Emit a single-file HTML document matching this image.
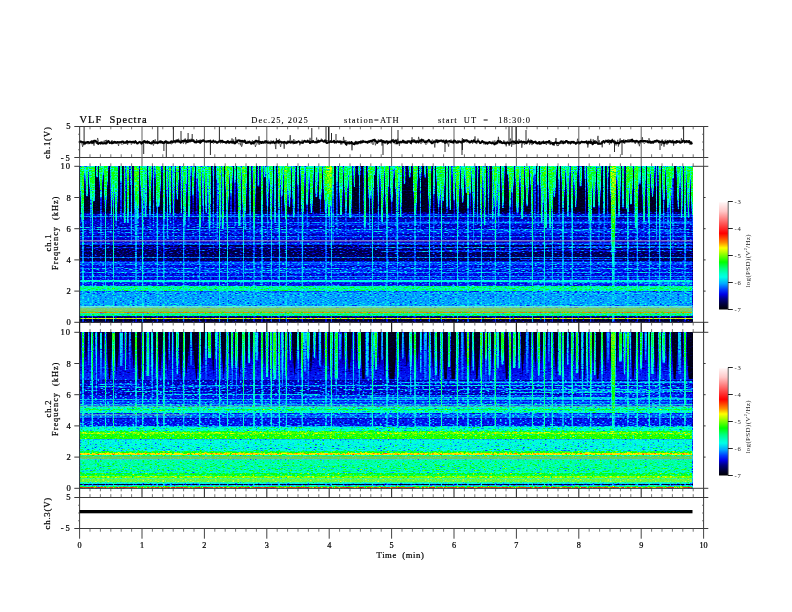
<!DOCTYPE html><html><head><meta charset="utf-8"><style>html,body{margin:0;padding:0;background:#fff;width:792px;height:612px;overflow:hidden}svg{display:block;will-change:transform}text{stroke:#000;stroke-width:0.22px;fill:#000}text.thin{stroke:none;fill:#222}text.mid{stroke-width:0.06px}</style></head><body><svg width="792" height="612" viewBox="0 0 792 612" font-family="Liberation Serif, serif" fill="#111"><defs><filter id="fp2t" x="79.6" y="166.30" width="612.9" height="46.00" filterUnits="userSpaceOnUse" color-interpolation-filters="sRGB"><feTurbulence type="fractalNoise" baseFrequency="0.4 0.95" numOctaves="1" seed="2" result="n"/><feComponentTransfer in="n" result="nt"><feFuncR type="table" tableValues="0 0.1 0.2 0.3 0.4 0.47 0.5 0.5 0.5 0.5 0.5"/><feFuncG type="table" tableValues="0 0 0 0 0 0.02 0.2 0.5 0.9 1 1"/><feFuncA type="linear" slope="0" intercept="1"/></feComponentTransfer><feColorMatrix in="nt" type="matrix" values="1 0 0 0 0  1 0 0 0 0  1 0 0 0 0  0 0 0 0 1" result="nd"/><feColorMatrix in="nt" type="matrix" values="0 1 0 0 0  0 1 0 0 0  0 1 0 0 0  0 0 0 0 1" result="nr"/><feGaussianBlur in="SourceGraphic" stdDeviation="0.5 0" result="sb"/><feComposite in="sb" in2="nd" operator="arithmetic" k1="1.8" k2="0.100" k3="0" k4="0" result="v1"/><feComposite in="v1" in2="nr" operator="arithmetic" k1="-0.1" k2="1" k3="0.1" k4="0" result="v"/><feComponentTransfer in="v" result="c"><feFuncR type="table" tableValues="0.000 0.000 0.000 0.000 0.000 0.000 0.000 0.000 0.000 0.000 0.000 0.000 0.000 0.000 0.000 0.000 0.000 0.000 0.000 0.000 0.000 0.000 0.000 0.000 0.000 0.000 0.000 0.000 0.000 0.000 0.000 0.000 0.000 0.000 0.000 0.000 0.000 0.000 0.000 0.000 0.000 0.000 0.000 0.000 0.008 0.085 0.162 0.239 0.316 0.393 0.471 0.552 0.633 0.713 0.785 0.857 0.928 1.000 1.000 1.000 1.000 1.000 1.000 1.000 1.000 1.000 1.000 1.000 1.000 1.000 1.000 1.000 1.000 1.000 1.000 1.000 1.000 1.000 1.000 1.000 1.000 1.000 1.000 1.000 1.000 1.000 1.000 1.000 1.000 1.000 1.000 1.000 1.000 1.000 1.000 1.000 1.000 1.000 1.000 1.000 1.000"/><feFuncG type="table" tableValues="0.000 0.000 0.000 0.000 0.000 0.000 0.000 0.000 0.000 0.000 0.000 0.000 0.000 0.000 0.000 0.052 0.105 0.157 0.209 0.275 0.353 0.431 0.510 0.588 0.667 0.722 0.778 0.833 0.889 0.944 1.000 1.000 1.000 1.000 1.000 1.000 1.000 1.000 1.000 1.000 1.000 1.000 1.000 1.000 1.000 1.000 1.000 1.000 1.000 1.000 1.000 1.000 1.000 1.000 1.000 1.000 1.000 1.000 0.910 0.820 0.729 0.639 0.549 0.482 0.416 0.349 0.282 0.217 0.155 0.093 0.031 0.017 0.051 0.086 0.124 0.162 0.200 0.238 0.276 0.314 0.353 0.392 0.431 0.471 0.510 0.549 0.588 0.627 0.667 0.706 0.745 0.784 0.806 0.827 0.849 0.870 0.892 0.913 0.935 0.965 1.000"/><feFuncB type="table" tableValues="0.000 0.047 0.094 0.141 0.188 0.235 0.293 0.351 0.409 0.466 0.533 0.625 0.717 0.810 0.902 0.924 0.946 0.967 0.989 1.000 1.000 1.000 1.000 1.000 1.000 0.984 0.967 0.951 0.935 0.918 0.902 0.863 0.824 0.784 0.724 0.664 0.604 0.544 0.478 0.397 0.316 0.235 0.154 0.073 0.000 0.000 0.000 0.000 0.000 0.000 0.000 0.000 0.000 0.000 0.000 0.000 0.000 0.000 0.000 0.000 0.000 0.000 0.000 0.000 0.000 0.000 0.000 0.000 0.000 0.000 0.000 0.017 0.051 0.086 0.124 0.162 0.200 0.238 0.276 0.314 0.353 0.392 0.431 0.471 0.510 0.549 0.588 0.627 0.667 0.706 0.745 0.784 0.806 0.827 0.849 0.870 0.892 0.913 0.935 0.965 1.000"/><feFuncA type="linear" slope="0" intercept="1"/></feComponentTransfer><feGaussianBlur in="c" stdDeviation="0.6"/></filter><filter id="fp3t" x="79.6" y="332.30" width="612.9" height="47.00" filterUnits="userSpaceOnUse" color-interpolation-filters="sRGB"><feTurbulence type="fractalNoise" baseFrequency="0.4 0.95" numOctaves="1" seed="5" result="n"/><feComponentTransfer in="n" result="nt"><feFuncR type="table" tableValues="0 0.1 0.2 0.3 0.45 0.5 0.5 0.5 0.5 0.5 0.5"/><feFuncG type="table" tableValues="0 0 0 0 0 0.02 0.2 0.5 0.9 1 1"/><feFuncA type="linear" slope="0" intercept="1"/></feComponentTransfer><feColorMatrix in="nt" type="matrix" values="1 0 0 0 0  1 0 0 0 0  1 0 0 0 0  0 0 0 0 1" result="nd"/><feColorMatrix in="nt" type="matrix" values="0 1 0 0 0  0 1 0 0 0  0 1 0 0 0  0 0 0 0 1" result="nr"/><feGaussianBlur in="SourceGraphic" stdDeviation="0.5 0" result="sb"/><feComposite in="sb" in2="nd" operator="arithmetic" k1="1.4" k2="0.300" k3="0" k4="0" result="v1"/><feComposite in="v1" in2="nr" operator="arithmetic" k1="-0.08" k2="1" k3="0.08" k4="0" result="v"/><feComponentTransfer in="v" result="c"><feFuncR type="table" tableValues="0.000 0.000 0.000 0.000 0.000 0.000 0.000 0.000 0.000 0.000 0.000 0.000 0.000 0.000 0.000 0.000 0.000 0.000 0.000 0.000 0.000 0.000 0.000 0.000 0.000 0.000 0.000 0.000 0.000 0.000 0.000 0.000 0.000 0.000 0.000 0.000 0.000 0.000 0.000 0.000 0.000 0.000 0.000 0.000 0.008 0.085 0.162 0.239 0.316 0.393 0.471 0.552 0.633 0.713 0.785 0.857 0.928 1.000 1.000 1.000 1.000 1.000 1.000 1.000 1.000 1.000 1.000 1.000 1.000 1.000 1.000 1.000 1.000 1.000 1.000 1.000 1.000 1.000 1.000 1.000 1.000 1.000 1.000 1.000 1.000 1.000 1.000 1.000 1.000 1.000 1.000 1.000 1.000 1.000 1.000 1.000 1.000 1.000 1.000 1.000 1.000"/><feFuncG type="table" tableValues="0.000 0.000 0.000 0.000 0.000 0.000 0.000 0.000 0.000 0.000 0.000 0.000 0.000 0.000 0.000 0.052 0.105 0.157 0.209 0.275 0.353 0.431 0.510 0.588 0.667 0.722 0.778 0.833 0.889 0.944 1.000 1.000 1.000 1.000 1.000 1.000 1.000 1.000 1.000 1.000 1.000 1.000 1.000 1.000 1.000 1.000 1.000 1.000 1.000 1.000 1.000 1.000 1.000 1.000 1.000 1.000 1.000 1.000 0.910 0.820 0.729 0.639 0.549 0.482 0.416 0.349 0.282 0.217 0.155 0.093 0.031 0.017 0.051 0.086 0.124 0.162 0.200 0.238 0.276 0.314 0.353 0.392 0.431 0.471 0.510 0.549 0.588 0.627 0.667 0.706 0.745 0.784 0.806 0.827 0.849 0.870 0.892 0.913 0.935 0.965 1.000"/><feFuncB type="table" tableValues="0.000 0.047 0.094 0.141 0.188 0.235 0.293 0.351 0.409 0.466 0.533 0.625 0.717 0.810 0.902 0.924 0.946 0.967 0.989 1.000 1.000 1.000 1.000 1.000 1.000 0.984 0.967 0.951 0.935 0.918 0.902 0.863 0.824 0.784 0.724 0.664 0.604 0.544 0.478 0.397 0.316 0.235 0.154 0.073 0.000 0.000 0.000 0.000 0.000 0.000 0.000 0.000 0.000 0.000 0.000 0.000 0.000 0.000 0.000 0.000 0.000 0.000 0.000 0.000 0.000 0.000 0.000 0.000 0.000 0.000 0.000 0.017 0.051 0.086 0.124 0.162 0.200 0.238 0.276 0.314 0.353 0.392 0.431 0.471 0.510 0.549 0.588 0.627 0.667 0.706 0.745 0.784 0.806 0.827 0.849 0.870 0.892 0.913 0.935 0.965 1.000"/><feFuncA type="linear" slope="0" intercept="1"/></feComponentTransfer><feGaussianBlur in="c" stdDeviation="0.6"/></filter><filter id="fp2" x="79.6" y="212.30" width="612.9" height="110.00" filterUnits="userSpaceOnUse" color-interpolation-filters="sRGB"><feTurbulence type="fractalNoise" baseFrequency="0.4 0.95" numOctaves="1" seed="2" result="n"/><feComponentTransfer in="n" result="nt"><feFuncR type="table" tableValues="0 0.1 0.2 0.3 0.45 0.5 0.5 0.5 0.5 0.5 0.5"/><feFuncG type="table" tableValues="0 0 0 0 0 0.02 0.2 0.5 0.9 1 1"/><feFuncA type="linear" slope="0" intercept="1"/></feComponentTransfer><feColorMatrix in="nt" type="matrix" values="1 0 0 0 0  1 0 0 0 0  1 0 0 0 0  0 0 0 0 1" result="nd"/><feColorMatrix in="nt" type="matrix" values="0 1 0 0 0  0 1 0 0 0  0 1 0 0 0  0 0 0 0 1" result="nr"/><feGaussianBlur in="SourceGraphic" stdDeviation="0.5 0" result="sb"/><feComposite in="sb" in2="nd" operator="arithmetic" k1="1.4" k2="0.300" k3="0" k4="0" result="v1"/><feComposite in="v1" in2="nr" operator="arithmetic" k1="-0.22" k2="1" k3="0.22" k4="0" result="v"/><feComponentTransfer in="v" result="c"><feFuncR type="table" tableValues="0.000 0.000 0.000 0.000 0.000 0.000 0.000 0.000 0.000 0.000 0.000 0.000 0.000 0.000 0.000 0.000 0.000 0.000 0.000 0.000 0.000 0.000 0.000 0.000 0.000 0.000 0.000 0.000 0.000 0.000 0.000 0.000 0.000 0.000 0.000 0.000 0.000 0.000 0.000 0.000 0.000 0.000 0.000 0.000 0.008 0.085 0.162 0.239 0.316 0.393 0.471 0.552 0.633 0.713 0.785 0.857 0.928 1.000 1.000 1.000 1.000 1.000 1.000 1.000 1.000 1.000 1.000 1.000 1.000 1.000 1.000 1.000 1.000 1.000 1.000 1.000 1.000 1.000 1.000 1.000 1.000 1.000 1.000 1.000 1.000 1.000 1.000 1.000 1.000 1.000 1.000 1.000 1.000 1.000 1.000 1.000 1.000 1.000 1.000 1.000 1.000"/><feFuncG type="table" tableValues="0.000 0.000 0.000 0.000 0.000 0.000 0.000 0.000 0.000 0.000 0.000 0.000 0.000 0.000 0.000 0.052 0.105 0.157 0.209 0.275 0.353 0.431 0.510 0.588 0.667 0.722 0.778 0.833 0.889 0.944 1.000 1.000 1.000 1.000 1.000 1.000 1.000 1.000 1.000 1.000 1.000 1.000 1.000 1.000 1.000 1.000 1.000 1.000 1.000 1.000 1.000 1.000 1.000 1.000 1.000 1.000 1.000 1.000 0.910 0.820 0.729 0.639 0.549 0.482 0.416 0.349 0.282 0.217 0.155 0.093 0.031 0.017 0.051 0.086 0.124 0.162 0.200 0.238 0.276 0.314 0.353 0.392 0.431 0.471 0.510 0.549 0.588 0.627 0.667 0.706 0.745 0.784 0.806 0.827 0.849 0.870 0.892 0.913 0.935 0.965 1.000"/><feFuncB type="table" tableValues="0.000 0.047 0.094 0.141 0.188 0.235 0.293 0.351 0.409 0.466 0.533 0.625 0.717 0.810 0.902 0.924 0.946 0.967 0.989 1.000 1.000 1.000 1.000 1.000 1.000 0.984 0.967 0.951 0.935 0.918 0.902 0.863 0.824 0.784 0.724 0.664 0.604 0.544 0.478 0.397 0.316 0.235 0.154 0.073 0.000 0.000 0.000 0.000 0.000 0.000 0.000 0.000 0.000 0.000 0.000 0.000 0.000 0.000 0.000 0.000 0.000 0.000 0.000 0.000 0.000 0.000 0.000 0.000 0.000 0.000 0.000 0.017 0.051 0.086 0.124 0.162 0.200 0.238 0.276 0.314 0.353 0.392 0.431 0.471 0.510 0.549 0.588 0.627 0.667 0.706 0.745 0.784 0.806 0.827 0.849 0.870 0.892 0.913 0.935 0.965 1.000"/><feFuncA type="linear" slope="0" intercept="1"/></feComponentTransfer><feGaussianBlur in="c" stdDeviation="0.6"/></filter><linearGradient id="gr0" x1="0" y1="0" x2="0" y2="1"><stop offset="0" stop-color="#080808"/><stop offset="0.5" stop-color="#141414"/><stop offset="1" stop-color="#1f1f1f"/></linearGradient><linearGradient id="gr1" x1="0" y1="0" x2="0" y2="1"><stop offset="0" stop-color="#6b6b6b"/><stop offset="0.7" stop-color="#666666"/><stop offset="1" stop-color="#4a4a4a"/></linearGradient><linearGradient id="gr2" x1="0" y1="0" x2="0" y2="1"><stop offset="0" stop-color="#525252"/><stop offset="0.3" stop-color="#525252"/><stop offset="1" stop-color="#303030"/></linearGradient><linearGradient id="gr3" x1="0" y1="0" x2="0" y2="1"><stop offset="0" stop-color="#6b6b6b"/><stop offset="0.7" stop-color="#666666"/><stop offset="1" stop-color="#4f4f4f"/></linearGradient><linearGradient id="gr4" x1="0" y1="0" x2="0" y2="1"><stop offset="0" stop-color="#737373"/><stop offset="0.7" stop-color="#6e6e6e"/><stop offset="1" stop-color="#525252"/></linearGradient><linearGradient id="gr5" x1="0" y1="0" x2="0" y2="1"><stop offset="0" stop-color="#4c4c4c"/><stop offset="0.3" stop-color="#4c4c4c"/><stop offset="1" stop-color="#2b2b2b"/></linearGradient><linearGradient id="gr6" x1="0" y1="0" x2="0" y2="1"><stop offset="0" stop-color="#757575"/><stop offset="0.7" stop-color="#707070"/><stop offset="1" stop-color="#545454"/></linearGradient><linearGradient id="gr7" x1="0" y1="0" x2="0" y2="1"><stop offset="0" stop-color="#757575"/><stop offset="0.7" stop-color="#707070"/><stop offset="1" stop-color="#4a4a4a"/></linearGradient><linearGradient id="gr8" x1="0" y1="0" x2="0" y2="1"><stop offset="0" stop-color="#737373"/><stop offset="0.7" stop-color="#6e6e6e"/><stop offset="1" stop-color="#474747"/></linearGradient><linearGradient id="gr9" x1="0" y1="0" x2="0" y2="1"><stop offset="0" stop-color="#575757"/><stop offset="0.3" stop-color="#575757"/><stop offset="1" stop-color="#363636"/></linearGradient><linearGradient id="gr10" x1="0" y1="0" x2="0" y2="1"><stop offset="0" stop-color="#757575"/><stop offset="0.7" stop-color="#707070"/><stop offset="1" stop-color="#4f4f4f"/></linearGradient><linearGradient id="gr11" x1="0" y1="0" x2="0" y2="1"><stop offset="0" stop-color="#454545"/><stop offset="0.3" stop-color="#454545"/><stop offset="1" stop-color="#242424"/></linearGradient><linearGradient id="gr12" x1="0" y1="0" x2="0" y2="1"><stop offset="0" stop-color="#707070"/><stop offset="0.7" stop-color="#6b6b6b"/><stop offset="1" stop-color="#4f4f4f"/></linearGradient><linearGradient id="gr13" x1="0" y1="0" x2="0" y2="1"><stop offset="0" stop-color="#6e6e6e"/><stop offset="0.7" stop-color="#696969"/><stop offset="1" stop-color="#4a4a4a"/></linearGradient><linearGradient id="gr14" x1="0" y1="0" x2="0" y2="1"><stop offset="0" stop-color="#545454"/><stop offset="0.3" stop-color="#545454"/><stop offset="1" stop-color="#333333"/></linearGradient><linearGradient id="gr15" x1="0" y1="0" x2="0" y2="1"><stop offset="0" stop-color="#757575"/><stop offset="0.7" stop-color="#707070"/><stop offset="1" stop-color="#525252"/></linearGradient><linearGradient id="gr16" x1="0" y1="0" x2="0" y2="1"><stop offset="0" stop-color="#6e6e6e"/><stop offset="0.7" stop-color="#696969"/><stop offset="1" stop-color="#525252"/></linearGradient><linearGradient id="gr17" x1="0" y1="0" x2="0" y2="1"><stop offset="0" stop-color="#787878"/><stop offset="0.7" stop-color="#737373"/><stop offset="1" stop-color="#525252"/></linearGradient><linearGradient id="gr18" x1="0" y1="0" x2="0" y2="1"><stop offset="0" stop-color="#787878"/><stop offset="0.7" stop-color="#737373"/><stop offset="1" stop-color="#474747"/></linearGradient><linearGradient id="gr19" x1="0" y1="0" x2="0" y2="1"><stop offset="0" stop-color="#696969"/><stop offset="0.7" stop-color="#636363"/><stop offset="1" stop-color="#525252"/></linearGradient><linearGradient id="gr20" x1="0" y1="0" x2="0" y2="1"><stop offset="0" stop-color="#787878"/><stop offset="0.7" stop-color="#737373"/><stop offset="1" stop-color="#4f4f4f"/></linearGradient><linearGradient id="gr21" x1="0" y1="0" x2="0" y2="1"><stop offset="0" stop-color="#4f4f4f"/><stop offset="0.3" stop-color="#4f4f4f"/><stop offset="1" stop-color="#2e2e2e"/></linearGradient><linearGradient id="gr22" x1="0" y1="0" x2="0" y2="1"><stop offset="0" stop-color="#6e6e6e"/><stop offset="0.7" stop-color="#696969"/><stop offset="1" stop-color="#474747"/></linearGradient><linearGradient id="gr23" x1="0" y1="0" x2="0" y2="1"><stop offset="0" stop-color="#4a4a4a"/><stop offset="0.3" stop-color="#4a4a4a"/><stop offset="1" stop-color="#292929"/></linearGradient><linearGradient id="gr24" x1="0" y1="0" x2="0" y2="1"><stop offset="0" stop-color="#787878"/><stop offset="0.7" stop-color="#737373"/><stop offset="1" stop-color="#4a4a4a"/></linearGradient><linearGradient id="gr25" x1="0" y1="0" x2="0" y2="1"><stop offset="0" stop-color="#707070"/><stop offset="0.7" stop-color="#6b6b6b"/><stop offset="1" stop-color="#4a4a4a"/></linearGradient><linearGradient id="gr26" x1="0" y1="0" x2="0" y2="1"><stop offset="0" stop-color="#595959"/><stop offset="0.3" stop-color="#595959"/><stop offset="1" stop-color="#383838"/></linearGradient><linearGradient id="gr27" x1="0" y1="0" x2="0" y2="1"><stop offset="0" stop-color="#474747"/><stop offset="0.3" stop-color="#474747"/><stop offset="1" stop-color="#262626"/></linearGradient><linearGradient id="gr28" x1="0" y1="0" x2="0" y2="1"><stop offset="0" stop-color="#787878"/><stop offset="0.7" stop-color="#737373"/><stop offset="1" stop-color="#545454"/></linearGradient><linearGradient id="gr29" x1="0" y1="0" x2="0" y2="1"><stop offset="0" stop-color="#6b6b6b"/><stop offset="0.7" stop-color="#666666"/><stop offset="1" stop-color="#525252"/></linearGradient><linearGradient id="gr30" x1="0" y1="0" x2="0" y2="1"><stop offset="0" stop-color="#6b6b6b"/><stop offset="0.7" stop-color="#666666"/><stop offset="1" stop-color="#545454"/></linearGradient><linearGradient id="gr31" x1="0" y1="0" x2="0" y2="1"><stop offset="0" stop-color="#6e6e6e"/><stop offset="0.7" stop-color="#696969"/><stop offset="1" stop-color="#4f4f4f"/></linearGradient><linearGradient id="gr32" x1="0" y1="0" x2="0" y2="1"><stop offset="0" stop-color="#707070"/><stop offset="0.7" stop-color="#6b6b6b"/><stop offset="1" stop-color="#525252"/></linearGradient><linearGradient id="gr33" x1="0" y1="0" x2="0" y2="1"><stop offset="0" stop-color="#737373"/><stop offset="0.7" stop-color="#6e6e6e"/><stop offset="1" stop-color="#4c4c4c"/></linearGradient><linearGradient id="gr34" x1="0" y1="0" x2="0" y2="1"><stop offset="0" stop-color="#6e6e6e"/><stop offset="0.7" stop-color="#696969"/><stop offset="1" stop-color="#4c4c4c"/></linearGradient><linearGradient id="gr35" x1="0" y1="0" x2="0" y2="1"><stop offset="0" stop-color="#757575"/><stop offset="0.7" stop-color="#707070"/><stop offset="1" stop-color="#474747"/></linearGradient><linearGradient id="gr36" x1="0" y1="0" x2="0" y2="1"><stop offset="0" stop-color="#707070"/><stop offset="0.7" stop-color="#6b6b6b"/><stop offset="1" stop-color="#4c4c4c"/></linearGradient><linearGradient id="gr37" x1="0" y1="0" x2="0" y2="1"><stop offset="0" stop-color="#737373"/><stop offset="0.7" stop-color="#6e6e6e"/><stop offset="1" stop-color="#545454"/></linearGradient><linearGradient id="gr38" x1="0" y1="0" x2="0" y2="1"><stop offset="0" stop-color="#6b6b6b"/><stop offset="0.7" stop-color="#666666"/><stop offset="1" stop-color="#4c4c4c"/></linearGradient><linearGradient id="gr39" x1="0" y1="0" x2="0" y2="1"><stop offset="0" stop-color="#6e6e6e"/><stop offset="0.7" stop-color="#696969"/><stop offset="1" stop-color="#575757"/></linearGradient><linearGradient id="gr40" x1="0" y1="0" x2="0" y2="1"><stop offset="0" stop-color="#696969"/><stop offset="0.7" stop-color="#636363"/><stop offset="1" stop-color="#4c4c4c"/></linearGradient><linearGradient id="gr41" x1="0" y1="0" x2="0" y2="1"><stop offset="0" stop-color="#737373"/><stop offset="0.7" stop-color="#6e6e6e"/><stop offset="1" stop-color="#4a4a4a"/></linearGradient><linearGradient id="gr42" x1="0" y1="0" x2="0" y2="1"><stop offset="0" stop-color="#6e6e6e"/><stop offset="0.7" stop-color="#696969"/><stop offset="1" stop-color="#545454"/></linearGradient><linearGradient id="gr43" x1="0" y1="0" x2="0" y2="1"><stop offset="0" stop-color="#6b6b6b"/><stop offset="0.7" stop-color="#666666"/><stop offset="1" stop-color="#575757"/></linearGradient><linearGradient id="gr44" x1="0" y1="0" x2="0" y2="1"><stop offset="0" stop-color="#757575"/><stop offset="0.7" stop-color="#707070"/><stop offset="1" stop-color="#4c4c4c"/></linearGradient><linearGradient id="gr45" x1="0" y1="0" x2="0" y2="1"><stop offset="0" stop-color="#707070"/><stop offset="0.7" stop-color="#6b6b6b"/><stop offset="1" stop-color="#545454"/></linearGradient><linearGradient id="gr46" x1="0" y1="0" x2="0" y2="1"><stop offset="0" stop-color="#696969"/><stop offset="0.7" stop-color="#636363"/><stop offset="1" stop-color="#545454"/></linearGradient><linearGradient id="gr47" x1="0" y1="0" x2="0" y2="1"><stop offset="0" stop-color="#757575"/><stop offset="0.7" stop-color="#707070"/><stop offset="1" stop-color="#575757"/></linearGradient><linearGradient id="gr48" x1="0" y1="0" x2="0" y2="1"><stop offset="0" stop-color="#707070"/><stop offset="0.7" stop-color="#6b6b6b"/><stop offset="1" stop-color="#474747"/></linearGradient><linearGradient id="gr49" x1="0" y1="0" x2="0" y2="1"><stop offset="0" stop-color="#696969"/><stop offset="0.7" stop-color="#636363"/><stop offset="1" stop-color="#4a4a4a"/></linearGradient><linearGradient id="gr50" x1="0" y1="0" x2="0" y2="1"><stop offset="0" stop-color="#696969"/><stop offset="0.7" stop-color="#636363"/><stop offset="1" stop-color="#474747"/></linearGradient><linearGradient id="gr51" x1="0" y1="0" x2="0" y2="1"><stop offset="0" stop-color="#737373"/><stop offset="0.7" stop-color="#6e6e6e"/><stop offset="1" stop-color="#575757"/></linearGradient><linearGradient id="gr52" x1="0" y1="0" x2="0" y2="1"><stop offset="0" stop-color="#787878"/><stop offset="0.7" stop-color="#737373"/><stop offset="1" stop-color="#4c4c4c"/></linearGradient><linearGradient id="gr53" x1="0" y1="0" x2="0" y2="1"><stop offset="0" stop-color="#737373"/><stop offset="0.7" stop-color="#6e6e6e"/><stop offset="1" stop-color="#4f4f4f"/></linearGradient><linearGradient id="gr54" x1="0" y1="0" x2="0" y2="1"><stop offset="0" stop-color="#696969"/><stop offset="0.7" stop-color="#636363"/><stop offset="1" stop-color="#4f4f4f"/></linearGradient><linearGradient id="gr55" x1="0" y1="0" x2="0" y2="1"><stop offset="0" stop-color="#707070"/><stop offset="0.7" stop-color="#6b6b6b"/><stop offset="1" stop-color="#575757"/></linearGradient><linearGradient id="gr56" x1="0" y1="0" x2="0" y2="1"><stop offset="0" stop-color="#787878"/><stop offset="0.7" stop-color="#737373"/><stop offset="1" stop-color="#575757"/></linearGradient><linearGradient id="gr57" x1="0" y1="0" x2="0" y2="1"><stop offset="0" stop-color="#7a7a7a"/><stop offset="0.7" stop-color="#757575"/><stop offset="1" stop-color="#5c5c5c"/></linearGradient><linearGradient id="gr58" x1="0" y1="0" x2="0" y2="1"><stop offset="0" stop-color="#616161"/><stop offset="0.3" stop-color="#616161"/><stop offset="1" stop-color="#404040"/></linearGradient><linearGradient id="gr59" x1="0" y1="0" x2="0" y2="1"><stop offset="0" stop-color="#757575"/><stop offset="0.7" stop-color="#707070"/><stop offset="1" stop-color="#5c5c5c"/></linearGradient><linearGradient id="gr60" x1="0" y1="0" x2="0" y2="1"><stop offset="0" stop-color="#737373"/><stop offset="0.7" stop-color="#6e6e6e"/><stop offset="1" stop-color="#5c5c5c"/></linearGradient><linearGradient id="gr61" x1="0" y1="0" x2="0" y2="1"><stop offset="0" stop-color="#7d7d7d"/><stop offset="0.7" stop-color="#787878"/><stop offset="1" stop-color="#5c5c5c"/></linearGradient><linearGradient id="gr62" x1="0" y1="0" x2="0" y2="1"><stop offset="0" stop-color="#707070"/><stop offset="0.7" stop-color="#6b6b6b"/><stop offset="1" stop-color="#5c5c5c"/></linearGradient><linearGradient id="gr63" x1="0" y1="0" x2="0" y2="1"><stop offset="0" stop-color="#636363"/><stop offset="0.3" stop-color="#636363"/><stop offset="1" stop-color="#424242"/></linearGradient><linearGradient id="gr64" x1="0" y1="0" x2="0" y2="1"><stop offset="0" stop-color="#5e5e5e"/><stop offset="0.3" stop-color="#5e5e5e"/><stop offset="1" stop-color="#3d3d3d"/></linearGradient><linearGradient id="gr65" x1="0" y1="0" x2="0" y2="1"><stop offset="0" stop-color="#787878"/><stop offset="0.7" stop-color="#737373"/><stop offset="1" stop-color="#5c5c5c"/></linearGradient><linearGradient id="gr66" x1="0" y1="0" x2="0" y2="1"><stop offset="0" stop-color="#808080"/><stop offset="0.7" stop-color="#7a7a7a"/><stop offset="1" stop-color="#5c5c5c"/></linearGradient><linearGradient id="gr67" x1="0" y1="0" x2="0" y2="1"><stop offset="0" stop-color="#5c5c5c"/><stop offset="0.3" stop-color="#5c5c5c"/><stop offset="1" stop-color="#3b3b3b"/></linearGradient><linearGradient id="gr68" x1="0" y1="0" x2="0" y2="1"><stop offset="0" stop-color="#8c8c8c"/><stop offset="0.5" stop-color="#808080"/><stop offset="1" stop-color="#616161"/></linearGradient><linearGradient id="gr69" x1="0" y1="0" x2="0" y2="1"><stop offset="0" stop-color="#8c8c8c"/><stop offset="0.5" stop-color="#808080"/><stop offset="1" stop-color="#5c5c5c"/></linearGradient><filter id="fp3" x="79.6" y="379.30" width="612.9" height="109.00" filterUnits="userSpaceOnUse" color-interpolation-filters="sRGB"><feTurbulence type="fractalNoise" baseFrequency="0.4 0.95" numOctaves="1" seed="5" result="n"/><feComponentTransfer in="n" result="nt"><feFuncR type="table" tableValues="0 0.1 0.2 0.3 0.45 0.5 0.5 0.5 0.5 0.5 0.5"/><feFuncG type="table" tableValues="0 0 0 0 0 0.02 0.2 0.5 0.9 1 1"/><feFuncA type="linear" slope="0" intercept="1"/></feComponentTransfer><feColorMatrix in="nt" type="matrix" values="1 0 0 0 0  1 0 0 0 0  1 0 0 0 0  0 0 0 0 1" result="nd"/><feColorMatrix in="nt" type="matrix" values="0 1 0 0 0  0 1 0 0 0  0 1 0 0 0  0 0 0 0 1" result="nr"/><feGaussianBlur in="SourceGraphic" stdDeviation="0.5 0" result="sb"/><feComposite in="sb" in2="nd" operator="arithmetic" k1="1.4" k2="0.300" k3="0" k4="0" result="v1"/><feComposite in="v1" in2="nr" operator="arithmetic" k1="-0.3" k2="1" k3="0.3" k4="0" result="v"/><feComponentTransfer in="v" result="c"><feFuncR type="table" tableValues="0.000 0.000 0.000 0.000 0.000 0.000 0.000 0.000 0.000 0.000 0.000 0.000 0.000 0.000 0.000 0.000 0.000 0.000 0.000 0.000 0.000 0.000 0.000 0.000 0.000 0.000 0.000 0.000 0.000 0.000 0.000 0.000 0.000 0.000 0.000 0.000 0.000 0.000 0.000 0.000 0.000 0.000 0.000 0.000 0.008 0.085 0.162 0.239 0.316 0.393 0.471 0.552 0.633 0.713 0.785 0.857 0.928 1.000 1.000 1.000 1.000 1.000 1.000 1.000 1.000 1.000 1.000 1.000 1.000 1.000 1.000 1.000 1.000 1.000 1.000 1.000 1.000 1.000 1.000 1.000 1.000 1.000 1.000 1.000 1.000 1.000 1.000 1.000 1.000 1.000 1.000 1.000 1.000 1.000 1.000 1.000 1.000 1.000 1.000 1.000 1.000"/><feFuncG type="table" tableValues="0.000 0.000 0.000 0.000 0.000 0.000 0.000 0.000 0.000 0.000 0.000 0.000 0.000 0.000 0.000 0.052 0.105 0.157 0.209 0.275 0.353 0.431 0.510 0.588 0.667 0.722 0.778 0.833 0.889 0.944 1.000 1.000 1.000 1.000 1.000 1.000 1.000 1.000 1.000 1.000 1.000 1.000 1.000 1.000 1.000 1.000 1.000 1.000 1.000 1.000 1.000 1.000 1.000 1.000 1.000 1.000 1.000 1.000 0.910 0.820 0.729 0.639 0.549 0.482 0.416 0.349 0.282 0.217 0.155 0.093 0.031 0.017 0.051 0.086 0.124 0.162 0.200 0.238 0.276 0.314 0.353 0.392 0.431 0.471 0.510 0.549 0.588 0.627 0.667 0.706 0.745 0.784 0.806 0.827 0.849 0.870 0.892 0.913 0.935 0.965 1.000"/><feFuncB type="table" tableValues="0.000 0.047 0.094 0.141 0.188 0.235 0.293 0.351 0.409 0.466 0.533 0.625 0.717 0.810 0.902 0.924 0.946 0.967 0.989 1.000 1.000 1.000 1.000 1.000 1.000 0.984 0.967 0.951 0.935 0.918 0.902 0.863 0.824 0.784 0.724 0.664 0.604 0.544 0.478 0.397 0.316 0.235 0.154 0.073 0.000 0.000 0.000 0.000 0.000 0.000 0.000 0.000 0.000 0.000 0.000 0.000 0.000 0.000 0.000 0.000 0.000 0.000 0.000 0.000 0.000 0.000 0.000 0.000 0.000 0.000 0.000 0.017 0.051 0.086 0.124 0.162 0.200 0.238 0.276 0.314 0.353 0.392 0.431 0.471 0.510 0.549 0.588 0.627 0.667 0.706 0.745 0.784 0.806 0.827 0.849 0.870 0.892 0.913 0.935 0.965 1.000"/><feFuncA type="linear" slope="0" intercept="1"/></feComponentTransfer><feGaussianBlur in="c" stdDeviation="0.6"/></filter><linearGradient id="gr70" x1="0" y1="0" x2="0" y2="1"><stop offset="0" stop-color="#141414"/><stop offset="0.5" stop-color="#1f1f1f"/><stop offset="1" stop-color="#292929"/></linearGradient><linearGradient id="gr71" x1="0" y1="0" x2="0" y2="1"><stop offset="0" stop-color="#424242"/><stop offset="0.6" stop-color="#3b3b3b"/><stop offset="1" stop-color="#363636"/></linearGradient><linearGradient id="gr72" x1="0" y1="0" x2="0" y2="1"><stop offset="0" stop-color="#3b3b3b"/><stop offset="0.6" stop-color="#333333"/><stop offset="1" stop-color="#2e2e2e"/></linearGradient><linearGradient id="gr73" x1="0" y1="0" x2="0" y2="1"><stop offset="0" stop-color="#4a4a4a"/><stop offset="0.6" stop-color="#424242"/><stop offset="1" stop-color="#3d3d3d"/></linearGradient><linearGradient id="gr74" x1="0" y1="0" x2="0" y2="1"><stop offset="0" stop-color="#6b6b6b"/><stop offset="0.6" stop-color="#636363"/><stop offset="1" stop-color="#4c4c4c"/></linearGradient><linearGradient id="gr75" x1="0" y1="0" x2="0" y2="1"><stop offset="0" stop-color="#3d3d3d"/><stop offset="0.6" stop-color="#363636"/><stop offset="1" stop-color="#303030"/></linearGradient><linearGradient id="gr76" x1="0" y1="0" x2="0" y2="1"><stop offset="0" stop-color="#666666"/><stop offset="0.6" stop-color="#5e5e5e"/><stop offset="1" stop-color="#595959"/></linearGradient><linearGradient id="gr77" x1="0" y1="0" x2="0" y2="1"><stop offset="0" stop-color="#454545"/><stop offset="0.6" stop-color="#3d3d3d"/><stop offset="1" stop-color="#383838"/></linearGradient><linearGradient id="gr78" x1="0" y1="0" x2="0" y2="1"><stop offset="0" stop-color="#404040"/><stop offset="0.6" stop-color="#383838"/><stop offset="1" stop-color="#333333"/></linearGradient><linearGradient id="gr79" x1="0" y1="0" x2="0" y2="1"><stop offset="0" stop-color="#4f4f4f"/><stop offset="0.6" stop-color="#474747"/><stop offset="1" stop-color="#424242"/></linearGradient><linearGradient id="gr80" x1="0" y1="0" x2="0" y2="1"><stop offset="0" stop-color="#6e6e6e"/><stop offset="0.6" stop-color="#666666"/><stop offset="1" stop-color="#4a4a4a"/></linearGradient><linearGradient id="gr81" x1="0" y1="0" x2="0" y2="1"><stop offset="0" stop-color="#474747"/><stop offset="0.6" stop-color="#404040"/><stop offset="1" stop-color="#3b3b3b"/></linearGradient><linearGradient id="gr82" x1="0" y1="0" x2="0" y2="1"><stop offset="0" stop-color="#757575"/><stop offset="0.6" stop-color="#6e6e6e"/><stop offset="1" stop-color="#575757"/></linearGradient><linearGradient id="gr83" x1="0" y1="0" x2="0" y2="1"><stop offset="0" stop-color="#525252"/><stop offset="0.6" stop-color="#4a4a4a"/><stop offset="1" stop-color="#454545"/></linearGradient><linearGradient id="gr84" x1="0" y1="0" x2="0" y2="1"><stop offset="0" stop-color="#757575"/><stop offset="0.6" stop-color="#6e6e6e"/><stop offset="1" stop-color="#4a4a4a"/></linearGradient><linearGradient id="gr85" x1="0" y1="0" x2="0" y2="1"><stop offset="0" stop-color="#6e6e6e"/><stop offset="0.6" stop-color="#666666"/><stop offset="1" stop-color="#5c5c5c"/></linearGradient><linearGradient id="gr86" x1="0" y1="0" x2="0" y2="1"><stop offset="0" stop-color="#4c4c4c"/><stop offset="0.6" stop-color="#454545"/><stop offset="1" stop-color="#404040"/></linearGradient><linearGradient id="gr87" x1="0" y1="0" x2="0" y2="1"><stop offset="0" stop-color="#6e6e6e"/><stop offset="0.6" stop-color="#666666"/><stop offset="1" stop-color="#4f4f4f"/></linearGradient><linearGradient id="gr88" x1="0" y1="0" x2="0" y2="1"><stop offset="0" stop-color="#787878"/><stop offset="0.6" stop-color="#707070"/><stop offset="1" stop-color="#4a4a4a"/></linearGradient><linearGradient id="gr89" x1="0" y1="0" x2="0" y2="1"><stop offset="0" stop-color="#707070"/><stop offset="0.6" stop-color="#696969"/><stop offset="1" stop-color="#545454"/></linearGradient><linearGradient id="gr90" x1="0" y1="0" x2="0" y2="1"><stop offset="0" stop-color="#737373"/><stop offset="0.6" stop-color="#6b6b6b"/><stop offset="1" stop-color="#595959"/></linearGradient><linearGradient id="gr91" x1="0" y1="0" x2="0" y2="1"><stop offset="0" stop-color="#696969"/><stop offset="0.6" stop-color="#616161"/><stop offset="1" stop-color="#575757"/></linearGradient><linearGradient id="gr92" x1="0" y1="0" x2="0" y2="1"><stop offset="0" stop-color="#666666"/><stop offset="0.6" stop-color="#5e5e5e"/><stop offset="1" stop-color="#4c4c4c"/></linearGradient><linearGradient id="gr93" x1="0" y1="0" x2="0" y2="1"><stop offset="0" stop-color="#707070"/><stop offset="0.6" stop-color="#696969"/><stop offset="1" stop-color="#5c5c5c"/></linearGradient><linearGradient id="gr94" x1="0" y1="0" x2="0" y2="1"><stop offset="0" stop-color="#757575"/><stop offset="0.6" stop-color="#6e6e6e"/><stop offset="1" stop-color="#525252"/></linearGradient><linearGradient id="gr95" x1="0" y1="0" x2="0" y2="1"><stop offset="0" stop-color="#757575"/><stop offset="0.6" stop-color="#6e6e6e"/><stop offset="1" stop-color="#545454"/></linearGradient><linearGradient id="gr96" x1="0" y1="0" x2="0" y2="1"><stop offset="0" stop-color="#666666"/><stop offset="0.6" stop-color="#5e5e5e"/><stop offset="1" stop-color="#4a4a4a"/></linearGradient><linearGradient id="gr97" x1="0" y1="0" x2="0" y2="1"><stop offset="0" stop-color="#696969"/><stop offset="0.6" stop-color="#616161"/><stop offset="1" stop-color="#545454"/></linearGradient><linearGradient id="gr98" x1="0" y1="0" x2="0" y2="1"><stop offset="0" stop-color="#737373"/><stop offset="0.6" stop-color="#6b6b6b"/><stop offset="1" stop-color="#575757"/></linearGradient><linearGradient id="gr99" x1="0" y1="0" x2="0" y2="1"><stop offset="0" stop-color="#787878"/><stop offset="0.6" stop-color="#707070"/><stop offset="1" stop-color="#595959"/></linearGradient><linearGradient id="gr100" x1="0" y1="0" x2="0" y2="1"><stop offset="0" stop-color="#737373"/><stop offset="0.6" stop-color="#6b6b6b"/><stop offset="1" stop-color="#545454"/></linearGradient><linearGradient id="gr101" x1="0" y1="0" x2="0" y2="1"><stop offset="0" stop-color="#6e6e6e"/><stop offset="0.6" stop-color="#666666"/><stop offset="1" stop-color="#525252"/></linearGradient><linearGradient id="gr102" x1="0" y1="0" x2="0" y2="1"><stop offset="0" stop-color="#787878"/><stop offset="0.6" stop-color="#707070"/><stop offset="1" stop-color="#4f4f4f"/></linearGradient><linearGradient id="gr103" x1="0" y1="0" x2="0" y2="1"><stop offset="0" stop-color="#6b6b6b"/><stop offset="0.6" stop-color="#636363"/><stop offset="1" stop-color="#575757"/></linearGradient><linearGradient id="gr104" x1="0" y1="0" x2="0" y2="1"><stop offset="0" stop-color="#757575"/><stop offset="0.6" stop-color="#6e6e6e"/><stop offset="1" stop-color="#4f4f4f"/></linearGradient><linearGradient id="gr105" x1="0" y1="0" x2="0" y2="1"><stop offset="0" stop-color="#6e6e6e"/><stop offset="0.6" stop-color="#666666"/><stop offset="1" stop-color="#545454"/></linearGradient><linearGradient id="gr106" x1="0" y1="0" x2="0" y2="1"><stop offset="0" stop-color="#6e6e6e"/><stop offset="0.6" stop-color="#666666"/><stop offset="1" stop-color="#575757"/></linearGradient><linearGradient id="gr107" x1="0" y1="0" x2="0" y2="1"><stop offset="0" stop-color="#757575"/><stop offset="0.6" stop-color="#6e6e6e"/><stop offset="1" stop-color="#4c4c4c"/></linearGradient><linearGradient id="gr108" x1="0" y1="0" x2="0" y2="1"><stop offset="0" stop-color="#737373"/><stop offset="0.6" stop-color="#6b6b6b"/><stop offset="1" stop-color="#4c4c4c"/></linearGradient><linearGradient id="gr109" x1="0" y1="0" x2="0" y2="1"><stop offset="0" stop-color="#737373"/><stop offset="0.6" stop-color="#6b6b6b"/><stop offset="1" stop-color="#4a4a4a"/></linearGradient><linearGradient id="gr110" x1="0" y1="0" x2="0" y2="1"><stop offset="0" stop-color="#707070"/><stop offset="0.6" stop-color="#696969"/><stop offset="1" stop-color="#4f4f4f"/></linearGradient><linearGradient id="gr111" x1="0" y1="0" x2="0" y2="1"><stop offset="0" stop-color="#6b6b6b"/><stop offset="0.6" stop-color="#636363"/><stop offset="1" stop-color="#474747"/></linearGradient><linearGradient id="gr112" x1="0" y1="0" x2="0" y2="1"><stop offset="0" stop-color="#171717"/><stop offset="0.5" stop-color="#222222"/><stop offset="1" stop-color="#2e2e2e"/></linearGradient><linearGradient id="gr113" x1="0" y1="0" x2="0" y2="1"><stop offset="0" stop-color="#6e6e6e"/><stop offset="0.7" stop-color="#696969"/><stop offset="1" stop-color="#5c5c5c"/></linearGradient><linearGradient id="gr114" x1="0" y1="0" x2="0" y2="1"><stop offset="0" stop-color="#666666"/><stop offset="0.3" stop-color="#666666"/><stop offset="1" stop-color="#454545"/></linearGradient><linearGradient id="gr115" x1="0" y1="0" x2="0" y2="1"><stop offset="0" stop-color="#6b6b6b"/><stop offset="0.7" stop-color="#666666"/><stop offset="1" stop-color="#5c5c5c"/></linearGradient><linearGradient id="gr116" x1="0" y1="0" x2="0" y2="1"><stop offset="0" stop-color="#808080"/><stop offset="0.5" stop-color="#787878"/><stop offset="1" stop-color="#616161"/></linearGradient><linearGradient id="cb201" x1="0" y1="1" x2="0" y2="0"><stop offset="0.0000" stop-color="#000000"/><stop offset="0.0500" stop-color="#00003c"/><stop offset="0.0975" stop-color="#000082"/><stop offset="0.1400" stop-color="#0000e6"/><stop offset="0.1850" stop-color="#003cff"/><stop offset="0.2400" stop-color="#00aaff"/><stop offset="0.3000" stop-color="#00ffe6"/><stop offset="0.3300" stop-color="#00ffc8"/><stop offset="0.3770" stop-color="#00ff80"/><stop offset="0.4390" stop-color="#00ff00"/><stop offset="0.5000" stop-color="#78ff00"/><stop offset="0.5290" stop-color="#b4ff00"/><stop offset="0.5700" stop-color="#ffff00"/><stop offset="0.6200" stop-color="#ff8c00"/><stop offset="0.6670" stop-color="#ff3c00"/><stop offset="0.7050" stop-color="#ff0000"/><stop offset="0.7280" stop-color="#ff1414"/><stop offset="0.7900" stop-color="#ff5050"/><stop offset="0.8500" stop-color="#ff8c8c"/><stop offset="0.9100" stop-color="#ffc8c8"/><stop offset="0.9830" stop-color="#fff0f0"/><stop offset="1.0000" stop-color="#ffffff"/></linearGradient><linearGradient id="cb367" x1="0" y1="1" x2="0" y2="0"><stop offset="0.0000" stop-color="#000000"/><stop offset="0.0500" stop-color="#00003c"/><stop offset="0.0975" stop-color="#000082"/><stop offset="0.1400" stop-color="#0000e6"/><stop offset="0.1850" stop-color="#003cff"/><stop offset="0.2400" stop-color="#00aaff"/><stop offset="0.3000" stop-color="#00ffe6"/><stop offset="0.3300" stop-color="#00ffc8"/><stop offset="0.3770" stop-color="#00ff80"/><stop offset="0.4390" stop-color="#00ff00"/><stop offset="0.5000" stop-color="#78ff00"/><stop offset="0.5290" stop-color="#b4ff00"/><stop offset="0.5700" stop-color="#ffff00"/><stop offset="0.6200" stop-color="#ff8c00"/><stop offset="0.6670" stop-color="#ff3c00"/><stop offset="0.7050" stop-color="#ff0000"/><stop offset="0.7280" stop-color="#ff1414"/><stop offset="0.7900" stop-color="#ff5050"/><stop offset="0.8500" stop-color="#ff8c8c"/><stop offset="0.9100" stop-color="#ffc8c8"/><stop offset="0.9830" stop-color="#fff0f0"/><stop offset="1.0000" stop-color="#ffffff"/></linearGradient></defs><rect width="792" height="612" fill="#fff"/><g filter="url(#fp2t)"><rect x="79.6" y="166.30" width="612.90" height="44.00" fill="#060606"/><rect x="79.6" y="210.30" width="612.90" height="8.00" fill="url(#gr0)"/><rect x="79.6" y="214.30" width="612.90" height="1.00" fill="#333333"/><rect x="79.6" y="218.30" width="612.90" height="22.00" fill="#1f1f1f"/><rect x="79.6" y="240.30" width="612.90" height="1.00" fill="#4c4c4c"/><rect x="79.6" y="241.30" width="612.90" height="4.00" fill="#212121"/><rect x="79.6" y="245.30" width="612.90" height="16.00" fill="#0f0f0f"/><rect x="79.6" y="261.30" width="612.90" height="18.70" fill="#242424"/><rect x="79.6" y="280.00" width="612.90" height="2.60" fill="#4c4c4c"/><rect x="79.6" y="282.60" width="612.90" height="3.20" fill="#262626"/><rect x="79.6" y="285.80" width="612.90" height="5.50" fill="#5c5c5c"/><rect x="79.6" y="291.30" width="612.90" height="14.70" fill="#3b3b3b"/><rect x="79.6" y="306.00" width="612.90" height="1.60" fill="#4c4c4c"/><rect x="79.6" y="307.60" width="612.90" height="4.30" fill="#6b6b6b"/><rect x="79.6" y="311.90" width="612.90" height="1.30" fill="#999999"/><rect x="79.6" y="313.20" width="612.90" height="3.30" fill="#616161"/><rect x="79.6" y="316.50" width="612.90" height="1.40" fill="#050505"/><rect x="79.6" y="317.90" width="612.90" height="1.10" fill="#8c8c8c"/><rect x="79.6" y="319.00" width="612.90" height="3.30" fill="#080808"/><polygon points="79.48,166.3 84.63,166.3 82.57,221.91 81.54,221.91" fill="url(#gr1)" style="mix-blend-mode:lighten"/><rect x="81.37" y="166.3" width="1.36" height="50.83" fill="url(#gr2)" style="mix-blend-mode:lighten"/><polygon points="85.08,166.3 88.71,166.3 87.76,196.29 86.03,196.29" fill="url(#gr3)" style="mix-blend-mode:lighten"/><polygon points="88.63,166.3 92.64,166.3 91.24,198.37 90.03,198.37" fill="url(#gr4)" style="mix-blend-mode:lighten"/><rect x="90.08" y="166.3" width="1.11" height="68.82" fill="url(#gr5)" style="mix-blend-mode:lighten"/><polygon points="92.70,166.3 95.07,166.3 94.75,201.14 93.01,201.14" fill="url(#gr6)" style="mix-blend-mode:lighten"/><polygon points="96.45,166.3 97.96,166.3 98.21,177.35 96.21,177.35" fill="url(#gr7)" style="mix-blend-mode:lighten"/><polygon points="98.79,166.3 103.12,166.3 101.66,197.09 100.25,197.09" fill="url(#gr8)" style="mix-blend-mode:lighten"/><rect x="100.40" y="166.3" width="1.11" height="80.55" fill="url(#gr9)" style="mix-blend-mode:lighten"/><polygon points="103.36,166.3 108.40,166.3 106.63,196.69 105.12,196.69" fill="url(#gr10)" style="mix-blend-mode:lighten"/><polygon points="110.35,166.3 112.52,166.3 112.01,213.91 110.86,213.91" fill="url(#gr1)" style="mix-blend-mode:lighten"/><rect x="110.85" y="166.3" width="1.18" height="68.17" fill="url(#gr11)" style="mix-blend-mode:lighten"/><polygon points="114.17,166.3 118.32,166.3 116.91,221.36 115.58,221.36" fill="url(#gr12)" style="mix-blend-mode:lighten"/><rect x="115.56" y="166.3" width="1.38" height="65.79" fill="url(#gr11)" style="mix-blend-mode:lighten"/><polygon points="120.12,166.3 121.95,166.3 121.91,180.66 120.17,180.66" fill="url(#gr13)" style="mix-blend-mode:lighten"/><rect x="120.37" y="166.3" width="1.32" height="53.16" fill="url(#gr14)" style="mix-blend-mode:lighten"/><polygon points="123.91,166.3 125.41,166.3 125.51,222.76 123.81,222.76" fill="url(#gr15)" style="mix-blend-mode:lighten"/><polygon points="126.38,166.3 129.40,166.3 128.52,222.88 127.26,222.88" fill="url(#gr15)" style="mix-blend-mode:lighten"/><polygon points="130.62,166.3 132.12,166.3 132.25,185.04 130.49,185.04" fill="url(#gr16)" style="mix-blend-mode:lighten"/><rect x="130.70" y="166.3" width="1.34" height="76.27" fill="url(#gr9)" style="mix-blend-mode:lighten"/><polygon points="133.81,166.3 135.31,166.3 135.18,183.04 133.94,183.04" fill="url(#gr17)" style="mix-blend-mode:lighten"/><rect x="134.02" y="166.3" width="1.08" height="73.74" fill="url(#gr11)" style="mix-blend-mode:lighten"/><polygon points="136.23,166.3 139.26,166.3 138.62,218.95 136.86,218.95" fill="url(#gr18)" style="mix-blend-mode:lighten"/><rect x="137.04" y="166.3" width="1.40" height="73.90" fill="url(#gr5)" style="mix-blend-mode:lighten"/><polygon points="139.81,166.3 143.26,166.3 142.16,196.04 140.91,196.04" fill="url(#gr10)" style="mix-blend-mode:lighten"/><rect x="141.03" y="166.3" width="1.00" height="61.91" fill="url(#gr11)" style="mix-blend-mode:lighten"/><polygon points="143.78,166.3 147.27,166.3 146.43,216.54 144.62,216.54" fill="url(#gr19)" style="mix-blend-mode:lighten"/><polygon points="148.22,166.3 151.76,166.3 150.52,215.52 149.46,215.52" fill="url(#gr20)" style="mix-blend-mode:lighten"/><rect x="149.50" y="166.3" width="0.98" height="67.30" fill="url(#gr21)" style="mix-blend-mode:lighten"/><polygon points="152.73,166.3 154.47,166.3 154.46,178.27 152.74,178.27" fill="url(#gr22)" style="mix-blend-mode:lighten"/><rect x="152.99" y="166.3" width="1.23" height="70.23" fill="url(#gr23)" style="mix-blend-mode:lighten"/><polygon points="155.69,166.3 161.51,166.3 159.55,207.12 157.66,207.12" fill="url(#gr8)" style="mix-blend-mode:lighten"/><polygon points="162.84,166.3 164.48,166.3 164.40,208.62 162.92,208.62" fill="url(#gr24)" style="mix-blend-mode:lighten"/><polygon points="166.21,166.3 168.64,166.3 168.23,196.67 166.61,196.67" fill="url(#gr25)" style="mix-blend-mode:lighten"/><rect x="166.77" y="166.3" width="1.31" height="72.16" fill="url(#gr26)" style="mix-blend-mode:lighten"/><polygon points="168.93,166.3 171.40,166.3 170.87,214.42 169.45,214.42" fill="url(#gr10)" style="mix-blend-mode:lighten"/><rect x="169.60" y="166.3" width="1.13" height="56.80" fill="url(#gr2)" style="mix-blend-mode:lighten"/><polygon points="172.17,166.3 174.84,166.3 174.19,216.05 172.83,216.05" fill="url(#gr16)" style="mix-blend-mode:lighten"/><rect x="172.84" y="166.3" width="1.35" height="80.29" fill="url(#gr27)" style="mix-blend-mode:lighten"/><polygon points="175.61,166.3 179.02,166.3 177.94,199.51 176.69,199.51" fill="url(#gr28)" style="mix-blend-mode:lighten"/><polygon points="180.65,166.3 182.15,166.3 181.94,212.88 180.86,212.88" fill="url(#gr29)" style="mix-blend-mode:lighten"/><rect x="180.79" y="166.3" width="1.21" height="49.61" fill="url(#gr5)" style="mix-blend-mode:lighten"/><polygon points="182.99,166.3 187.03,166.3 185.55,224.17 184.48,224.17" fill="url(#gr30)" style="mix-blend-mode:lighten"/><rect x="184.48" y="166.3" width="1.07" height="78.52" fill="url(#gr23)" style="mix-blend-mode:lighten"/><polygon points="187.56,166.3 190.69,166.3 190.12,217.14 188.13,217.14" fill="url(#gr31)" style="mix-blend-mode:lighten"/><rect x="188.47" y="166.3" width="1.30" height="61.60" fill="url(#gr23)" style="mix-blend-mode:lighten"/><polygon points="191.46,166.3 194.74,166.3 193.88,195.45 192.31,195.45" fill="url(#gr32)" style="mix-blend-mode:lighten"/><rect x="192.43" y="166.3" width="1.34" height="48.53" fill="url(#gr27)" style="mix-blend-mode:lighten"/><polygon points="196.13,166.3 197.63,166.3 197.74,178.55 196.02,178.55" fill="url(#gr33)" style="mix-blend-mode:lighten"/><rect x="196.26" y="166.3" width="1.23" height="48.68" fill="url(#gr23)" style="mix-blend-mode:lighten"/><polygon points="198.75,166.3 201.38,166.3 201.04,227.21 199.10,227.21" fill="url(#gr10)" style="mix-blend-mode:lighten"/><rect x="199.44" y="166.3" width="1.25" height="70.62" fill="url(#gr27)" style="mix-blend-mode:lighten"/><polygon points="201.83,166.3 204.69,166.3 203.94,206.04 202.58,206.04" fill="url(#gr34)" style="mix-blend-mode:lighten"/><rect x="202.58" y="166.3" width="1.35" height="56.17" fill="url(#gr9)" style="mix-blend-mode:lighten"/><polygon points="204.71,166.3 207.85,166.3 207.20,212.84 205.37,212.84" fill="url(#gr25)" style="mix-blend-mode:lighten"/><polygon points="208.11,166.3 210.97,166.3 210.37,229.02 208.72,229.02" fill="url(#gr35)" style="mix-blend-mode:lighten"/><rect x="208.96" y="166.3" width="1.17" height="70.54" fill="url(#gr21)" style="mix-blend-mode:lighten"/><polygon points="212.63,166.3 214.21,166.3 214.24,175.49 212.60,175.49" fill="url(#gr29)" style="mix-blend-mode:lighten"/><rect x="212.78" y="166.3" width="1.27" height="85.46" fill="url(#gr27)" style="mix-blend-mode:lighten"/><polygon points="216.46,166.3 217.96,166.3 217.88,179.82 216.54,179.82" fill="url(#gr17)" style="mix-blend-mode:lighten"/><rect x="216.63" y="166.3" width="1.16" height="79.41" fill="url(#gr14)" style="mix-blend-mode:lighten"/><polygon points="218.61,166.3 220.82,166.3 220.42,227.07 219.01,227.07" fill="url(#gr15)" style="mix-blend-mode:lighten"/><polygon points="221.48,166.3 224.00,166.3 223.56,228.70 221.92,228.70" fill="url(#gr32)" style="mix-blend-mode:lighten"/><polygon points="224.85,166.3 228.48,166.3 227.27,198.67 226.06,198.67" fill="url(#gr36)" style="mix-blend-mode:lighten"/><rect x="225.97" y="166.3" width="1.40" height="61.90" fill="url(#gr14)" style="mix-blend-mode:lighten"/><polygon points="229.13,166.3 232.94,166.3 231.77,194.67 230.31,194.67" fill="url(#gr37)" style="mix-blend-mode:lighten"/><rect x="230.39" y="166.3" width="1.29" height="53.07" fill="url(#gr2)" style="mix-blend-mode:lighten"/><polygon points="233.80,166.3 236.04,166.3 235.53,182.63 234.31,182.63" fill="url(#gr38)" style="mix-blend-mode:lighten"/><rect x="234.41" y="166.3" width="1.02" height="77.28" fill="url(#gr23)" style="mix-blend-mode:lighten"/><polygon points="237.07,166.3 241.66,166.3 240.32,226.02 238.41,226.02" fill="url(#gr31)" style="mix-blend-mode:lighten"/><rect x="238.79" y="166.3" width="1.14" height="56.72" fill="url(#gr9)" style="mix-blend-mode:lighten"/><polygon points="242.60,166.3 247.29,166.3 245.70,212.35 244.19,212.35" fill="url(#gr39)" style="mix-blend-mode:lighten"/><rect x="244.30" y="166.3" width="1.30" height="62.32" fill="url(#gr26)" style="mix-blend-mode:lighten"/><polygon points="249.08,166.3 251.30,166.3 250.77,215.33 249.61,215.33" fill="url(#gr38)" style="mix-blend-mode:lighten"/><rect x="249.54" y="166.3" width="1.30" height="77.10" fill="url(#gr5)" style="mix-blend-mode:lighten"/><polygon points="252.51,166.3 255.89,166.3 254.83,230.04 253.57,230.04" fill="url(#gr25)" style="mix-blend-mode:lighten"/><polygon points="257.67,166.3 259.17,166.3 259.33,186.15 257.51,186.15" fill="url(#gr40)" style="mix-blend-mode:lighten"/><polygon points="261.00,166.3 262.50,166.3 262.40,186.30 261.10,186.30" fill="url(#gr10)" style="mix-blend-mode:lighten"/><rect x="261.06" y="166.3" width="1.38" height="71.40" fill="url(#gr21)" style="mix-blend-mode:lighten"/><polygon points="264.05,166.3 265.55,166.3 265.57,177.22 264.03,177.22" fill="url(#gr25)" style="mix-blend-mode:lighten"/><polygon points="266.15,166.3 268.79,166.3 268.31,205.97 266.63,205.97" fill="url(#gr38)" style="mix-blend-mode:lighten"/><rect x="266.90" y="166.3" width="1.13" height="77.18" fill="url(#gr23)" style="mix-blend-mode:lighten"/><polygon points="268.89,166.3 272.54,166.3 271.40,192.77 270.02,192.77" fill="url(#gr41)" style="mix-blend-mode:lighten"/><polygon points="274.27,166.3 275.84,166.3 275.66,222.68 274.45,222.68" fill="url(#gr33)" style="mix-blend-mode:lighten"/><polygon points="277.60,166.3 279.10,166.3 278.95,177.89 277.75,177.89" fill="url(#gr33)" style="mix-blend-mode:lighten"/><rect x="277.80" y="166.3" width="1.10" height="75.00" fill="url(#gr5)" style="mix-blend-mode:lighten"/><polygon points="280.48,166.3 283.03,166.3 282.59,195.89 280.92,195.89" fill="url(#gr41)" style="mix-blend-mode:lighten"/><rect x="281.28" y="166.3" width="0.95" height="51.34" fill="url(#gr9)" style="mix-blend-mode:lighten"/><polygon points="283.30,166.3 286.86,166.3 285.62,207.76 284.55,207.76" fill="url(#gr20)" style="mix-blend-mode:lighten"/><rect x="284.59" y="166.3" width="0.98" height="50.58" fill="url(#gr23)" style="mix-blend-mode:lighten"/><polygon points="287.48,166.3 291.43,166.3 290.12,206.97 288.79,206.97" fill="url(#gr22)" style="mix-blend-mode:lighten"/><polygon points="291.77,166.3 295.62,166.3 294.50,217.39 292.89,217.39" fill="url(#gr40)" style="mix-blend-mode:lighten"/><polygon points="297.16,166.3 299.13,166.3 298.95,185.85 297.34,185.85" fill="url(#gr30)" style="mix-blend-mode:lighten"/><rect x="297.57" y="166.3" width="1.15" height="80.48" fill="url(#gr5)" style="mix-blend-mode:lighten"/><polygon points="301.13,166.3 304.70,166.3 303.77,211.91 302.06,211.91" fill="url(#gr7)" style="mix-blend-mode:lighten"/><rect x="302.29" y="166.3" width="1.26" height="89.41" fill="url(#gr27)" style="mix-blend-mode:lighten"/><polygon points="305.44,166.3 308.96,166.3 308.16,204.81 306.23,204.81" fill="url(#gr31)" style="mix-blend-mode:lighten"/><rect x="306.60" y="166.3" width="1.19" height="76.37" fill="url(#gr23)" style="mix-blend-mode:lighten"/><polygon points="309.03,166.3 313.90,166.3 312.25,212.95 310.69,212.95" fill="url(#gr36)" style="mix-blend-mode:lighten"/><polygon points="315.00,166.3 317.87,166.3 317.35,196.96 315.52,196.96" fill="url(#gr42)" style="mix-blend-mode:lighten"/><polygon points="318.38,166.3 322.29,166.3 321.33,199.14 319.34,199.14" fill="url(#gr17)" style="mix-blend-mode:lighten"/><rect x="319.87" y="166.3" width="0.94" height="46.44" fill="url(#gr21)" style="mix-blend-mode:lighten"/><polygon points="322.48,166.3 327.38,166.3 325.66,199.88 324.19,199.88" fill="url(#gr38)" style="mix-blend-mode:lighten"/><rect x="324.28" y="166.3" width="1.30" height="45.74" fill="url(#gr2)" style="mix-blend-mode:lighten"/><polygon points="327.89,166.3 331.56,166.3 330.56,193.74 328.89,193.74" fill="url(#gr43)" style="mix-blend-mode:lighten"/><rect x="329.19" y="166.3" width="1.07" height="73.88" fill="url(#gr2)" style="mix-blend-mode:lighten"/><polygon points="332.35,166.3 333.85,166.3 333.84,184.82 332.36,184.82" fill="url(#gr28)" style="mix-blend-mode:lighten"/><rect x="332.48" y="166.3" width="1.24" height="79.11" fill="url(#gr2)" style="mix-blend-mode:lighten"/><polygon points="336.13,166.3 337.75,166.3 337.65,181.65 336.22,181.65" fill="url(#gr44)" style="mix-blend-mode:lighten"/><rect x="336.26" y="166.3" width="1.35" height="68.67" fill="url(#gr2)" style="mix-blend-mode:lighten"/><polygon points="338.56,166.3 343.42,166.3 341.86,215.01 340.11,215.01" fill="url(#gr16)" style="mix-blend-mode:lighten"/><polygon points="343.54,166.3 348.48,166.3 346.63,212.30 345.39,212.30" fill="url(#gr34)" style="mix-blend-mode:lighten"/><rect x="345.54" y="166.3" width="0.93" height="76.27" fill="url(#gr5)" style="mix-blend-mode:lighten"/><polygon points="348.20,166.3 352.43,166.3 351.25,217.60 349.38,217.60" fill="url(#gr45)" style="mix-blend-mode:lighten"/><polygon points="353.34,166.3 355.38,166.3 354.91,186.95 353.81,186.95" fill="url(#gr7)" style="mix-blend-mode:lighten"/><polygon points="358.41,166.3 360.43,166.3 360.37,175.18 358.47,175.18" fill="url(#gr44)" style="mix-blend-mode:lighten"/><rect x="358.90" y="166.3" width="1.05" height="59.61" fill="url(#gr23)" style="mix-blend-mode:lighten"/><polygon points="363.63,166.3 365.92,166.3 365.77,227.79 363.79,227.79" fill="url(#gr25)" style="mix-blend-mode:lighten"/><rect x="364.25" y="166.3" width="1.05" height="67.43" fill="url(#gr9)" style="mix-blend-mode:lighten"/><polygon points="367.51,166.3 371.75,166.3 370.57,198.83 368.69,198.83" fill="url(#gr24)" style="mix-blend-mode:lighten"/><rect x="369.09" y="166.3" width="1.08" height="66.26" fill="url(#gr9)" style="mix-blend-mode:lighten"/><polygon points="373.67,166.3 375.50,166.3 375.14,175.00 374.03,175.00" fill="url(#gr33)" style="mix-blend-mode:lighten"/><polygon points="377.00,166.3 379.75,166.3 378.99,195.30 377.76,195.30" fill="url(#gr16)" style="mix-blend-mode:lighten"/><rect x="377.69" y="166.3" width="1.37" height="65.03" fill="url(#gr14)" style="mix-blend-mode:lighten"/><polygon points="380.11,166.3 384.24,166.3 382.86,222.34 381.49,222.34" fill="url(#gr37)" style="mix-blend-mode:lighten"/><polygon points="384.33,166.3 389.17,166.3 387.39,217.65 386.11,217.65" fill="url(#gr41)" style="mix-blend-mode:lighten"/><polygon points="389.66,166.3 393.80,166.3 392.63,201.83 390.83,201.83" fill="url(#gr38)" style="mix-blend-mode:lighten"/><rect x="391.13" y="166.3" width="1.20" height="57.80" fill="url(#gr11)" style="mix-blend-mode:lighten"/><polygon points="394.28,166.3 398.62,166.3 397.18,193.58 395.72,193.58" fill="url(#gr44)" style="mix-blend-mode:lighten"/><rect x="395.78" y="166.3" width="1.35" height="89.45" fill="url(#gr27)" style="mix-blend-mode:lighten"/><polygon points="399.08,166.3 402.27,166.3 401.36,216.81 400.00,216.81" fill="url(#gr37)" style="mix-blend-mode:lighten"/><polygon points="403.66,166.3 405.40,166.3 405.29,183.88 403.77,183.88" fill="url(#gr24)" style="mix-blend-mode:lighten"/><polygon points="408.49,166.3 410.90,166.3 410.42,177.59 408.97,177.59" fill="url(#gr6)" style="mix-blend-mode:lighten"/><polygon points="412.62,166.3 418.02,166.3 416.18,214.98 414.47,214.98" fill="url(#gr45)" style="mix-blend-mode:lighten"/><rect x="414.75" y="166.3" width="1.15" height="46.59" fill="url(#gr2)" style="mix-blend-mode:lighten"/><polygon points="419.23,166.3 421.59,166.3 421.31,177.98 419.51,177.98" fill="url(#gr46)" style="mix-blend-mode:lighten"/><rect x="419.85" y="166.3" width="1.12" height="64.88" fill="url(#gr21)" style="mix-blend-mode:lighten"/><polygon points="424.22,166.3 426.11,166.3 425.74,177.63 424.59,177.63" fill="url(#gr22)" style="mix-blend-mode:lighten"/><polygon points="427.43,166.3 431.39,166.3 430.04,198.82 428.79,198.82" fill="url(#gr29)" style="mix-blend-mode:lighten"/><rect x="428.94" y="166.3" width="0.94" height="81.93" fill="url(#gr2)" style="mix-blend-mode:lighten"/><polygon points="433.08,166.3 434.68,166.3 434.62,193.90 433.13,193.90" fill="url(#gr47)" style="mix-blend-mode:lighten"/><rect x="433.37" y="166.3" width="1.01" height="88.67" fill="url(#gr5)" style="mix-blend-mode:lighten"/><polygon points="435.90,166.3 441.33,166.3 439.26,207.23 437.97,207.23" fill="url(#gr48)" style="mix-blend-mode:lighten"/><rect x="437.94" y="166.3" width="1.35" height="51.37" fill="url(#gr23)" style="mix-blend-mode:lighten"/><polygon points="441.17,166.3 445.22,166.3 443.82,201.04 442.57,201.04" fill="url(#gr25)" style="mix-blend-mode:lighten"/><polygon points="445.93,166.3 448.25,166.3 447.91,207.62 446.26,207.62" fill="url(#gr40)" style="mix-blend-mode:lighten"/><rect x="446.49" y="166.3" width="1.21" height="46.79" fill="url(#gr26)" style="mix-blend-mode:lighten"/><polygon points="449.11,166.3 451.45,166.3 450.98,209.88 449.59,209.88" fill="url(#gr44)" style="mix-blend-mode:lighten"/><polygon points="452.33,166.3 456.02,166.3 454.91,200.45 453.44,200.45" fill="url(#gr31)" style="mix-blend-mode:lighten"/><rect x="453.69" y="166.3" width="0.98" height="54.16" fill="url(#gr21)" style="mix-blend-mode:lighten"/><polygon points="456.51,166.3 460.18,166.3 458.98,206.09 457.71,206.09" fill="url(#gr49)" style="mix-blend-mode:lighten"/><rect x="457.87" y="166.3" width="0.94" height="76.11" fill="url(#gr5)" style="mix-blend-mode:lighten"/><polygon points="460.42,166.3 464.89,166.3 463.34,202.51 461.98,202.51" fill="url(#gr43)" style="mix-blend-mode:lighten"/><polygon points="464.97,166.3 467.69,166.3 466.99,193.08 465.67,193.08" fill="url(#gr22)" style="mix-blend-mode:lighten"/><polygon points="468.57,166.3 471.79,166.3 470.76,193.85 469.61,193.85" fill="url(#gr8)" style="mix-blend-mode:lighten"/><rect x="469.63" y="166.3" width="1.10" height="55.72" fill="url(#gr11)" style="mix-blend-mode:lighten"/><polygon points="471.77,166.3 475.47,166.3 474.19,217.61 473.05,217.61" fill="url(#gr38)" style="mix-blend-mode:lighten"/><rect x="473.10" y="166.3" width="1.03" height="77.65" fill="url(#gr14)" style="mix-blend-mode:lighten"/><polygon points="476.82,166.3 478.33,166.3 478.18,179.13 476.96,179.13" fill="url(#gr50)" style="mix-blend-mode:lighten"/><rect x="477.07" y="166.3" width="1.01" height="58.14" fill="url(#gr9)" style="mix-blend-mode:lighten"/><polygon points="480.53,166.3 482.10,166.3 481.96,187.96 480.67,187.96" fill="url(#gr51)" style="mix-blend-mode:lighten"/><polygon points="483.16,166.3 486.06,166.3 485.22,225.30 483.99,225.30" fill="url(#gr41)" style="mix-blend-mode:lighten"/><polygon points="487.58,166.3 489.42,166.3 489.20,198.33 487.80,198.33" fill="url(#gr25)" style="mix-blend-mode:lighten"/><rect x="487.93" y="166.3" width="1.15" height="57.59" fill="url(#gr5)" style="mix-blend-mode:lighten"/><polygon points="491.90,166.3 493.55,166.3 493.50,218.95 491.95,218.95" fill="url(#gr8)" style="mix-blend-mode:lighten"/><rect x="492.24" y="166.3" width="0.98" height="71.22" fill="url(#gr5)" style="mix-blend-mode:lighten"/><polygon points="495.09,166.3 496.59,166.3 496.50,210.12 495.18,210.12" fill="url(#gr22)" style="mix-blend-mode:lighten"/><rect x="495.27" y="166.3" width="1.15" height="71.36" fill="url(#gr11)" style="mix-blend-mode:lighten"/><polygon points="497.20,166.3 500.08,166.3 499.62,215.68 497.67,215.68" fill="url(#gr31)" style="mix-blend-mode:lighten"/><rect x="498.15" y="166.3" width="0.99" height="66.12" fill="url(#gr2)" style="mix-blend-mode:lighten"/><polygon points="501.13,166.3 504.62,166.3 503.59,207.92 502.17,207.92" fill="url(#gr42)" style="mix-blend-mode:lighten"/><polygon points="506.74,166.3 508.76,166.3 508.32,174.83 507.18,174.83" fill="url(#gr36)" style="mix-blend-mode:lighten"/><polygon points="510.06,166.3 514.41,166.3 513.00,192.34 511.46,192.34" fill="url(#gr13)" style="mix-blend-mode:lighten"/><rect x="511.61" y="166.3" width="1.24" height="55.55" fill="url(#gr23)" style="mix-blend-mode:lighten"/><polygon points="515.13,166.3 519.84,166.3 518.40,213.61 516.57,213.61" fill="url(#gr52)" style="mix-blend-mode:lighten"/><polygon points="520.14,166.3 524.42,166.3 523.12,218.72 521.44,218.72" fill="url(#gr28)" style="mix-blend-mode:lighten"/><polygon points="524.76,166.3 529.45,166.3 527.75,206.34 526.46,206.34" fill="url(#gr53)" style="mix-blend-mode:lighten"/><polygon points="529.63,166.3 533.85,166.3 532.29,194.91 531.19,194.91" fill="url(#gr41)" style="mix-blend-mode:lighten"/><rect x="531.26" y="166.3" width="0.96" height="47.85" fill="url(#gr21)" style="mix-blend-mode:lighten"/><polygon points="534.26,166.3 535.76,166.3 535.64,175.05 534.38,175.05" fill="url(#gr45)" style="mix-blend-mode:lighten"/><rect x="534.34" y="166.3" width="1.33" height="84.14" fill="url(#gr27)" style="mix-blend-mode:lighten"/><polygon points="537.41,166.3 538.91,166.3 539.08,184.93 537.24,184.93" fill="url(#gr10)" style="mix-blend-mode:lighten"/><rect x="537.63" y="166.3" width="1.06" height="60.02" fill="url(#gr14)" style="mix-blend-mode:lighten"/><polygon points="540.16,166.3 543.41,166.3 542.35,222.75 541.22,222.75" fill="url(#gr16)" style="mix-blend-mode:lighten"/><polygon points="544.83,166.3 546.74,166.3 546.77,228.06 544.80,228.06" fill="url(#gr29)" style="mix-blend-mode:lighten"/><polygon points="547.86,166.3 552.17,166.3 550.54,229.87 549.49,229.87" fill="url(#gr41)" style="mix-blend-mode:lighten"/><polygon points="552.18,166.3 556.78,166.3 555.14,196.87 553.81,196.87" fill="url(#gr54)" style="mix-blend-mode:lighten"/><polygon points="558.10,166.3 560.12,166.3 559.92,179.78 558.30,179.78" fill="url(#gr47)" style="mix-blend-mode:lighten"/><rect x="558.45" y="166.3" width="1.32" height="57.77" fill="url(#gr14)" style="mix-blend-mode:lighten"/><polygon points="561.44,166.3 565.80,166.3 564.21,197.88 563.03,197.88" fill="url(#gr43)" style="mix-blend-mode:lighten"/><polygon points="566.05,166.3 569.75,166.3 568.53,216.06 567.26,216.06" fill="url(#gr3)" style="mix-blend-mode:lighten"/><rect x="567.31" y="166.3" width="1.18" height="51.46" fill="url(#gr11)" style="mix-blend-mode:lighten"/><polygon points="570.88,166.3 572.44,166.3 572.40,199.23 570.92,199.23" fill="url(#gr24)" style="mix-blend-mode:lighten"/><rect x="571.13" y="166.3" width="1.05" height="48.53" fill="url(#gr9)" style="mix-blend-mode:lighten"/><polygon points="573.82,166.3 577.61,166.3 576.24,207.35 575.18,207.35" fill="url(#gr32)" style="mix-blend-mode:lighten"/><polygon points="579.42,166.3 581.73,166.3 581.57,186.40 579.57,186.40" fill="url(#gr45)" style="mix-blend-mode:lighten"/><polygon points="584.53,166.3 586.33,166.3 586.31,179.32 584.55,179.32" fill="url(#gr31)" style="mix-blend-mode:lighten"/><rect x="584.95" y="166.3" width="0.96" height="48.36" fill="url(#gr27)" style="mix-blend-mode:lighten"/><polygon points="586.99,166.3 591.50,166.3 589.94,220.25 588.55,220.25" fill="url(#gr6)" style="mix-blend-mode:lighten"/><rect x="588.59" y="166.3" width="1.31" height="80.65" fill="url(#gr21)" style="mix-blend-mode:lighten"/><polygon points="591.78,166.3 596.28,166.3 594.88,207.59 593.17,207.59" fill="url(#gr42)" style="mix-blend-mode:lighten"/><polygon points="596.58,166.3 601.53,166.3 599.88,206.16 598.24,206.16" fill="url(#gr34)" style="mix-blend-mode:lighten"/><rect x="598.44" y="166.3" width="1.23" height="81.48" fill="url(#gr5)" style="mix-blend-mode:lighten"/><polygon points="603.27,166.3 604.93,166.3 604.94,213.06 603.26,213.06" fill="url(#gr1)" style="mix-blend-mode:lighten"/><rect x="603.60" y="166.3" width="1.01" height="78.44" fill="url(#gr14)" style="mix-blend-mode:lighten"/><polygon points="606.78,166.3 608.47,166.3 608.40,178.80 606.86,178.80" fill="url(#gr24)" style="mix-blend-mode:lighten"/><rect x="607.05" y="166.3" width="1.15" height="63.15" fill="url(#gr11)" style="mix-blend-mode:lighten"/><polygon points="610.01,166.3 613.06,166.3 612.24,200.65 610.83,200.65" fill="url(#gr41)" style="mix-blend-mode:lighten"/><rect x="610.98" y="166.3" width="1.12" height="88.32" fill="url(#gr26)" style="mix-blend-mode:lighten"/><polygon points="612.99,166.3 616.80,166.3 615.71,197.93 614.08,197.93" fill="url(#gr16)" style="mix-blend-mode:lighten"/><rect x="614.36" y="166.3" width="1.08" height="89.53" fill="url(#gr27)" style="mix-blend-mode:lighten"/><polygon points="617.01,166.3 621.05,166.3 619.78,216.19 618.28,216.19" fill="url(#gr25)" style="mix-blend-mode:lighten"/><polygon points="621.76,166.3 624.33,166.3 623.74,208.24 622.35,208.24" fill="url(#gr29)" style="mix-blend-mode:lighten"/><polygon points="625.86,166.3 627.49,166.3 627.47,209.28 625.88,209.28" fill="url(#gr51)" style="mix-blend-mode:lighten"/><polygon points="628.48,166.3 633.40,166.3 631.81,204.19 630.07,204.19" fill="url(#gr52)" style="mix-blend-mode:lighten"/><polygon points="634.00,166.3 637.55,166.3 636.69,227.93 634.86,227.93" fill="url(#gr10)" style="mix-blend-mode:lighten"/><rect x="635.12" y="166.3" width="1.32" height="74.22" fill="url(#gr23)" style="mix-blend-mode:lighten"/><polygon points="639.06,166.3 640.87,166.3 640.59,184.26 639.34,184.26" fill="url(#gr10)" style="mix-blend-mode:lighten"/><polygon points="641.91,166.3 645.91,166.3 644.66,222.21 643.16,222.21" fill="url(#gr30)" style="mix-blend-mode:lighten"/><rect x="643.44" y="166.3" width="0.94" height="69.97" fill="url(#gr2)" style="mix-blend-mode:lighten"/><polygon points="646.86,166.3 650.09,166.3 649.05,222.58 647.90,222.58" fill="url(#gr13)" style="mix-blend-mode:lighten"/><polygon points="650.22,166.3 654.80,166.3 653.10,196.76 651.92,196.76" fill="url(#gr42)" style="mix-blend-mode:lighten"/><polygon points="655.71,166.3 657.21,166.3 657.33,186.57 655.60,186.57" fill="url(#gr29)" style="mix-blend-mode:lighten"/><rect x="655.96" y="166.3" width="1.00" height="73.31" fill="url(#gr26)" style="mix-blend-mode:lighten"/><polygon points="659.42,166.3 660.99,166.3 661.05,182.74 659.36,182.74" fill="url(#gr1)" style="mix-blend-mode:lighten"/><rect x="659.60" y="166.3" width="1.21" height="57.53" fill="url(#gr5)" style="mix-blend-mode:lighten"/><polygon points="661.99,166.3 665.46,166.3 664.72,199.75 662.72,199.75" fill="url(#gr4)" style="mix-blend-mode:lighten"/><rect x="663.12" y="166.3" width="1.21" height="61.09" fill="url(#gr26)" style="mix-blend-mode:lighten"/><polygon points="665.60,166.3 670.26,166.3 668.66,207.84 667.20,207.84" fill="url(#gr55)" style="mix-blend-mode:lighten"/><rect x="667.38" y="166.3" width="1.11" height="81.91" fill="url(#gr2)" style="mix-blend-mode:lighten"/><polygon points="671.70,166.3 674.05,166.3 673.80,178.31 671.95,178.31" fill="url(#gr53)" style="mix-blend-mode:lighten"/><rect x="672.35" y="166.3" width="1.04" height="84.27" fill="url(#gr2)" style="mix-blend-mode:lighten"/><polygon points="676.37,166.3 680.12,166.3 678.78,209.34 677.71,209.34" fill="url(#gr36)" style="mix-blend-mode:lighten"/><polygon points="680.27,166.3 683.15,166.3 682.33,217.84 681.09,217.84" fill="url(#gr13)" style="mix-blend-mode:lighten"/><polygon points="684.89,166.3 686.39,166.3 686.41,182.57 684.87,182.57" fill="url(#gr30)" style="mix-blend-mode:lighten"/><rect x="684.98" y="166.3" width="1.31" height="83.26" fill="url(#gr5)" style="mix-blend-mode:lighten"/><polygon points="686.77,166.3 690.17,166.3 689.14,217.73 687.80,217.73" fill="url(#gr47)" style="mix-blend-mode:lighten"/><polygon points="689.92,166.3 695.81,166.3 693.85,215.31 691.88,215.31" fill="url(#gr56)" style="mix-blend-mode:lighten"/><rect x="692.34" y="166.3" width="1.06" height="75.19" fill="url(#gr21)" style="mix-blend-mode:lighten"/><polygon points="81.60,166.3 84.40,166.3 83.65,219.56 82.35,219.56" fill="url(#gr57)" style="mix-blend-mode:lighten"/><rect x="82.45" y="166.3" width="1.10" height="156.00" fill="url(#gr58)" style="mix-blend-mode:lighten"/><polygon points="91.23,166.3 93.37,166.3 92.95,213.70 91.65,213.70" fill="url(#gr59)" style="mix-blend-mode:lighten"/><rect x="91.87" y="166.3" width="0.87" height="156.00" fill="url(#gr58)" style="mix-blend-mode:lighten"/><polygon points="103.51,166.3 107.49,166.3 106.15,209.65 104.85,209.65" fill="url(#gr59)" style="mix-blend-mode:lighten"/><rect x="105.04" y="166.3" width="0.92" height="156.00" fill="url(#gr9)" style="mix-blend-mode:lighten"/><polygon points="111.76,166.3 115.24,166.3 114.15,207.64 112.85,207.64" fill="url(#gr60)" style="mix-blend-mode:lighten"/><rect x="113.01" y="166.3" width="0.99" height="156.00" fill="url(#gr58)" style="mix-blend-mode:lighten"/><polygon points="134.26,166.3 137.74,166.3 136.65,210.35 135.35,210.35" fill="url(#gr61)" style="mix-blend-mode:lighten"/><rect x="135.48" y="166.3" width="1.03" height="156.00" fill="url(#gr58)" style="mix-blend-mode:lighten"/><polygon points="141.58,166.3 143.82,166.3 143.35,213.80 142.05,213.80" fill="url(#gr62)" style="mix-blend-mode:lighten"/><rect x="142.16" y="166.3" width="1.08" height="156.00" fill="url(#gr63)" style="mix-blend-mode:lighten"/><polygon points="155.30,166.3 159.10,166.3 157.85,206.69 156.55,206.69" fill="url(#gr59)" style="mix-blend-mode:lighten"/><rect x="156.72" y="166.3" width="0.96" height="156.00" fill="url(#gr64)" style="mix-blend-mode:lighten"/><polygon points="162.79,166.3 165.01,166.3 164.55,218.93 163.25,218.93" fill="url(#gr59)" style="mix-blend-mode:lighten"/><rect x="163.48" y="166.3" width="0.84" height="156.00" fill="url(#gr64)" style="mix-blend-mode:lighten"/><polygon points="182.23,166.3 185.37,166.3 184.45,208.38 183.15,208.38" fill="url(#gr60)" style="mix-blend-mode:lighten"/><rect x="183.36" y="166.3" width="0.89" height="156.00" fill="url(#gr64)" style="mix-blend-mode:lighten"/><polygon points="197.92,166.3 201.48,166.3 200.35,210.25 199.05,210.25" fill="url(#gr59)" style="mix-blend-mode:lighten"/><rect x="199.27" y="166.3" width="0.87" height="156.00" fill="url(#gr14)" style="mix-blend-mode:lighten"/><polygon points="218.15,166.3 221.05,166.3 220.25,215.23 218.95,215.23" fill="url(#gr65)" style="mix-blend-mode:lighten"/><rect x="219.18" y="166.3" width="0.83" height="156.00" fill="url(#gr63)" style="mix-blend-mode:lighten"/><polygon points="225.65,166.3 229.35,166.3 228.15,208.78 226.85,208.78" fill="url(#gr66)" style="mix-blend-mode:lighten"/><rect x="227.04" y="166.3" width="0.92" height="156.00" fill="url(#gr64)" style="mix-blend-mode:lighten"/><polygon points="241.89,166.3 245.11,166.3 244.15,220.12 242.85,220.12" fill="url(#gr66)" style="mix-blend-mode:lighten"/><rect x="243.10" y="166.3" width="0.80" height="156.00" fill="url(#gr67)" style="mix-blend-mode:lighten"/><polygon points="252.85,166.3 255.15,166.3 254.65,219.39 253.35,219.39" fill="url(#gr57)" style="mix-blend-mode:lighten"/><rect x="253.58" y="166.3" width="0.85" height="156.00" fill="url(#gr58)" style="mix-blend-mode:lighten"/><polygon points="260.47,166.3 263.53,166.3 262.65,206.76 261.35,206.76" fill="url(#gr60)" style="mix-blend-mode:lighten"/><rect x="261.46" y="166.3" width="1.09" height="156.00" fill="url(#gr26)" style="mix-blend-mode:lighten"/><polygon points="269.66,166.3 272.94,166.3 271.95,219.86 270.65,219.86" fill="url(#gr62)" style="mix-blend-mode:lighten"/><rect x="270.89" y="166.3" width="0.82" height="156.00" fill="url(#gr67)" style="mix-blend-mode:lighten"/><polygon points="278.04,166.3 280.56,166.3 279.95,208.09 278.65,208.09" fill="url(#gr66)" style="mix-blend-mode:lighten"/><rect x="278.83" y="166.3" width="0.95" height="156.00" fill="url(#gr26)" style="mix-blend-mode:lighten"/><polygon points="284.65,166.3 287.95,166.3 286.95,220.49 285.65,220.49" fill="url(#gr66)" style="mix-blend-mode:lighten"/><rect x="285.82" y="166.3" width="0.95" height="156.00" fill="url(#gr64)" style="mix-blend-mode:lighten"/><polygon points="300.30,166.3 304.10,166.3 302.85,212.61 301.55,212.61" fill="url(#gr59)" style="mix-blend-mode:lighten"/><rect x="301.76" y="166.3" width="0.88" height="156.00" fill="url(#gr58)" style="mix-blend-mode:lighten"/><polygon points="324.63,166.3 327.37,166.3 326.65,213.17 325.35,213.17" fill="url(#gr65)" style="mix-blend-mode:lighten"/><rect x="325.54" y="166.3" width="0.93" height="156.00" fill="url(#gr67)" style="mix-blend-mode:lighten"/><polygon points="329.95,166.3 332.85,166.3 332.05,207.09 330.75,207.09" fill="url(#gr61)" style="mix-blend-mode:lighten"/><rect x="330.92" y="166.3" width="0.96" height="156.00" fill="url(#gr14)" style="mix-blend-mode:lighten"/><polygon points="370.95,166.3 374.05,166.3 373.15,212.70 371.85,212.70" fill="url(#gr60)" style="mix-blend-mode:lighten"/><rect x="372.04" y="166.3" width="0.91" height="156.00" fill="url(#gr9)" style="mix-blend-mode:lighten"/><polygon points="385.69,166.3 388.31,166.3 387.65,214.04 386.35,214.04" fill="url(#gr60)" style="mix-blend-mode:lighten"/><rect x="386.53" y="166.3" width="0.95" height="156.00" fill="url(#gr58)" style="mix-blend-mode:lighten"/><polygon points="396.69,166.3 398.71,166.3 398.35,212.81 397.05,212.81" fill="url(#gr66)" style="mix-blend-mode:lighten"/><rect x="397.21" y="166.3" width="0.98" height="156.00" fill="url(#gr14)" style="mix-blend-mode:lighten"/><polygon points="413.04,166.3 416.96,166.3 415.65,212.15 414.35,212.15" fill="url(#gr57)" style="mix-blend-mode:lighten"/><rect x="414.55" y="166.3" width="0.89" height="156.00" fill="url(#gr67)" style="mix-blend-mode:lighten"/><polygon points="427.99,166.3 431.21,166.3 430.25,215.73 428.95,215.73" fill="url(#gr59)" style="mix-blend-mode:lighten"/><rect x="429.12" y="166.3" width="0.95" height="156.00" fill="url(#gr67)" style="mix-blend-mode:lighten"/><polygon points="439.75,166.3 443.25,166.3 442.15,207.15 440.85,207.15" fill="url(#gr60)" style="mix-blend-mode:lighten"/><rect x="441.06" y="166.3" width="0.88" height="156.00" fill="url(#gr26)" style="mix-blend-mode:lighten"/><polygon points="455.60,166.3 459.20,166.3 458.05,213.11 456.75,213.11" fill="url(#gr61)" style="mix-blend-mode:lighten"/><rect x="456.96" y="166.3" width="0.89" height="156.00" fill="url(#gr67)" style="mix-blend-mode:lighten"/><polygon points="466.32,166.3 469.68,166.3 468.65,207.67 467.35,207.67" fill="url(#gr66)" style="mix-blend-mode:lighten"/><rect x="467.55" y="166.3" width="0.90" height="156.00" fill="url(#gr63)" style="mix-blend-mode:lighten"/><polygon points="479.98,166.3 482.62,166.3 481.95,219.41 480.65,219.41" fill="url(#gr61)" style="mix-blend-mode:lighten"/><rect x="480.89" y="166.3" width="0.82" height="156.00" fill="url(#gr64)" style="mix-blend-mode:lighten"/><polygon points="493.54,166.3 497.06,166.3 495.95,207.07 494.65,207.07" fill="url(#gr57)" style="mix-blend-mode:lighten"/><rect x="494.76" y="166.3" width="1.08" height="156.00" fill="url(#gr64)" style="mix-blend-mode:lighten"/><polygon points="508.26,166.3 511.54,166.3 510.55,206.66 509.25,206.66" fill="url(#gr66)" style="mix-blend-mode:lighten"/><rect x="509.41" y="166.3" width="0.97" height="156.00" fill="url(#gr58)" style="mix-blend-mode:lighten"/><polygon points="531.39,166.3 533.41,166.3 533.05,218.09 531.75,218.09" fill="url(#gr65)" style="mix-blend-mode:lighten"/><rect x="531.85" y="166.3" width="1.10" height="156.00" fill="url(#gr58)" style="mix-blend-mode:lighten"/><polygon points="542.48,166.3 546.32,166.3 545.05,207.50 543.75,207.50" fill="url(#gr61)" style="mix-blend-mode:lighten"/><rect x="543.89" y="166.3" width="1.03" height="156.00" fill="url(#gr67)" style="mix-blend-mode:lighten"/><polygon points="550.92,166.3 553.68,166.3 552.95,213.46 551.65,213.46" fill="url(#gr65)" style="mix-blend-mode:lighten"/><rect x="551.85" y="166.3" width="0.90" height="156.00" fill="url(#gr9)" style="mix-blend-mode:lighten"/><polygon points="561.27,166.3 564.73,166.3 563.65,207.44 562.35,207.44" fill="url(#gr60)" style="mix-blend-mode:lighten"/><rect x="562.50" y="166.3" width="1.00" height="156.00" fill="url(#gr63)" style="mix-blend-mode:lighten"/><polygon points="570.65,166.3 573.75,166.3 572.85,208.11 571.55,208.11" fill="url(#gr60)" style="mix-blend-mode:lighten"/><rect x="571.66" y="166.3" width="1.09" height="156.00" fill="url(#gr26)" style="mix-blend-mode:lighten"/><polygon points="589.24,166.3 592.36,166.3 591.45,221.06 590.15,221.06" fill="url(#gr60)" style="mix-blend-mode:lighten"/><rect x="590.32" y="166.3" width="0.96" height="156.00" fill="url(#gr67)" style="mix-blend-mode:lighten"/><polygon points="611.46,166.3 615.14,166.3 613.95,208.27 612.65,208.27" fill="url(#gr61)" style="mix-blend-mode:lighten"/><rect x="612.90" y="166.3" width="0.81" height="156.00" fill="url(#gr67)" style="mix-blend-mode:lighten"/><polygon points="626.47,166.3 629.33,166.3 628.55,212.34 627.25,212.34" fill="url(#gr57)" style="mix-blend-mode:lighten"/><rect x="627.43" y="166.3" width="0.95" height="156.00" fill="url(#gr63)" style="mix-blend-mode:lighten"/><polygon points="635.51,166.3 638.89,166.3 637.85,212.51 636.55,212.51" fill="url(#gr61)" style="mix-blend-mode:lighten"/><rect x="636.69" y="166.3" width="1.02" height="156.00" fill="url(#gr9)" style="mix-blend-mode:lighten"/><polygon points="648.03,166.3 650.37,166.3 649.85,215.67 648.55,215.67" fill="url(#gr60)" style="mix-blend-mode:lighten"/><rect x="648.78" y="166.3" width="0.85" height="156.00" fill="url(#gr26)" style="mix-blend-mode:lighten"/><polygon points="658.45,166.3 661.15,166.3 660.45,215.76 659.15,215.76" fill="url(#gr65)" style="mix-blend-mode:lighten"/><rect x="659.31" y="166.3" width="0.97" height="156.00" fill="url(#gr67)" style="mix-blend-mode:lighten"/><polygon points="668.56,166.3 672.24,166.3 671.05,212.03 669.75,212.03" fill="url(#gr57)" style="mix-blend-mode:lighten"/><rect x="669.85" y="166.3" width="1.09" height="156.00" fill="url(#gr67)" style="mix-blend-mode:lighten"/><polygon points="683.67,166.3 686.33,166.3 685.65,217.46 684.35,217.46" fill="url(#gr60)" style="mix-blend-mode:lighten"/><rect x="684.49" y="166.3" width="1.02" height="156.00" fill="url(#gr26)" style="mix-blend-mode:lighten"/><polygon points="610.30,166.3 616.30,166.3 614.80,246.30 611.80,246.30" fill="url(#gr68)" style="mix-blend-mode:lighten"/><rect x="612.05" y="166.3" width="2.50" height="156.00" fill="url(#gr67)" style="mix-blend-mode:lighten"/><polygon points="326.00,166.3 332.00,166.3 330.00,216.30 328.00,216.30" fill="url(#gr69)" style="mix-blend-mode:lighten"/></g><g filter="url(#fp3t)"><rect x="79.6" y="332.30" width="612.90" height="47.00" fill="#050505"/><rect x="79.6" y="379.30" width="612.90" height="1.00" fill="#383838"/><rect x="79.6" y="380.30" width="612.90" height="14.00" fill="#1f1f1f"/><rect x="79.6" y="394.30" width="612.90" height="10.00" fill="#262626"/><rect x="79.6" y="404.30" width="612.90" height="1.50" fill="#383838"/><rect x="79.6" y="405.80" width="612.90" height="0.80" fill="#4c4c4c"/><rect x="79.6" y="406.60" width="612.90" height="6.70" fill="#525252"/><rect x="79.6" y="413.30" width="612.90" height="5.00" fill="#333333"/><rect x="79.6" y="418.30" width="612.90" height="8.00" fill="#262626"/><rect x="79.6" y="426.30" width="612.90" height="4.00" fill="#525252"/><rect x="79.6" y="430.30" width="612.90" height="2.00" fill="#6b6b6b"/><rect x="79.6" y="432.30" width="612.90" height="1.50" fill="#a1a1a1"/><rect x="79.6" y="433.80" width="612.90" height="5.50" fill="#737373"/><rect x="79.6" y="439.30" width="612.90" height="11.00" fill="#4c4c4c"/><rect x="79.6" y="450.30" width="612.90" height="2.00" fill="#666666"/><rect x="79.6" y="452.30" width="612.90" height="3.00" fill="#949494"/><rect x="79.6" y="455.30" width="612.90" height="4.00" fill="#6b6b6b"/><rect x="79.6" y="459.30" width="612.90" height="13.00" fill="#595959"/><rect x="79.6" y="472.30" width="612.90" height="3.00" fill="#6b6b6b"/><rect x="79.6" y="475.30" width="612.90" height="3.00" fill="#808080"/><rect x="79.6" y="478.30" width="612.90" height="4.00" fill="#757575"/><rect x="79.6" y="482.30" width="612.90" height="1.50" fill="#6b6b6b"/><rect x="79.6" y="483.80" width="612.90" height="1.50" fill="#050505"/><rect x="79.6" y="485.30" width="612.90" height="1.30" fill="#595959"/><rect x="79.6" y="486.60" width="612.90" height="1.70" fill="#a8a8a8"/><polygon points="88.12,332.3 89.40,332.3 92.72,379.30 84.80,379.30" fill="url(#gr70)" style="mix-blend-mode:lighten"/><polygon points="87.99,332.3 89.53,332.3 89.40,366.36 88.12,366.36" fill="url(#gr71)" style="mix-blend-mode:lighten"/><polygon points="95.47,332.3 97.14,332.3 101.27,379.30 91.34,379.30" fill="url(#gr70)" style="mix-blend-mode:lighten"/><polygon points="95.11,332.3 97.51,332.3 97.14,362.85 95.47,362.85" fill="url(#gr72)" style="mix-blend-mode:lighten"/><rect x="95.72" y="332.3" width="1.18" height="62.44" fill="url(#gr9)" style="mix-blend-mode:lighten"/><polygon points="100.21,332.3 101.74,332.3 103.74,379.30 98.21,379.30" fill="url(#gr70)" style="mix-blend-mode:lighten"/><polygon points="100.11,332.3 101.84,332.3 101.74,375.65 100.21,375.65" fill="url(#gr72)" style="mix-blend-mode:lighten"/><rect x="100.37" y="332.3" width="1.20" height="50.38" fill="url(#gr2)" style="mix-blend-mode:lighten"/><polygon points="119.88,332.3 122.54,332.3 126.21,379.30 116.21,379.30" fill="url(#gr70)" style="mix-blend-mode:lighten"/><polygon points="119.49,332.3 122.92,332.3 122.54,366.04 119.88,366.04" fill="url(#gr73)" style="mix-blend-mode:lighten"/><polygon points="125.04,332.3 126.03,332.3 127.99,379.30 123.07,379.30" fill="url(#gr70)" style="mix-blend-mode:lighten"/><polygon points="124.56,332.3 126.50,332.3 126.03,370.19 125.04,370.19" fill="url(#gr74)" style="mix-blend-mode:lighten"/><polygon points="129.27,332.3 130.51,332.3 134.89,379.30 124.90,379.30" fill="url(#gr70)" style="mix-blend-mode:lighten"/><polygon points="128.88,332.3 130.91,332.3 130.51,369.52 129.27,369.52" fill="url(#gr75)" style="mix-blend-mode:lighten"/><polygon points="146.72,332.3 149.19,332.3 151.22,379.30 144.69,379.30" fill="url(#gr70)" style="mix-blend-mode:lighten"/><polygon points="146.53,332.3 149.38,332.3 149.19,375.91 146.72,375.91" fill="url(#gr76)" style="mix-blend-mode:lighten"/><polygon points="151.35,332.3 152.90,332.3 155.34,379.30 148.90,379.30" fill="url(#gr70)" style="mix-blend-mode:lighten"/><polygon points="150.92,332.3 153.32,332.3 152.90,374.80 151.35,374.80" fill="url(#gr77)" style="mix-blend-mode:lighten"/><rect x="151.64" y="332.3" width="0.96" height="73.33" fill="url(#gr67)" style="mix-blend-mode:lighten"/><polygon points="168.69,332.3 169.87,332.3 171.49,379.30 167.06,379.30" fill="url(#gr70)" style="mix-blend-mode:lighten"/><polygon points="168.46,332.3 170.09,332.3 169.87,360.17 168.69,360.17" fill="url(#gr78)" style="mix-blend-mode:lighten"/><polygon points="172.08,332.3 173.15,332.3 176.44,379.30 168.79,379.30" fill="url(#gr70)" style="mix-blend-mode:lighten"/><polygon points="171.88,332.3 173.35,332.3 173.15,380.89 172.08,380.89" fill="url(#gr79)" style="mix-blend-mode:lighten"/><rect x="172.12" y="332.3" width="0.99" height="61.75" fill="url(#gr2)" style="mix-blend-mode:lighten"/><polygon points="176.66,332.3 178.11,332.3 181.09,379.30 173.68,379.30" fill="url(#gr70)" style="mix-blend-mode:lighten"/><polygon points="176.14,332.3 178.63,332.3 178.11,374.22 176.66,374.22" fill="url(#gr80)" style="mix-blend-mode:lighten"/><polygon points="190.53,332.3 191.58,332.3 196.38,379.30 185.73,379.30" fill="url(#gr70)" style="mix-blend-mode:lighten"/><polygon points="190.21,332.3 191.90,332.3 191.58,365.36 190.53,365.36" fill="url(#gr79)" style="mix-blend-mode:lighten"/><polygon points="205.52,332.3 206.53,332.3 211.29,379.30 200.76,379.30" fill="url(#gr70)" style="mix-blend-mode:lighten"/><polygon points="205.30,332.3 206.75,332.3 206.53,371.48 205.52,371.48" fill="url(#gr81)" style="mix-blend-mode:lighten"/><rect x="205.33" y="332.3" width="1.38" height="47.89" fill="url(#gr2)" style="mix-blend-mode:lighten"/><polygon points="208.12,332.3 211.04,332.3 213.40,379.30 205.76,379.30" fill="url(#gr70)" style="mix-blend-mode:lighten"/><polygon points="207.93,332.3 211.24,332.3 211.04,357.88 208.12,357.88" fill="url(#gr82)" style="mix-blend-mode:lighten"/><polygon points="215.57,332.3 217.16,332.3 219.80,379.30 212.94,379.30" fill="url(#gr70)" style="mix-blend-mode:lighten"/><polygon points="214.78,332.3 217.96,332.3 217.16,358.93 215.57,358.93" fill="url(#gr83)" style="mix-blend-mode:lighten"/><rect x="215.92" y="332.3" width="0.91" height="68.57" fill="url(#gr21)" style="mix-blend-mode:lighten"/><polygon points="231.42,332.3 233.06,332.3 234.76,379.30 229.71,379.30" fill="url(#gr70)" style="mix-blend-mode:lighten"/><polygon points="231.17,332.3 233.31,332.3 233.06,368.22 231.42,368.22" fill="url(#gr84)" style="mix-blend-mode:lighten"/><rect x="231.59" y="332.3" width="1.29" height="56.32" fill="url(#gr2)" style="mix-blend-mode:lighten"/><polygon points="235.57,332.3 237.29,332.3 239.24,379.30 233.62,379.30" fill="url(#gr70)" style="mix-blend-mode:lighten"/><polygon points="235.01,332.3 237.85,332.3 237.29,369.85 235.57,369.85" fill="url(#gr84)" style="mix-blend-mode:lighten"/><rect x="235.80" y="332.3" width="1.26" height="65.88" fill="url(#gr21)" style="mix-blend-mode:lighten"/><polygon points="248.45,332.3 249.72,332.3 252.38,379.30 245.79,379.30" fill="url(#gr70)" style="mix-blend-mode:lighten"/><polygon points="248.30,332.3 249.87,332.3 249.72,363.17 248.45,363.17" fill="url(#gr85)" style="mix-blend-mode:lighten"/><polygon points="255.47,332.3 257.81,332.3 261.40,379.30 251.87,379.30" fill="url(#gr70)" style="mix-blend-mode:lighten"/><polygon points="254.85,332.3 258.43,332.3 257.81,360.55 255.47,360.55" fill="url(#gr86)" style="mix-blend-mode:lighten"/><polygon points="265.99,332.3 268.09,332.3 269.27,379.30 264.81,379.30" fill="url(#gr70)" style="mix-blend-mode:lighten"/><polygon points="265.52,332.3 268.56,332.3 268.09,376.94 265.99,376.94" fill="url(#gr87)" style="mix-blend-mode:lighten"/><polygon points="273.31,332.3 276.26,332.3 279.29,379.30 270.28,379.30" fill="url(#gr70)" style="mix-blend-mode:lighten"/><polygon points="273.12,332.3 276.45,332.3 276.26,379.66 273.31,379.66" fill="url(#gr88)" style="mix-blend-mode:lighten"/><polygon points="281.19,332.3 283.66,332.3 284.85,379.30 280.01,379.30" fill="url(#gr70)" style="mix-blend-mode:lighten"/><polygon points="280.98,332.3 283.87,332.3 283.66,374.74 281.19,374.74" fill="url(#gr77)" style="mix-blend-mode:lighten"/><rect x="281.96" y="332.3" width="0.94" height="52.18" fill="url(#gr67)" style="mix-blend-mode:lighten"/><polygon points="289.82,332.3 291.01,332.3 295.08,379.30 285.74,379.30" fill="url(#gr70)" style="mix-blend-mode:lighten"/><polygon points="289.37,332.3 291.45,332.3 291.01,360.25 289.82,360.25" fill="url(#gr89)" style="mix-blend-mode:lighten"/><polygon points="297.68,332.3 298.61,332.3 301.91,379.30 294.38,379.30" fill="url(#gr70)" style="mix-blend-mode:lighten"/><polygon points="297.36,332.3 298.94,332.3 298.61,359.14 297.68,359.14" fill="url(#gr90)" style="mix-blend-mode:lighten"/><rect x="297.55" y="332.3" width="1.18" height="55.24" fill="url(#gr21)" style="mix-blend-mode:lighten"/><polygon points="303.90,332.3 306.32,332.3 310.41,379.30 299.81,379.30" fill="url(#gr70)" style="mix-blend-mode:lighten"/><polygon points="303.34,332.3 306.88,332.3 306.32,371.77 303.90,371.77" fill="url(#gr77)" style="mix-blend-mode:lighten"/><polygon points="307.22,332.3 309.25,332.3 310.97,379.30 305.49,379.30" fill="url(#gr70)" style="mix-blend-mode:lighten"/><polygon points="306.69,332.3 309.77,332.3 309.25,358.55 307.22,358.55" fill="url(#gr91)" style="mix-blend-mode:lighten"/><rect x="307.58" y="332.3" width="1.30" height="60.98" fill="url(#gr5)" style="mix-blend-mode:lighten"/><polygon points="313.80,332.3 315.19,332.3 318.66,379.30 310.33,379.30" fill="url(#gr70)" style="mix-blend-mode:lighten"/><polygon points="313.28,332.3 315.71,332.3 315.19,357.66 313.80,357.66" fill="url(#gr92)" style="mix-blend-mode:lighten"/><polygon points="318.99,332.3 320.73,332.3 323.75,379.30 315.97,379.30" fill="url(#gr70)" style="mix-blend-mode:lighten"/><polygon points="318.47,332.3 321.25,332.3 320.73,365.86 318.99,365.86" fill="url(#gr81)" style="mix-blend-mode:lighten"/><polygon points="334.80,332.3 337.71,332.3 339.27,379.30 333.25,379.30" fill="url(#gr70)" style="mix-blend-mode:lighten"/><polygon points="334.53,332.3 337.99,332.3 337.71,378.47 334.80,378.47" fill="url(#gr93)" style="mix-blend-mode:lighten"/><rect x="335.75" y="332.3" width="1.02" height="63.34" fill="url(#gr9)" style="mix-blend-mode:lighten"/><polygon points="338.98,332.3 341.12,332.3 343.79,379.30 336.31,379.30" fill="url(#gr70)" style="mix-blend-mode:lighten"/><polygon points="338.30,332.3 341.79,332.3 341.12,359.63 338.98,359.63" fill="url(#gr78)" style="mix-blend-mode:lighten"/><polygon points="345.06,332.3 346.18,332.3 349.24,379.30 342.00,379.30" fill="url(#gr70)" style="mix-blend-mode:lighten"/><polygon points="344.50,332.3 346.73,332.3 346.18,369.22 345.06,369.22" fill="url(#gr89)" style="mix-blend-mode:lighten"/><rect x="345.05" y="332.3" width="1.14" height="64.96" fill="url(#gr2)" style="mix-blend-mode:lighten"/><polygon points="352.79,332.3 354.15,332.3 358.26,379.30 348.68,379.30" fill="url(#gr70)" style="mix-blend-mode:lighten"/><polygon points="352.46,332.3 354.48,332.3 354.15,359.33 352.79,359.33" fill="url(#gr75)" style="mix-blend-mode:lighten"/><rect x="352.89" y="332.3" width="1.15" height="58.93" fill="url(#gr26)" style="mix-blend-mode:lighten"/><polygon points="358.03,332.3 360.46,332.3 362.44,379.30 356.05,379.30" fill="url(#gr70)" style="mix-blend-mode:lighten"/><polygon points="357.50,332.3 360.98,332.3 360.46,368.87 358.03,368.87" fill="url(#gr94)" style="mix-blend-mode:lighten"/><rect x="358.59" y="332.3" width="1.32" height="69.50" fill="url(#gr5)" style="mix-blend-mode:lighten"/><polygon points="365.81,332.3 368.46,332.3 369.75,379.30 364.52,379.30" fill="url(#gr70)" style="mix-blend-mode:lighten"/><polygon points="365.43,332.3 368.85,332.3 368.46,376.44 365.81,376.44" fill="url(#gr86)" style="mix-blend-mode:lighten"/><polygon points="375.00,332.3 376.75,332.3 381.06,379.30 370.69,379.30" fill="url(#gr70)" style="mix-blend-mode:lighten"/><polygon points="374.16,332.3 377.59,332.3 376.75,369.58 375.00,369.58" fill="url(#gr95)" style="mix-blend-mode:lighten"/><polygon points="381.50,332.3 382.69,332.3 384.75,379.30 379.45,379.30" fill="url(#gr70)" style="mix-blend-mode:lighten"/><polygon points="381.32,332.3 382.87,332.3 382.69,359.93 381.50,359.93" fill="url(#gr79)" style="mix-blend-mode:lighten"/><polygon points="402.26,332.3 403.59,332.3 407.98,379.30 397.87,379.30" fill="url(#gr70)" style="mix-blend-mode:lighten"/><polygon points="402.09,332.3 403.76,332.3 403.59,358.71 402.26,358.71" fill="url(#gr86)" style="mix-blend-mode:lighten"/><polygon points="409.67,332.3 411.62,332.3 415.43,379.30 405.86,379.30" fill="url(#gr70)" style="mix-blend-mode:lighten"/><polygon points="409.24,332.3 412.05,332.3 411.62,366.53 409.67,366.53" fill="url(#gr96)" style="mix-blend-mode:lighten"/><rect x="410.00" y="332.3" width="1.29" height="66.44" fill="url(#gr14)" style="mix-blend-mode:lighten"/><polygon points="420.23,332.3 421.38,332.3 426.05,379.30 415.56,379.30" fill="url(#gr70)" style="mix-blend-mode:lighten"/><polygon points="419.80,332.3 421.80,332.3 421.38,372.85 420.23,372.85" fill="url(#gr79)" style="mix-blend-mode:lighten"/><polygon points="423.95,332.3 426.56,332.3 429.08,379.30 421.43,379.30" fill="url(#gr70)" style="mix-blend-mode:lighten"/><polygon points="423.51,332.3 427.00,332.3 426.56,380.40 423.95,380.40" fill="url(#gr78)" style="mix-blend-mode:lighten"/><polygon points="434.86,332.3 436.63,332.3 438.59,379.30 432.90,379.30" fill="url(#gr70)" style="mix-blend-mode:lighten"/><polygon points="434.46,332.3 437.03,332.3 436.63,375.17 434.86,375.17" fill="url(#gr97)" style="mix-blend-mode:lighten"/><rect x="435.28" y="332.3" width="0.93" height="56.95" fill="url(#gr23)" style="mix-blend-mode:lighten"/><polygon points="448.19,332.3 450.06,332.3 451.55,379.30 446.70,379.30" fill="url(#gr70)" style="mix-blend-mode:lighten"/><polygon points="447.72,332.3 450.53,332.3 450.06,367.06 448.19,367.06" fill="url(#gr85)" style="mix-blend-mode:lighten"/><polygon points="461.37,332.3 463.36,332.3 467.85,379.30 456.87,379.30" fill="url(#gr70)" style="mix-blend-mode:lighten"/><polygon points="461.05,332.3 463.67,332.3 463.36,379.82 461.37,379.82" fill="url(#gr78)" style="mix-blend-mode:lighten"/><polygon points="472.71,332.3 473.57,332.3 476.26,379.30 470.02,379.30" fill="url(#gr70)" style="mix-blend-mode:lighten"/><polygon points="472.38,332.3 473.90,332.3 473.57,370.53 472.71,370.53" fill="url(#gr98)" style="mix-blend-mode:lighten"/><polygon points="485.10,332.3 486.72,332.3 488.11,379.30 483.71,379.30" fill="url(#gr70)" style="mix-blend-mode:lighten"/><polygon points="484.71,332.3 487.11,332.3 486.72,359.86 485.10,359.86" fill="url(#gr99)" style="mix-blend-mode:lighten"/><rect x="485.29" y="332.3" width="1.25" height="59.25" fill="url(#gr5)" style="mix-blend-mode:lighten"/><polygon points="488.70,332.3 490.40,332.3 493.70,379.30 485.39,379.30" fill="url(#gr70)" style="mix-blend-mode:lighten"/><polygon points="488.38,332.3 490.72,332.3 490.40,375.16 488.70,375.16" fill="url(#gr100)" style="mix-blend-mode:lighten"/><rect x="489.07" y="332.3" width="0.96" height="48.53" fill="url(#gr9)" style="mix-blend-mode:lighten"/><polygon points="497.49,332.3 498.51,332.3 501.70,379.30 494.30,379.30" fill="url(#gr70)" style="mix-blend-mode:lighten"/><polygon points="497.22,332.3 498.78,332.3 498.51,368.55 497.49,368.55" fill="url(#gr99)" style="mix-blend-mode:lighten"/><polygon points="501.60,332.3 503.56,332.3 506.02,379.30 499.14,379.30" fill="url(#gr70)" style="mix-blend-mode:lighten"/><polygon points="500.80,332.3 504.36,332.3 503.56,364.60 501.60,364.60" fill="url(#gr94)" style="mix-blend-mode:lighten"/><polygon points="513.07,332.3 515.53,332.3 517.41,379.30 511.20,379.30" fill="url(#gr70)" style="mix-blend-mode:lighten"/><polygon points="512.73,332.3 515.87,332.3 515.53,368.06 513.07,368.06" fill="url(#gr101)" style="mix-blend-mode:lighten"/><polygon points="518.52,332.3 520.19,332.3 522.67,379.30 516.04,379.30" fill="url(#gr70)" style="mix-blend-mode:lighten"/><polygon points="518.32,332.3 520.39,332.3 520.19,368.22 518.52,368.22" fill="url(#gr94)" style="mix-blend-mode:lighten"/><polygon points="526.21,332.3 528.27,332.3 532.56,379.30 521.91,379.30" fill="url(#gr70)" style="mix-blend-mode:lighten"/><polygon points="525.67,332.3 528.80,332.3 528.27,373.41 526.21,373.41" fill="url(#gr78)" style="mix-blend-mode:lighten"/><polygon points="537.92,332.3 539.60,332.3 543.25,379.30 534.27,379.30" fill="url(#gr70)" style="mix-blend-mode:lighten"/><polygon points="537.34,332.3 540.18,332.3 539.60,375.79 537.92,375.79" fill="url(#gr102)" style="mix-blend-mode:lighten"/><rect x="538.12" y="332.3" width="1.28" height="54.27" fill="url(#gr21)" style="mix-blend-mode:lighten"/><polygon points="547.91,332.3 549.95,332.3 553.81,379.30 544.06,379.30" fill="url(#gr70)" style="mix-blend-mode:lighten"/><polygon points="547.79,332.3 550.07,332.3 549.95,362.02 547.91,362.02" fill="url(#gr72)" style="mix-blend-mode:lighten"/><polygon points="558.65,332.3 561.03,332.3 563.80,379.30 555.87,379.30" fill="url(#gr70)" style="mix-blend-mode:lighten"/><polygon points="558.36,332.3 561.32,332.3 561.03,375.22 558.65,375.22" fill="url(#gr103)" style="mix-blend-mode:lighten"/><polygon points="567.08,332.3 568.46,332.3 571.76,379.30 563.79,379.30" fill="url(#gr70)" style="mix-blend-mode:lighten"/><polygon points="566.92,332.3 568.62,332.3 568.46,365.09 567.08,365.09" fill="url(#gr83)" style="mix-blend-mode:lighten"/><polygon points="575.90,332.3 578.28,332.3 579.59,379.30 574.58,379.30" fill="url(#gr70)" style="mix-blend-mode:lighten"/><polygon points="575.70,332.3 578.47,332.3 578.28,373.22 575.90,373.22" fill="url(#gr104)" style="mix-blend-mode:lighten"/><polygon points="581.24,332.3 583.54,332.3 584.65,379.30 580.12,379.30" fill="url(#gr70)" style="mix-blend-mode:lighten"/><polygon points="581.10,332.3 583.67,332.3 583.54,370.97 581.24,370.97" fill="url(#gr71)" style="mix-blend-mode:lighten"/><rect x="581.76" y="332.3" width="1.25" height="70.20" fill="url(#gr9)" style="mix-blend-mode:lighten"/><polygon points="586.64,332.3 587.93,332.3 589.81,379.30 584.77,379.30" fill="url(#gr70)" style="mix-blend-mode:lighten"/><polygon points="586.29,332.3 588.29,332.3 587.93,370.20 586.64,370.20" fill="url(#gr105)" style="mix-blend-mode:lighten"/><rect x="586.60" y="332.3" width="1.37" height="53.99" fill="url(#gr26)" style="mix-blend-mode:lighten"/><polygon points="594.12,332.3 595.42,332.3 596.86,379.30 592.67,379.30" fill="url(#gr70)" style="mix-blend-mode:lighten"/><polygon points="593.97,332.3 595.56,332.3 595.42,375.04 594.12,375.04" fill="url(#gr106)" style="mix-blend-mode:lighten"/><polygon points="601.34,332.3 602.79,332.3 605.72,379.30 598.41,379.30" fill="url(#gr70)" style="mix-blend-mode:lighten"/><polygon points="601.13,332.3 603.00,332.3 602.79,374.08 601.34,374.08" fill="url(#gr107)" style="mix-blend-mode:lighten"/><rect x="601.41" y="332.3" width="1.31" height="62.96" fill="url(#gr2)" style="mix-blend-mode:lighten"/><polygon points="607.06,332.3 609.16,332.3 611.30,379.30 604.92,379.30" fill="url(#gr70)" style="mix-blend-mode:lighten"/><polygon points="606.32,332.3 609.90,332.3 609.16,362.65 607.06,362.65" fill="url(#gr75)" style="mix-blend-mode:lighten"/><polygon points="619.09,332.3 621.72,332.3 625.49,379.30 615.32,379.30" fill="url(#gr70)" style="mix-blend-mode:lighten"/><polygon points="618.70,332.3 622.11,332.3 621.72,361.41 619.09,361.41" fill="url(#gr108)" style="mix-blend-mode:lighten"/><polygon points="623.89,332.3 625.19,332.3 629.48,379.30 619.59,379.30" fill="url(#gr70)" style="mix-blend-mode:lighten"/><polygon points="623.44,332.3 625.64,332.3 625.19,374.55 623.89,374.55" fill="url(#gr109)" style="mix-blend-mode:lighten"/><polygon points="630.04,332.3 630.87,332.3 632.67,379.30 628.23,379.30" fill="url(#gr70)" style="mix-blend-mode:lighten"/><polygon points="629.65,332.3 631.26,332.3 630.87,365.77 630.04,365.77" fill="url(#gr81)" style="mix-blend-mode:lighten"/><rect x="629.83" y="332.3" width="1.25" height="51.94" fill="url(#gr27)" style="mix-blend-mode:lighten"/><polygon points="640.23,332.3 642.07,332.3 644.41,379.30 637.89,379.30" fill="url(#gr70)" style="mix-blend-mode:lighten"/><polygon points="639.69,332.3 642.62,332.3 642.07,368.52 640.23,368.52" fill="url(#gr110)" style="mix-blend-mode:lighten"/><rect x="640.64" y="332.3" width="1.03" height="47.45" fill="url(#gr5)" style="mix-blend-mode:lighten"/><polygon points="644.88,332.3 646.52,332.3 648.79,379.30 642.61,379.30" fill="url(#gr70)" style="mix-blend-mode:lighten"/><polygon points="644.35,332.3 647.05,332.3 646.52,360.01 644.88,360.01" fill="url(#gr77)" style="mix-blend-mode:lighten"/><polygon points="651.42,332.3 653.53,332.3 656.24,379.30 648.71,379.30" fill="url(#gr70)" style="mix-blend-mode:lighten"/><polygon points="651.09,332.3 653.86,332.3 653.53,373.92 651.42,373.92" fill="url(#gr87)" style="mix-blend-mode:lighten"/><polygon points="662.44,332.3 665.13,332.3 668.57,379.30 659.00,379.30" fill="url(#gr70)" style="mix-blend-mode:lighten"/><polygon points="662.22,332.3 665.35,332.3 665.13,362.68 662.44,362.68" fill="url(#gr111)" style="mix-blend-mode:lighten"/><polygon points="678.26,332.3 680.76,332.3 683.45,379.30 675.58,379.30" fill="url(#gr70)" style="mix-blend-mode:lighten"/><polygon points="677.89,332.3 681.13,332.3 680.76,373.90 678.26,373.90" fill="url(#gr77)" style="mix-blend-mode:lighten"/><polygon points="82.35,332.3 83.65,332.3 87.43,379.30 78.57,379.30" fill="url(#gr112)" style="mix-blend-mode:lighten"/><polygon points="81.62,332.3 84.38,332.3 83.65,376.67 82.35,376.67" fill="url(#gr113)" style="mix-blend-mode:lighten"/><rect x="82.45" y="332.3" width="1.11" height="156.00" fill="url(#gr64)" style="mix-blend-mode:lighten"/><polygon points="91.65,332.3 92.95,332.3 96.78,379.30 87.82,379.30" fill="url(#gr112)" style="mix-blend-mode:lighten"/><polygon points="91.32,332.3 93.28,332.3 92.95,380.61 91.65,380.61" fill="url(#gr60)" style="mix-blend-mode:lighten"/><rect x="91.65" y="332.3" width="1.30" height="156.00" fill="url(#gr9)" style="mix-blend-mode:lighten"/><polygon points="104.85,332.3 106.15,332.3 109.10,379.30 101.90,379.30" fill="url(#gr112)" style="mix-blend-mode:lighten"/><polygon points="104.74,332.3 106.26,332.3 106.15,377.04 104.85,377.04" fill="url(#gr62)" style="mix-blend-mode:lighten"/><rect x="104.94" y="332.3" width="1.12" height="156.00" fill="url(#gr26)" style="mix-blend-mode:lighten"/><polygon points="112.85,332.3 114.15,332.3 116.98,379.30 110.02,379.30" fill="url(#gr112)" style="mix-blend-mode:lighten"/><polygon points="112.05,332.3 114.95,332.3 114.15,378.48 112.85,378.48" fill="url(#gr65)" style="mix-blend-mode:lighten"/><rect x="113.02" y="332.3" width="0.97" height="156.00" fill="url(#gr64)" style="mix-blend-mode:lighten"/><polygon points="135.35,332.3 136.65,332.3 138.54,379.30 133.46,379.30" fill="url(#gr112)" style="mix-blend-mode:lighten"/><polygon points="134.90,332.3 137.10,332.3 136.65,380.80 135.35,380.80" fill="url(#gr59)" style="mix-blend-mode:lighten"/><rect x="135.44" y="332.3" width="1.12" height="156.00" fill="url(#gr64)" style="mix-blend-mode:lighten"/><polygon points="142.05,332.3 143.35,332.3 144.74,379.30 140.66,379.30" fill="url(#gr112)" style="mix-blend-mode:lighten"/><polygon points="141.70,332.3 143.70,332.3 143.35,379.19 142.05,379.19" fill="url(#gr59)" style="mix-blend-mode:lighten"/><rect x="142.12" y="332.3" width="1.16" height="156.00" fill="url(#gr26)" style="mix-blend-mode:lighten"/><polygon points="156.55,332.3 157.85,332.3 160.03,379.30 154.37,379.30" fill="url(#gr112)" style="mix-blend-mode:lighten"/><polygon points="156.29,332.3 158.11,332.3 157.85,376.66 156.55,376.66" fill="url(#gr65)" style="mix-blend-mode:lighten"/><rect x="156.64" y="332.3" width="1.12" height="156.00" fill="url(#gr114)" style="mix-blend-mode:lighten"/><polygon points="163.25,332.3 164.55,332.3 167.94,379.30 159.86,379.30" fill="url(#gr112)" style="mix-blend-mode:lighten"/><polygon points="163.07,332.3 164.73,332.3 164.55,379.48 163.25,379.48" fill="url(#gr62)" style="mix-blend-mode:lighten"/><rect x="163.30" y="332.3" width="1.20" height="156.00" fill="url(#gr58)" style="mix-blend-mode:lighten"/><polygon points="183.15,332.3 184.45,332.3 186.15,379.30 181.45,379.30" fill="url(#gr112)" style="mix-blend-mode:lighten"/><polygon points="183.01,332.3 184.59,332.3 184.45,376.47 183.15,376.47" fill="url(#gr65)" style="mix-blend-mode:lighten"/><rect x="183.34" y="332.3" width="0.91" height="156.00" fill="url(#gr26)" style="mix-blend-mode:lighten"/><polygon points="199.05,332.3 200.35,332.3 202.50,379.30 196.90,379.30" fill="url(#gr112)" style="mix-blend-mode:lighten"/><polygon points="198.83,332.3 200.57,332.3 200.35,378.67 199.05,378.67" fill="url(#gr57)" style="mix-blend-mode:lighten"/><rect x="199.08" y="332.3" width="1.23" height="156.00" fill="url(#gr67)" style="mix-blend-mode:lighten"/><polygon points="218.95,332.3 220.25,332.3 223.94,379.30 215.26,379.30" fill="url(#gr112)" style="mix-blend-mode:lighten"/><polygon points="218.71,332.3 220.49,332.3 220.25,379.48 218.95,379.48" fill="url(#gr59)" style="mix-blend-mode:lighten"/><rect x="219.04" y="332.3" width="1.13" height="156.00" fill="url(#gr9)" style="mix-blend-mode:lighten"/><polygon points="226.85,332.3 228.15,332.3 231.29,379.30 223.71,379.30" fill="url(#gr112)" style="mix-blend-mode:lighten"/><polygon points="226.46,332.3 228.54,332.3 228.15,380.42 226.85,380.42" fill="url(#gr62)" style="mix-blend-mode:lighten"/><rect x="226.95" y="332.3" width="1.10" height="156.00" fill="url(#gr26)" style="mix-blend-mode:lighten"/><polygon points="242.85,332.3 244.15,332.3 247.79,379.30 239.21,379.30" fill="url(#gr112)" style="mix-blend-mode:lighten"/><polygon points="242.02,332.3 244.98,332.3 244.15,377.50 242.85,377.50" fill="url(#gr62)" style="mix-blend-mode:lighten"/><rect x="243.04" y="332.3" width="0.93" height="156.00" fill="url(#gr58)" style="mix-blend-mode:lighten"/><polygon points="253.35,332.3 254.65,332.3 258.11,379.30 249.89,379.30" fill="url(#gr112)" style="mix-blend-mode:lighten"/><polygon points="253.11,332.3 254.89,332.3 254.65,377.49 253.35,377.49" fill="url(#gr62)" style="mix-blend-mode:lighten"/><rect x="253.35" y="332.3" width="1.29" height="156.00" fill="url(#gr58)" style="mix-blend-mode:lighten"/><polygon points="261.35,332.3 262.65,332.3 265.79,379.30 258.21,379.30" fill="url(#gr112)" style="mix-blend-mode:lighten"/><polygon points="260.75,332.3 263.25,332.3 262.65,379.44 261.35,379.44" fill="url(#gr62)" style="mix-blend-mode:lighten"/><rect x="261.54" y="332.3" width="0.92" height="156.00" fill="url(#gr64)" style="mix-blend-mode:lighten"/><polygon points="270.65,332.3 271.95,332.3 273.42,379.30 269.18,379.30" fill="url(#gr112)" style="mix-blend-mode:lighten"/><polygon points="270.18,332.3 272.42,332.3 271.95,378.22 270.65,378.22" fill="url(#gr60)" style="mix-blend-mode:lighten"/><rect x="270.65" y="332.3" width="1.29" height="156.00" fill="url(#gr9)" style="mix-blend-mode:lighten"/><polygon points="278.65,332.3 279.95,332.3 282.78,379.30 275.82,379.30" fill="url(#gr112)" style="mix-blend-mode:lighten"/><polygon points="278.27,332.3 280.33,332.3 279.95,377.95 278.65,377.95" fill="url(#gr113)" style="mix-blend-mode:lighten"/><rect x="278.81" y="332.3" width="0.97" height="156.00" fill="url(#gr63)" style="mix-blend-mode:lighten"/><polygon points="285.65,332.3 286.95,332.3 289.71,379.30 282.89,379.30" fill="url(#gr112)" style="mix-blend-mode:lighten"/><polygon points="285.17,332.3 287.43,332.3 286.95,378.80 285.65,378.80" fill="url(#gr65)" style="mix-blend-mode:lighten"/><rect x="285.81" y="332.3" width="0.98" height="156.00" fill="url(#gr26)" style="mix-blend-mode:lighten"/><polygon points="301.55,332.3 302.85,332.3 304.28,379.30 300.12,379.30" fill="url(#gr112)" style="mix-blend-mode:lighten"/><polygon points="300.91,332.3 303.49,332.3 302.85,376.69 301.55,376.69" fill="url(#gr65)" style="mix-blend-mode:lighten"/><rect x="301.66" y="332.3" width="1.09" height="156.00" fill="url(#gr26)" style="mix-blend-mode:lighten"/><polygon points="325.35,332.3 326.65,332.3 329.90,379.30 322.10,379.30" fill="url(#gr112)" style="mix-blend-mode:lighten"/><polygon points="324.62,332.3 327.38,332.3 326.65,379.40 325.35,379.40" fill="url(#gr59)" style="mix-blend-mode:lighten"/><rect x="325.54" y="332.3" width="0.92" height="156.00" fill="url(#gr58)" style="mix-blend-mode:lighten"/><polygon points="330.75,332.3 332.05,332.3 333.49,379.30 329.31,379.30" fill="url(#gr112)" style="mix-blend-mode:lighten"/><polygon points="330.03,332.3 332.77,332.3 332.05,377.04 330.75,377.04" fill="url(#gr113)" style="mix-blend-mode:lighten"/><rect x="330.77" y="332.3" width="1.25" height="156.00" fill="url(#gr9)" style="mix-blend-mode:lighten"/><polygon points="371.85,332.3 373.15,332.3 376.62,379.30 368.38,379.30" fill="url(#gr112)" style="mix-blend-mode:lighten"/><polygon points="371.46,332.3 373.54,332.3 373.15,376.73 371.85,376.73" fill="url(#gr115)" style="mix-blend-mode:lighten"/><rect x="371.87" y="332.3" width="1.27" height="156.00" fill="url(#gr58)" style="mix-blend-mode:lighten"/><polygon points="386.35,332.3 387.65,332.3 389.48,379.30 384.52,379.30" fill="url(#gr112)" style="mix-blend-mode:lighten"/><polygon points="386.22,332.3 387.78,332.3 387.65,376.86 386.35,376.86" fill="url(#gr62)" style="mix-blend-mode:lighten"/><rect x="386.51" y="332.3" width="0.98" height="156.00" fill="url(#gr26)" style="mix-blend-mode:lighten"/><polygon points="397.05,332.3 398.35,332.3 401.04,379.30 394.36,379.30" fill="url(#gr112)" style="mix-blend-mode:lighten"/><polygon points="396.47,332.3 398.93,332.3 398.35,377.14 397.05,377.14" fill="url(#gr113)" style="mix-blend-mode:lighten"/><rect x="397.22" y="332.3" width="0.96" height="156.00" fill="url(#gr67)" style="mix-blend-mode:lighten"/><polygon points="414.35,332.3 415.65,332.3 418.19,379.30 411.81,379.30" fill="url(#gr112)" style="mix-blend-mode:lighten"/><polygon points="413.82,332.3 416.18,332.3 415.65,378.84 414.35,378.84" fill="url(#gr62)" style="mix-blend-mode:lighten"/><rect x="414.43" y="332.3" width="1.15" height="156.00" fill="url(#gr9)" style="mix-blend-mode:lighten"/><polygon points="428.95,332.3 430.25,332.3 433.82,379.30 425.38,379.30" fill="url(#gr112)" style="mix-blend-mode:lighten"/><polygon points="428.70,332.3 430.50,332.3 430.25,377.98 428.95,377.98" fill="url(#gr115)" style="mix-blend-mode:lighten"/><rect x="429.07" y="332.3" width="1.06" height="156.00" fill="url(#gr58)" style="mix-blend-mode:lighten"/><polygon points="440.85,332.3 442.15,332.3 444.46,379.30 438.54,379.30" fill="url(#gr112)" style="mix-blend-mode:lighten"/><polygon points="440.34,332.3 442.66,332.3 442.15,381.00 440.85,381.00" fill="url(#gr113)" style="mix-blend-mode:lighten"/><rect x="440.98" y="332.3" width="1.05" height="156.00" fill="url(#gr58)" style="mix-blend-mode:lighten"/><polygon points="456.75,332.3 458.05,332.3 460.11,379.30 454.69,379.30" fill="url(#gr112)" style="mix-blend-mode:lighten"/><polygon points="456.12,332.3 458.68,332.3 458.05,380.84 456.75,380.84" fill="url(#gr115)" style="mix-blend-mode:lighten"/><rect x="456.80" y="332.3" width="1.20" height="156.00" fill="url(#gr67)" style="mix-blend-mode:lighten"/><polygon points="467.35,332.3 468.65,332.3 470.46,379.30 465.54,379.30" fill="url(#gr112)" style="mix-blend-mode:lighten"/><polygon points="466.66,332.3 469.34,332.3 468.65,379.80 467.35,379.80" fill="url(#gr57)" style="mix-blend-mode:lighten"/><rect x="467.38" y="332.3" width="1.24" height="156.00" fill="url(#gr67)" style="mix-blend-mode:lighten"/><polygon points="480.65,332.3 481.95,332.3 485.15,379.30 477.45,379.30" fill="url(#gr112)" style="mix-blend-mode:lighten"/><polygon points="479.98,332.3 482.62,332.3 481.95,376.86 480.65,376.86" fill="url(#gr57)" style="mix-blend-mode:lighten"/><rect x="480.78" y="332.3" width="1.04" height="156.00" fill="url(#gr63)" style="mix-blend-mode:lighten"/><polygon points="494.65,332.3 495.95,332.3 498.74,379.30 491.86,379.30" fill="url(#gr112)" style="mix-blend-mode:lighten"/><polygon points="494.10,332.3 496.50,332.3 495.95,381.09 494.65,381.09" fill="url(#gr65)" style="mix-blend-mode:lighten"/><rect x="494.65" y="332.3" width="1.30" height="156.00" fill="url(#gr63)" style="mix-blend-mode:lighten"/><polygon points="509.25,332.3 510.55,332.3 512.26,379.30 507.54,379.30" fill="url(#gr112)" style="mix-blend-mode:lighten"/><polygon points="508.52,332.3 511.28,332.3 510.55,379.58 509.25,379.58" fill="url(#gr57)" style="mix-blend-mode:lighten"/><rect x="509.34" y="332.3" width="1.13" height="156.00" fill="url(#gr67)" style="mix-blend-mode:lighten"/><polygon points="531.75,332.3 533.05,332.3 535.97,379.30 528.83,379.30" fill="url(#gr112)" style="mix-blend-mode:lighten"/><polygon points="531.55,332.3 533.25,332.3 533.05,380.20 531.75,380.20" fill="url(#gr115)" style="mix-blend-mode:lighten"/><rect x="531.89" y="332.3" width="1.03" height="156.00" fill="url(#gr67)" style="mix-blend-mode:lighten"/><polygon points="543.75,332.3 545.05,332.3 548.54,379.30 540.26,379.30" fill="url(#gr112)" style="mix-blend-mode:lighten"/><polygon points="543.19,332.3 545.61,332.3 545.05,377.26 543.75,377.26" fill="url(#gr60)" style="mix-blend-mode:lighten"/><rect x="543.90" y="332.3" width="1.01" height="156.00" fill="url(#gr114)" style="mix-blend-mode:lighten"/><polygon points="551.65,332.3 552.95,332.3 556.42,379.30 548.18,379.30" fill="url(#gr112)" style="mix-blend-mode:lighten"/><polygon points="551.28,332.3 553.32,332.3 552.95,379.77 551.65,379.77" fill="url(#gr113)" style="mix-blend-mode:lighten"/><rect x="551.74" y="332.3" width="1.12" height="156.00" fill="url(#gr26)" style="mix-blend-mode:lighten"/><polygon points="562.35,332.3 563.65,332.3 565.00,379.30 561.00,379.30" fill="url(#gr112)" style="mix-blend-mode:lighten"/><polygon points="562.00,332.3 564.00,332.3 563.65,376.31 562.35,376.31" fill="url(#gr115)" style="mix-blend-mode:lighten"/><rect x="562.49" y="332.3" width="1.01" height="156.00" fill="url(#gr67)" style="mix-blend-mode:lighten"/><polygon points="571.55,332.3 572.85,332.3 575.99,379.30 568.41,379.30" fill="url(#gr112)" style="mix-blend-mode:lighten"/><polygon points="570.71,332.3 573.69,332.3 572.85,379.49 571.55,379.49" fill="url(#gr115)" style="mix-blend-mode:lighten"/><rect x="571.65" y="332.3" width="1.09" height="156.00" fill="url(#gr26)" style="mix-blend-mode:lighten"/><polygon points="590.15,332.3 591.45,332.3 593.85,379.30 587.75,379.30" fill="url(#gr112)" style="mix-blend-mode:lighten"/><polygon points="589.51,332.3 592.09,332.3 591.45,380.58 590.15,380.58" fill="url(#gr57)" style="mix-blend-mode:lighten"/><rect x="590.27" y="332.3" width="1.06" height="156.00" fill="url(#gr67)" style="mix-blend-mode:lighten"/><polygon points="612.65,332.3 613.95,332.3 617.01,379.30 609.59,379.30" fill="url(#gr112)" style="mix-blend-mode:lighten"/><polygon points="612.32,332.3 614.28,332.3 613.95,380.01 612.65,380.01" fill="url(#gr60)" style="mix-blend-mode:lighten"/><rect x="612.69" y="332.3" width="1.21" height="156.00" fill="url(#gr26)" style="mix-blend-mode:lighten"/><polygon points="627.25,332.3 628.55,332.3 630.31,379.30 625.49,379.30" fill="url(#gr112)" style="mix-blend-mode:lighten"/><polygon points="626.42,332.3 629.38,332.3 628.55,377.32 627.25,377.32" fill="url(#gr59)" style="mix-blend-mode:lighten"/><rect x="627.37" y="332.3" width="1.07" height="156.00" fill="url(#gr9)" style="mix-blend-mode:lighten"/><polygon points="636.55,332.3 637.85,332.3 640.89,379.30 633.51,379.30" fill="url(#gr112)" style="mix-blend-mode:lighten"/><polygon points="636.31,332.3 638.09,332.3 637.85,379.95 636.55,379.95" fill="url(#gr60)" style="mix-blend-mode:lighten"/><rect x="636.74" y="332.3" width="0.92" height="156.00" fill="url(#gr114)" style="mix-blend-mode:lighten"/><polygon points="648.55,332.3 649.85,332.3 653.26,379.30 645.14,379.30" fill="url(#gr112)" style="mix-blend-mode:lighten"/><polygon points="648.38,332.3 650.02,332.3 649.85,376.48 648.55,376.48" fill="url(#gr60)" style="mix-blend-mode:lighten"/><rect x="648.64" y="332.3" width="1.12" height="156.00" fill="url(#gr58)" style="mix-blend-mode:lighten"/><polygon points="659.15,332.3 660.45,332.3 663.40,379.30 656.20,379.30" fill="url(#gr112)" style="mix-blend-mode:lighten"/><polygon points="658.41,332.3 661.19,332.3 660.45,378.16 659.15,378.16" fill="url(#gr113)" style="mix-blend-mode:lighten"/><rect x="659.30" y="332.3" width="0.99" height="156.00" fill="url(#gr9)" style="mix-blend-mode:lighten"/><polygon points="669.75,332.3 671.05,332.3 673.73,379.30 667.07,379.30" fill="url(#gr112)" style="mix-blend-mode:lighten"/><polygon points="669.63,332.3 671.17,332.3 671.05,377.11 669.75,377.11" fill="url(#gr115)" style="mix-blend-mode:lighten"/><rect x="669.83" y="332.3" width="1.14" height="156.00" fill="url(#gr26)" style="mix-blend-mode:lighten"/><polygon points="684.35,332.3 685.65,332.3 688.68,379.30 681.32,379.30" fill="url(#gr112)" style="mix-blend-mode:lighten"/><polygon points="683.63,332.3 686.37,332.3 685.65,378.02 684.35,378.02" fill="url(#gr113)" style="mix-blend-mode:lighten"/><rect x="684.37" y="332.3" width="1.25" height="156.00" fill="url(#gr58)" style="mix-blend-mode:lighten"/><polygon points="610.80,332.3 615.80,332.3 614.80,412.30 611.80,412.30" fill="url(#gr116)" style="mix-blend-mode:lighten"/><rect x="612.05" y="332.3" width="2.50" height="156.00" fill="url(#gr67)" style="mix-blend-mode:lighten"/></g><g filter="url(#fp2)"><rect x="79.6" y="166.30" width="612.90" height="44.00" fill="#060606"/><rect x="79.6" y="210.30" width="612.90" height="8.00" fill="url(#gr0)"/><rect x="79.6" y="214.30" width="612.90" height="1.00" fill="#333333"/><rect x="79.6" y="218.30" width="612.90" height="22.00" fill="#1f1f1f"/><rect x="79.6" y="240.30" width="612.90" height="1.00" fill="#4c4c4c"/><rect x="79.6" y="241.30" width="612.90" height="4.00" fill="#212121"/><rect x="79.6" y="245.30" width="612.90" height="16.00" fill="#0f0f0f"/><rect x="79.6" y="261.30" width="612.90" height="18.70" fill="#242424"/><rect x="79.6" y="280.00" width="612.90" height="2.60" fill="#4c4c4c"/><rect x="79.6" y="282.60" width="612.90" height="3.20" fill="#262626"/><rect x="79.6" y="285.80" width="612.90" height="5.50" fill="#5c5c5c"/><rect x="79.6" y="291.30" width="612.90" height="14.70" fill="#3b3b3b"/><rect x="79.6" y="306.00" width="612.90" height="1.60" fill="#4c4c4c"/><rect x="79.6" y="307.60" width="612.90" height="4.30" fill="#6b6b6b"/><rect x="79.6" y="311.90" width="612.90" height="1.30" fill="#999999"/><rect x="79.6" y="313.20" width="612.90" height="3.30" fill="#616161"/><rect x="79.6" y="316.50" width="612.90" height="1.40" fill="#050505"/><rect x="79.6" y="317.90" width="612.90" height="1.10" fill="#8c8c8c"/><rect x="79.6" y="319.00" width="612.90" height="3.30" fill="#080808"/><rect x="79.60" y="215.90" width="612.90" height="1.00" fill="#3d3d3d" style="mix-blend-mode:lighten"/><rect x="79.60" y="229.00" width="612.90" height="1.00" fill="#333333" style="mix-blend-mode:lighten"/><rect x="79.60" y="232.30" width="612.90" height="1.00" fill="#333333" style="mix-blend-mode:lighten"/><rect x="79.60" y="236.20" width="612.90" height="1.00" fill="#383838" style="mix-blend-mode:lighten"/><rect x="79.60" y="243.40" width="612.90" height="1.00" fill="#3d3d3d" style="mix-blend-mode:lighten"/><rect x="79.60" y="247.30" width="612.90" height="1.00" fill="#292929" style="mix-blend-mode:lighten"/><rect x="79.60" y="257.00" width="612.90" height="1.00" fill="#333333" style="mix-blend-mode:lighten"/><rect x="79.60" y="261.70" width="612.90" height="1.00" fill="#3d3d3d" style="mix-blend-mode:lighten"/><rect x="79.60" y="263.60" width="612.90" height="1.00" fill="#3d3d3d" style="mix-blend-mode:lighten"/><rect x="79.60" y="268.20" width="612.90" height="1.00" fill="#383838" style="mix-blend-mode:lighten"/><rect x="79.60" y="272.00" width="612.90" height="1.00" fill="#383838" style="mix-blend-mode:lighten"/><rect x="79.60" y="276.00" width="612.90" height="1.00" fill="#383838" style="mix-blend-mode:lighten"/><rect x="361.87" y="247.06" width="330.63" height="1.00" fill="#353535" style="mix-blend-mode:lighten"/><rect x="380.73" y="250.83" width="141.25" height="1.00" fill="#363636" style="mix-blend-mode:lighten"/><rect x="521.12" y="259.13" width="101.41" height="1.00" fill="#323232" style="mix-blend-mode:lighten"/><rect x="532.51" y="222.47" width="159.99" height="1.00" fill="#2c2c2c" style="mix-blend-mode:lighten"/><rect x="638.43" y="283.09" width="54.07" height="1.00" fill="#383838" style="mix-blend-mode:lighten"/><rect x="79.60" y="227.01" width="202.73" height="1.00" fill="#2d2d2d" style="mix-blend-mode:lighten"/><rect x="144.82" y="229.23" width="73.24" height="1.00" fill="#353535" style="mix-blend-mode:lighten"/><rect x="554.89" y="246.26" width="137.61" height="1.00" fill="#383838" style="mix-blend-mode:lighten"/><rect x="431.99" y="250.28" width="260.51" height="1.00" fill="#313131" style="mix-blend-mode:lighten"/><rect x="659.56" y="284.14" width="32.94" height="1.00" fill="#3a3a3a" style="mix-blend-mode:lighten"/><rect x="136.44" y="237.74" width="187.18" height="1.00" fill="#2d2d2d" style="mix-blend-mode:lighten"/><rect x="253.03" y="268.41" width="432.50" height="1.00" fill="#333333" style="mix-blend-mode:lighten"/><rect x="558.23" y="281.45" width="60.24" height="1.00" fill="#303030" style="mix-blend-mode:lighten"/><rect x="300.55" y="278.20" width="391.95" height="1.00" fill="#333333" style="mix-blend-mode:lighten"/><rect x="409.45" y="221.27" width="283.05" height="1.00" fill="#313131" style="mix-blend-mode:lighten"/><rect x="206.72" y="222.23" width="484.19" height="1.00" fill="#3b3b3b" style="mix-blend-mode:lighten"/><rect x="147.86" y="224.32" width="104.46" height="1.00" fill="#2d2d2d" style="mix-blend-mode:lighten"/><rect x="100.94" y="270.50" width="306.09" height="1.00" fill="#343434" style="mix-blend-mode:lighten"/><rect x="479.41" y="229.27" width="117.63" height="1.00" fill="#383838" style="mix-blend-mode:lighten"/><rect x="266.93" y="224.22" width="153.66" height="1.00" fill="#313131" style="mix-blend-mode:lighten"/><rect x="528.25" y="282.32" width="164.25" height="1.00" fill="#3d3d3d" style="mix-blend-mode:lighten"/><rect x="248.85" y="230.63" width="435.93" height="1.00" fill="#383838" style="mix-blend-mode:lighten"/><rect x="655.19" y="223.12" width="37.31" height="1.00" fill="#313131" style="mix-blend-mode:lighten"/><rect x="204.24" y="268.84" width="190.38" height="1.00" fill="#2d2d2d" style="mix-blend-mode:lighten"/><rect x="377.55" y="222.43" width="166.93" height="1.00" fill="#383838" style="mix-blend-mode:lighten"/><polygon points="79.48,166.3 84.63,166.3 82.57,221.91 81.54,221.91" fill="url(#gr1)" style="mix-blend-mode:lighten"/><rect x="81.37" y="166.3" width="1.36" height="50.83" fill="url(#gr2)" style="mix-blend-mode:lighten"/><polygon points="85.08,166.3 88.71,166.3 87.76,196.29 86.03,196.29" fill="url(#gr3)" style="mix-blend-mode:lighten"/><polygon points="88.63,166.3 92.64,166.3 91.24,198.37 90.03,198.37" fill="url(#gr4)" style="mix-blend-mode:lighten"/><rect x="90.08" y="166.3" width="1.11" height="68.82" fill="url(#gr5)" style="mix-blend-mode:lighten"/><polygon points="92.70,166.3 95.07,166.3 94.75,201.14 93.01,201.14" fill="url(#gr6)" style="mix-blend-mode:lighten"/><polygon points="96.45,166.3 97.96,166.3 98.21,177.35 96.21,177.35" fill="url(#gr7)" style="mix-blend-mode:lighten"/><polygon points="98.79,166.3 103.12,166.3 101.66,197.09 100.25,197.09" fill="url(#gr8)" style="mix-blend-mode:lighten"/><rect x="100.40" y="166.3" width="1.11" height="80.55" fill="url(#gr9)" style="mix-blend-mode:lighten"/><polygon points="103.36,166.3 108.40,166.3 106.63,196.69 105.12,196.69" fill="url(#gr10)" style="mix-blend-mode:lighten"/><polygon points="110.35,166.3 112.52,166.3 112.01,213.91 110.86,213.91" fill="url(#gr1)" style="mix-blend-mode:lighten"/><rect x="110.85" y="166.3" width="1.18" height="68.17" fill="url(#gr11)" style="mix-blend-mode:lighten"/><polygon points="114.17,166.3 118.32,166.3 116.91,221.36 115.58,221.36" fill="url(#gr12)" style="mix-blend-mode:lighten"/><rect x="115.56" y="166.3" width="1.38" height="65.79" fill="url(#gr11)" style="mix-blend-mode:lighten"/><polygon points="120.12,166.3 121.95,166.3 121.91,180.66 120.17,180.66" fill="url(#gr13)" style="mix-blend-mode:lighten"/><rect x="120.37" y="166.3" width="1.32" height="53.16" fill="url(#gr14)" style="mix-blend-mode:lighten"/><polygon points="123.91,166.3 125.41,166.3 125.51,222.76 123.81,222.76" fill="url(#gr15)" style="mix-blend-mode:lighten"/><polygon points="126.38,166.3 129.40,166.3 128.52,222.88 127.26,222.88" fill="url(#gr15)" style="mix-blend-mode:lighten"/><polygon points="130.62,166.3 132.12,166.3 132.25,185.04 130.49,185.04" fill="url(#gr16)" style="mix-blend-mode:lighten"/><rect x="130.70" y="166.3" width="1.34" height="76.27" fill="url(#gr9)" style="mix-blend-mode:lighten"/><polygon points="133.81,166.3 135.31,166.3 135.18,183.04 133.94,183.04" fill="url(#gr17)" style="mix-blend-mode:lighten"/><rect x="134.02" y="166.3" width="1.08" height="73.74" fill="url(#gr11)" style="mix-blend-mode:lighten"/><polygon points="136.23,166.3 139.26,166.3 138.62,218.95 136.86,218.95" fill="url(#gr18)" style="mix-blend-mode:lighten"/><rect x="137.04" y="166.3" width="1.40" height="73.90" fill="url(#gr5)" style="mix-blend-mode:lighten"/><polygon points="139.81,166.3 143.26,166.3 142.16,196.04 140.91,196.04" fill="url(#gr10)" style="mix-blend-mode:lighten"/><rect x="141.03" y="166.3" width="1.00" height="61.91" fill="url(#gr11)" style="mix-blend-mode:lighten"/><polygon points="143.78,166.3 147.27,166.3 146.43,216.54 144.62,216.54" fill="url(#gr19)" style="mix-blend-mode:lighten"/><polygon points="148.22,166.3 151.76,166.3 150.52,215.52 149.46,215.52" fill="url(#gr20)" style="mix-blend-mode:lighten"/><rect x="149.50" y="166.3" width="0.98" height="67.30" fill="url(#gr21)" style="mix-blend-mode:lighten"/><polygon points="152.73,166.3 154.47,166.3 154.46,178.27 152.74,178.27" fill="url(#gr22)" style="mix-blend-mode:lighten"/><rect x="152.99" y="166.3" width="1.23" height="70.23" fill="url(#gr23)" style="mix-blend-mode:lighten"/><polygon points="155.69,166.3 161.51,166.3 159.55,207.12 157.66,207.12" fill="url(#gr8)" style="mix-blend-mode:lighten"/><polygon points="162.84,166.3 164.48,166.3 164.40,208.62 162.92,208.62" fill="url(#gr24)" style="mix-blend-mode:lighten"/><polygon points="166.21,166.3 168.64,166.3 168.23,196.67 166.61,196.67" fill="url(#gr25)" style="mix-blend-mode:lighten"/><rect x="166.77" y="166.3" width="1.31" height="72.16" fill="url(#gr26)" style="mix-blend-mode:lighten"/><polygon points="168.93,166.3 171.40,166.3 170.87,214.42 169.45,214.42" fill="url(#gr10)" style="mix-blend-mode:lighten"/><rect x="169.60" y="166.3" width="1.13" height="56.80" fill="url(#gr2)" style="mix-blend-mode:lighten"/><polygon points="172.17,166.3 174.84,166.3 174.19,216.05 172.83,216.05" fill="url(#gr16)" style="mix-blend-mode:lighten"/><rect x="172.84" y="166.3" width="1.35" height="80.29" fill="url(#gr27)" style="mix-blend-mode:lighten"/><polygon points="175.61,166.3 179.02,166.3 177.94,199.51 176.69,199.51" fill="url(#gr28)" style="mix-blend-mode:lighten"/><polygon points="180.65,166.3 182.15,166.3 181.94,212.88 180.86,212.88" fill="url(#gr29)" style="mix-blend-mode:lighten"/><rect x="180.79" y="166.3" width="1.21" height="49.61" fill="url(#gr5)" style="mix-blend-mode:lighten"/><polygon points="182.99,166.3 187.03,166.3 185.55,224.17 184.48,224.17" fill="url(#gr30)" style="mix-blend-mode:lighten"/><rect x="184.48" y="166.3" width="1.07" height="78.52" fill="url(#gr23)" style="mix-blend-mode:lighten"/><polygon points="187.56,166.3 190.69,166.3 190.12,217.14 188.13,217.14" fill="url(#gr31)" style="mix-blend-mode:lighten"/><rect x="188.47" y="166.3" width="1.30" height="61.60" fill="url(#gr23)" style="mix-blend-mode:lighten"/><polygon points="191.46,166.3 194.74,166.3 193.88,195.45 192.31,195.45" fill="url(#gr32)" style="mix-blend-mode:lighten"/><rect x="192.43" y="166.3" width="1.34" height="48.53" fill="url(#gr27)" style="mix-blend-mode:lighten"/><polygon points="196.13,166.3 197.63,166.3 197.74,178.55 196.02,178.55" fill="url(#gr33)" style="mix-blend-mode:lighten"/><rect x="196.26" y="166.3" width="1.23" height="48.68" fill="url(#gr23)" style="mix-blend-mode:lighten"/><polygon points="198.75,166.3 201.38,166.3 201.04,227.21 199.10,227.21" fill="url(#gr10)" style="mix-blend-mode:lighten"/><rect x="199.44" y="166.3" width="1.25" height="70.62" fill="url(#gr27)" style="mix-blend-mode:lighten"/><polygon points="201.83,166.3 204.69,166.3 203.94,206.04 202.58,206.04" fill="url(#gr34)" style="mix-blend-mode:lighten"/><rect x="202.58" y="166.3" width="1.35" height="56.17" fill="url(#gr9)" style="mix-blend-mode:lighten"/><polygon points="204.71,166.3 207.85,166.3 207.20,212.84 205.37,212.84" fill="url(#gr25)" style="mix-blend-mode:lighten"/><polygon points="208.11,166.3 210.97,166.3 210.37,229.02 208.72,229.02" fill="url(#gr35)" style="mix-blend-mode:lighten"/><rect x="208.96" y="166.3" width="1.17" height="70.54" fill="url(#gr21)" style="mix-blend-mode:lighten"/><polygon points="212.63,166.3 214.21,166.3 214.24,175.49 212.60,175.49" fill="url(#gr29)" style="mix-blend-mode:lighten"/><rect x="212.78" y="166.3" width="1.27" height="85.46" fill="url(#gr27)" style="mix-blend-mode:lighten"/><polygon points="216.46,166.3 217.96,166.3 217.88,179.82 216.54,179.82" fill="url(#gr17)" style="mix-blend-mode:lighten"/><rect x="216.63" y="166.3" width="1.16" height="79.41" fill="url(#gr14)" style="mix-blend-mode:lighten"/><polygon points="218.61,166.3 220.82,166.3 220.42,227.07 219.01,227.07" fill="url(#gr15)" style="mix-blend-mode:lighten"/><polygon points="221.48,166.3 224.00,166.3 223.56,228.70 221.92,228.70" fill="url(#gr32)" style="mix-blend-mode:lighten"/><polygon points="224.85,166.3 228.48,166.3 227.27,198.67 226.06,198.67" fill="url(#gr36)" style="mix-blend-mode:lighten"/><rect x="225.97" y="166.3" width="1.40" height="61.90" fill="url(#gr14)" style="mix-blend-mode:lighten"/><polygon points="229.13,166.3 232.94,166.3 231.77,194.67 230.31,194.67" fill="url(#gr37)" style="mix-blend-mode:lighten"/><rect x="230.39" y="166.3" width="1.29" height="53.07" fill="url(#gr2)" style="mix-blend-mode:lighten"/><polygon points="233.80,166.3 236.04,166.3 235.53,182.63 234.31,182.63" fill="url(#gr38)" style="mix-blend-mode:lighten"/><rect x="234.41" y="166.3" width="1.02" height="77.28" fill="url(#gr23)" style="mix-blend-mode:lighten"/><polygon points="237.07,166.3 241.66,166.3 240.32,226.02 238.41,226.02" fill="url(#gr31)" style="mix-blend-mode:lighten"/><rect x="238.79" y="166.3" width="1.14" height="56.72" fill="url(#gr9)" style="mix-blend-mode:lighten"/><polygon points="242.60,166.3 247.29,166.3 245.70,212.35 244.19,212.35" fill="url(#gr39)" style="mix-blend-mode:lighten"/><rect x="244.30" y="166.3" width="1.30" height="62.32" fill="url(#gr26)" style="mix-blend-mode:lighten"/><polygon points="249.08,166.3 251.30,166.3 250.77,215.33 249.61,215.33" fill="url(#gr38)" style="mix-blend-mode:lighten"/><rect x="249.54" y="166.3" width="1.30" height="77.10" fill="url(#gr5)" style="mix-blend-mode:lighten"/><polygon points="252.51,166.3 255.89,166.3 254.83,230.04 253.57,230.04" fill="url(#gr25)" style="mix-blend-mode:lighten"/><polygon points="257.67,166.3 259.17,166.3 259.33,186.15 257.51,186.15" fill="url(#gr40)" style="mix-blend-mode:lighten"/><polygon points="261.00,166.3 262.50,166.3 262.40,186.30 261.10,186.30" fill="url(#gr10)" style="mix-blend-mode:lighten"/><rect x="261.06" y="166.3" width="1.38" height="71.40" fill="url(#gr21)" style="mix-blend-mode:lighten"/><polygon points="264.05,166.3 265.55,166.3 265.57,177.22 264.03,177.22" fill="url(#gr25)" style="mix-blend-mode:lighten"/><polygon points="266.15,166.3 268.79,166.3 268.31,205.97 266.63,205.97" fill="url(#gr38)" style="mix-blend-mode:lighten"/><rect x="266.90" y="166.3" width="1.13" height="77.18" fill="url(#gr23)" style="mix-blend-mode:lighten"/><polygon points="268.89,166.3 272.54,166.3 271.40,192.77 270.02,192.77" fill="url(#gr41)" style="mix-blend-mode:lighten"/><polygon points="274.27,166.3 275.84,166.3 275.66,222.68 274.45,222.68" fill="url(#gr33)" style="mix-blend-mode:lighten"/><polygon points="277.60,166.3 279.10,166.3 278.95,177.89 277.75,177.89" fill="url(#gr33)" style="mix-blend-mode:lighten"/><rect x="277.80" y="166.3" width="1.10" height="75.00" fill="url(#gr5)" style="mix-blend-mode:lighten"/><polygon points="280.48,166.3 283.03,166.3 282.59,195.89 280.92,195.89" fill="url(#gr41)" style="mix-blend-mode:lighten"/><rect x="281.28" y="166.3" width="0.95" height="51.34" fill="url(#gr9)" style="mix-blend-mode:lighten"/><polygon points="283.30,166.3 286.86,166.3 285.62,207.76 284.55,207.76" fill="url(#gr20)" style="mix-blend-mode:lighten"/><rect x="284.59" y="166.3" width="0.98" height="50.58" fill="url(#gr23)" style="mix-blend-mode:lighten"/><polygon points="287.48,166.3 291.43,166.3 290.12,206.97 288.79,206.97" fill="url(#gr22)" style="mix-blend-mode:lighten"/><polygon points="291.77,166.3 295.62,166.3 294.50,217.39 292.89,217.39" fill="url(#gr40)" style="mix-blend-mode:lighten"/><polygon points="297.16,166.3 299.13,166.3 298.95,185.85 297.34,185.85" fill="url(#gr30)" style="mix-blend-mode:lighten"/><rect x="297.57" y="166.3" width="1.15" height="80.48" fill="url(#gr5)" style="mix-blend-mode:lighten"/><polygon points="301.13,166.3 304.70,166.3 303.77,211.91 302.06,211.91" fill="url(#gr7)" style="mix-blend-mode:lighten"/><rect x="302.29" y="166.3" width="1.26" height="89.41" fill="url(#gr27)" style="mix-blend-mode:lighten"/><polygon points="305.44,166.3 308.96,166.3 308.16,204.81 306.23,204.81" fill="url(#gr31)" style="mix-blend-mode:lighten"/><rect x="306.60" y="166.3" width="1.19" height="76.37" fill="url(#gr23)" style="mix-blend-mode:lighten"/><polygon points="309.03,166.3 313.90,166.3 312.25,212.95 310.69,212.95" fill="url(#gr36)" style="mix-blend-mode:lighten"/><polygon points="315.00,166.3 317.87,166.3 317.35,196.96 315.52,196.96" fill="url(#gr42)" style="mix-blend-mode:lighten"/><polygon points="318.38,166.3 322.29,166.3 321.33,199.14 319.34,199.14" fill="url(#gr17)" style="mix-blend-mode:lighten"/><rect x="319.87" y="166.3" width="0.94" height="46.44" fill="url(#gr21)" style="mix-blend-mode:lighten"/><polygon points="322.48,166.3 327.38,166.3 325.66,199.88 324.19,199.88" fill="url(#gr38)" style="mix-blend-mode:lighten"/><rect x="324.28" y="166.3" width="1.30" height="45.74" fill="url(#gr2)" style="mix-blend-mode:lighten"/><polygon points="327.89,166.3 331.56,166.3 330.56,193.74 328.89,193.74" fill="url(#gr43)" style="mix-blend-mode:lighten"/><rect x="329.19" y="166.3" width="1.07" height="73.88" fill="url(#gr2)" style="mix-blend-mode:lighten"/><polygon points="332.35,166.3 333.85,166.3 333.84,184.82 332.36,184.82" fill="url(#gr28)" style="mix-blend-mode:lighten"/><rect x="332.48" y="166.3" width="1.24" height="79.11" fill="url(#gr2)" style="mix-blend-mode:lighten"/><polygon points="336.13,166.3 337.75,166.3 337.65,181.65 336.22,181.65" fill="url(#gr44)" style="mix-blend-mode:lighten"/><rect x="336.26" y="166.3" width="1.35" height="68.67" fill="url(#gr2)" style="mix-blend-mode:lighten"/><polygon points="338.56,166.3 343.42,166.3 341.86,215.01 340.11,215.01" fill="url(#gr16)" style="mix-blend-mode:lighten"/><polygon points="343.54,166.3 348.48,166.3 346.63,212.30 345.39,212.30" fill="url(#gr34)" style="mix-blend-mode:lighten"/><rect x="345.54" y="166.3" width="0.93" height="76.27" fill="url(#gr5)" style="mix-blend-mode:lighten"/><polygon points="348.20,166.3 352.43,166.3 351.25,217.60 349.38,217.60" fill="url(#gr45)" style="mix-blend-mode:lighten"/><polygon points="353.34,166.3 355.38,166.3 354.91,186.95 353.81,186.95" fill="url(#gr7)" style="mix-blend-mode:lighten"/><polygon points="358.41,166.3 360.43,166.3 360.37,175.18 358.47,175.18" fill="url(#gr44)" style="mix-blend-mode:lighten"/><rect x="358.90" y="166.3" width="1.05" height="59.61" fill="url(#gr23)" style="mix-blend-mode:lighten"/><polygon points="363.63,166.3 365.92,166.3 365.77,227.79 363.79,227.79" fill="url(#gr25)" style="mix-blend-mode:lighten"/><rect x="364.25" y="166.3" width="1.05" height="67.43" fill="url(#gr9)" style="mix-blend-mode:lighten"/><polygon points="367.51,166.3 371.75,166.3 370.57,198.83 368.69,198.83" fill="url(#gr24)" style="mix-blend-mode:lighten"/><rect x="369.09" y="166.3" width="1.08" height="66.26" fill="url(#gr9)" style="mix-blend-mode:lighten"/><polygon points="373.67,166.3 375.50,166.3 375.14,175.00 374.03,175.00" fill="url(#gr33)" style="mix-blend-mode:lighten"/><polygon points="377.00,166.3 379.75,166.3 378.99,195.30 377.76,195.30" fill="url(#gr16)" style="mix-blend-mode:lighten"/><rect x="377.69" y="166.3" width="1.37" height="65.03" fill="url(#gr14)" style="mix-blend-mode:lighten"/><polygon points="380.11,166.3 384.24,166.3 382.86,222.34 381.49,222.34" fill="url(#gr37)" style="mix-blend-mode:lighten"/><polygon points="384.33,166.3 389.17,166.3 387.39,217.65 386.11,217.65" fill="url(#gr41)" style="mix-blend-mode:lighten"/><polygon points="389.66,166.3 393.80,166.3 392.63,201.83 390.83,201.83" fill="url(#gr38)" style="mix-blend-mode:lighten"/><rect x="391.13" y="166.3" width="1.20" height="57.80" fill="url(#gr11)" style="mix-blend-mode:lighten"/><polygon points="394.28,166.3 398.62,166.3 397.18,193.58 395.72,193.58" fill="url(#gr44)" style="mix-blend-mode:lighten"/><rect x="395.78" y="166.3" width="1.35" height="89.45" fill="url(#gr27)" style="mix-blend-mode:lighten"/><polygon points="399.08,166.3 402.27,166.3 401.36,216.81 400.00,216.81" fill="url(#gr37)" style="mix-blend-mode:lighten"/><polygon points="403.66,166.3 405.40,166.3 405.29,183.88 403.77,183.88" fill="url(#gr24)" style="mix-blend-mode:lighten"/><polygon points="408.49,166.3 410.90,166.3 410.42,177.59 408.97,177.59" fill="url(#gr6)" style="mix-blend-mode:lighten"/><polygon points="412.62,166.3 418.02,166.3 416.18,214.98 414.47,214.98" fill="url(#gr45)" style="mix-blend-mode:lighten"/><rect x="414.75" y="166.3" width="1.15" height="46.59" fill="url(#gr2)" style="mix-blend-mode:lighten"/><polygon points="419.23,166.3 421.59,166.3 421.31,177.98 419.51,177.98" fill="url(#gr46)" style="mix-blend-mode:lighten"/><rect x="419.85" y="166.3" width="1.12" height="64.88" fill="url(#gr21)" style="mix-blend-mode:lighten"/><polygon points="424.22,166.3 426.11,166.3 425.74,177.63 424.59,177.63" fill="url(#gr22)" style="mix-blend-mode:lighten"/><polygon points="427.43,166.3 431.39,166.3 430.04,198.82 428.79,198.82" fill="url(#gr29)" style="mix-blend-mode:lighten"/><rect x="428.94" y="166.3" width="0.94" height="81.93" fill="url(#gr2)" style="mix-blend-mode:lighten"/><polygon points="433.08,166.3 434.68,166.3 434.62,193.90 433.13,193.90" fill="url(#gr47)" style="mix-blend-mode:lighten"/><rect x="433.37" y="166.3" width="1.01" height="88.67" fill="url(#gr5)" style="mix-blend-mode:lighten"/><polygon points="435.90,166.3 441.33,166.3 439.26,207.23 437.97,207.23" fill="url(#gr48)" style="mix-blend-mode:lighten"/><rect x="437.94" y="166.3" width="1.35" height="51.37" fill="url(#gr23)" style="mix-blend-mode:lighten"/><polygon points="441.17,166.3 445.22,166.3 443.82,201.04 442.57,201.04" fill="url(#gr25)" style="mix-blend-mode:lighten"/><polygon points="445.93,166.3 448.25,166.3 447.91,207.62 446.26,207.62" fill="url(#gr40)" style="mix-blend-mode:lighten"/><rect x="446.49" y="166.3" width="1.21" height="46.79" fill="url(#gr26)" style="mix-blend-mode:lighten"/><polygon points="449.11,166.3 451.45,166.3 450.98,209.88 449.59,209.88" fill="url(#gr44)" style="mix-blend-mode:lighten"/><polygon points="452.33,166.3 456.02,166.3 454.91,200.45 453.44,200.45" fill="url(#gr31)" style="mix-blend-mode:lighten"/><rect x="453.69" y="166.3" width="0.98" height="54.16" fill="url(#gr21)" style="mix-blend-mode:lighten"/><polygon points="456.51,166.3 460.18,166.3 458.98,206.09 457.71,206.09" fill="url(#gr49)" style="mix-blend-mode:lighten"/><rect x="457.87" y="166.3" width="0.94" height="76.11" fill="url(#gr5)" style="mix-blend-mode:lighten"/><polygon points="460.42,166.3 464.89,166.3 463.34,202.51 461.98,202.51" fill="url(#gr43)" style="mix-blend-mode:lighten"/><polygon points="464.97,166.3 467.69,166.3 466.99,193.08 465.67,193.08" fill="url(#gr22)" style="mix-blend-mode:lighten"/><polygon points="468.57,166.3 471.79,166.3 470.76,193.85 469.61,193.85" fill="url(#gr8)" style="mix-blend-mode:lighten"/><rect x="469.63" y="166.3" width="1.10" height="55.72" fill="url(#gr11)" style="mix-blend-mode:lighten"/><polygon points="471.77,166.3 475.47,166.3 474.19,217.61 473.05,217.61" fill="url(#gr38)" style="mix-blend-mode:lighten"/><rect x="473.10" y="166.3" width="1.03" height="77.65" fill="url(#gr14)" style="mix-blend-mode:lighten"/><polygon points="476.82,166.3 478.33,166.3 478.18,179.13 476.96,179.13" fill="url(#gr50)" style="mix-blend-mode:lighten"/><rect x="477.07" y="166.3" width="1.01" height="58.14" fill="url(#gr9)" style="mix-blend-mode:lighten"/><polygon points="480.53,166.3 482.10,166.3 481.96,187.96 480.67,187.96" fill="url(#gr51)" style="mix-blend-mode:lighten"/><polygon points="483.16,166.3 486.06,166.3 485.22,225.30 483.99,225.30" fill="url(#gr41)" style="mix-blend-mode:lighten"/><polygon points="487.58,166.3 489.42,166.3 489.20,198.33 487.80,198.33" fill="url(#gr25)" style="mix-blend-mode:lighten"/><rect x="487.93" y="166.3" width="1.15" height="57.59" fill="url(#gr5)" style="mix-blend-mode:lighten"/><polygon points="491.90,166.3 493.55,166.3 493.50,218.95 491.95,218.95" fill="url(#gr8)" style="mix-blend-mode:lighten"/><rect x="492.24" y="166.3" width="0.98" height="71.22" fill="url(#gr5)" style="mix-blend-mode:lighten"/><polygon points="495.09,166.3 496.59,166.3 496.50,210.12 495.18,210.12" fill="url(#gr22)" style="mix-blend-mode:lighten"/><rect x="495.27" y="166.3" width="1.15" height="71.36" fill="url(#gr11)" style="mix-blend-mode:lighten"/><polygon points="497.20,166.3 500.08,166.3 499.62,215.68 497.67,215.68" fill="url(#gr31)" style="mix-blend-mode:lighten"/><rect x="498.15" y="166.3" width="0.99" height="66.12" fill="url(#gr2)" style="mix-blend-mode:lighten"/><polygon points="501.13,166.3 504.62,166.3 503.59,207.92 502.17,207.92" fill="url(#gr42)" style="mix-blend-mode:lighten"/><polygon points="506.74,166.3 508.76,166.3 508.32,174.83 507.18,174.83" fill="url(#gr36)" style="mix-blend-mode:lighten"/><polygon points="510.06,166.3 514.41,166.3 513.00,192.34 511.46,192.34" fill="url(#gr13)" style="mix-blend-mode:lighten"/><rect x="511.61" y="166.3" width="1.24" height="55.55" fill="url(#gr23)" style="mix-blend-mode:lighten"/><polygon points="515.13,166.3 519.84,166.3 518.40,213.61 516.57,213.61" fill="url(#gr52)" style="mix-blend-mode:lighten"/><polygon points="520.14,166.3 524.42,166.3 523.12,218.72 521.44,218.72" fill="url(#gr28)" style="mix-blend-mode:lighten"/><polygon points="524.76,166.3 529.45,166.3 527.75,206.34 526.46,206.34" fill="url(#gr53)" style="mix-blend-mode:lighten"/><polygon points="529.63,166.3 533.85,166.3 532.29,194.91 531.19,194.91" fill="url(#gr41)" style="mix-blend-mode:lighten"/><rect x="531.26" y="166.3" width="0.96" height="47.85" fill="url(#gr21)" style="mix-blend-mode:lighten"/><polygon points="534.26,166.3 535.76,166.3 535.64,175.05 534.38,175.05" fill="url(#gr45)" style="mix-blend-mode:lighten"/><rect x="534.34" y="166.3" width="1.33" height="84.14" fill="url(#gr27)" style="mix-blend-mode:lighten"/><polygon points="537.41,166.3 538.91,166.3 539.08,184.93 537.24,184.93" fill="url(#gr10)" style="mix-blend-mode:lighten"/><rect x="537.63" y="166.3" width="1.06" height="60.02" fill="url(#gr14)" style="mix-blend-mode:lighten"/><polygon points="540.16,166.3 543.41,166.3 542.35,222.75 541.22,222.75" fill="url(#gr16)" style="mix-blend-mode:lighten"/><polygon points="544.83,166.3 546.74,166.3 546.77,228.06 544.80,228.06" fill="url(#gr29)" style="mix-blend-mode:lighten"/><polygon points="547.86,166.3 552.17,166.3 550.54,229.87 549.49,229.87" fill="url(#gr41)" style="mix-blend-mode:lighten"/><polygon points="552.18,166.3 556.78,166.3 555.14,196.87 553.81,196.87" fill="url(#gr54)" style="mix-blend-mode:lighten"/><polygon points="558.10,166.3 560.12,166.3 559.92,179.78 558.30,179.78" fill="url(#gr47)" style="mix-blend-mode:lighten"/><rect x="558.45" y="166.3" width="1.32" height="57.77" fill="url(#gr14)" style="mix-blend-mode:lighten"/><polygon points="561.44,166.3 565.80,166.3 564.21,197.88 563.03,197.88" fill="url(#gr43)" style="mix-blend-mode:lighten"/><polygon points="566.05,166.3 569.75,166.3 568.53,216.06 567.26,216.06" fill="url(#gr3)" style="mix-blend-mode:lighten"/><rect x="567.31" y="166.3" width="1.18" height="51.46" fill="url(#gr11)" style="mix-blend-mode:lighten"/><polygon points="570.88,166.3 572.44,166.3 572.40,199.23 570.92,199.23" fill="url(#gr24)" style="mix-blend-mode:lighten"/><rect x="571.13" y="166.3" width="1.05" height="48.53" fill="url(#gr9)" style="mix-blend-mode:lighten"/><polygon points="573.82,166.3 577.61,166.3 576.24,207.35 575.18,207.35" fill="url(#gr32)" style="mix-blend-mode:lighten"/><polygon points="579.42,166.3 581.73,166.3 581.57,186.40 579.57,186.40" fill="url(#gr45)" style="mix-blend-mode:lighten"/><polygon points="584.53,166.3 586.33,166.3 586.31,179.32 584.55,179.32" fill="url(#gr31)" style="mix-blend-mode:lighten"/><rect x="584.95" y="166.3" width="0.96" height="48.36" fill="url(#gr27)" style="mix-blend-mode:lighten"/><polygon points="586.99,166.3 591.50,166.3 589.94,220.25 588.55,220.25" fill="url(#gr6)" style="mix-blend-mode:lighten"/><rect x="588.59" y="166.3" width="1.31" height="80.65" fill="url(#gr21)" style="mix-blend-mode:lighten"/><polygon points="591.78,166.3 596.28,166.3 594.88,207.59 593.17,207.59" fill="url(#gr42)" style="mix-blend-mode:lighten"/><polygon points="596.58,166.3 601.53,166.3 599.88,206.16 598.24,206.16" fill="url(#gr34)" style="mix-blend-mode:lighten"/><rect x="598.44" y="166.3" width="1.23" height="81.48" fill="url(#gr5)" style="mix-blend-mode:lighten"/><polygon points="603.27,166.3 604.93,166.3 604.94,213.06 603.26,213.06" fill="url(#gr1)" style="mix-blend-mode:lighten"/><rect x="603.60" y="166.3" width="1.01" height="78.44" fill="url(#gr14)" style="mix-blend-mode:lighten"/><polygon points="606.78,166.3 608.47,166.3 608.40,178.80 606.86,178.80" fill="url(#gr24)" style="mix-blend-mode:lighten"/><rect x="607.05" y="166.3" width="1.15" height="63.15" fill="url(#gr11)" style="mix-blend-mode:lighten"/><polygon points="610.01,166.3 613.06,166.3 612.24,200.65 610.83,200.65" fill="url(#gr41)" style="mix-blend-mode:lighten"/><rect x="610.98" y="166.3" width="1.12" height="88.32" fill="url(#gr26)" style="mix-blend-mode:lighten"/><polygon points="612.99,166.3 616.80,166.3 615.71,197.93 614.08,197.93" fill="url(#gr16)" style="mix-blend-mode:lighten"/><rect x="614.36" y="166.3" width="1.08" height="89.53" fill="url(#gr27)" style="mix-blend-mode:lighten"/><polygon points="617.01,166.3 621.05,166.3 619.78,216.19 618.28,216.19" fill="url(#gr25)" style="mix-blend-mode:lighten"/><polygon points="621.76,166.3 624.33,166.3 623.74,208.24 622.35,208.24" fill="url(#gr29)" style="mix-blend-mode:lighten"/><polygon points="625.86,166.3 627.49,166.3 627.47,209.28 625.88,209.28" fill="url(#gr51)" style="mix-blend-mode:lighten"/><polygon points="628.48,166.3 633.40,166.3 631.81,204.19 630.07,204.19" fill="url(#gr52)" style="mix-blend-mode:lighten"/><polygon points="634.00,166.3 637.55,166.3 636.69,227.93 634.86,227.93" fill="url(#gr10)" style="mix-blend-mode:lighten"/><rect x="635.12" y="166.3" width="1.32" height="74.22" fill="url(#gr23)" style="mix-blend-mode:lighten"/><polygon points="639.06,166.3 640.87,166.3 640.59,184.26 639.34,184.26" fill="url(#gr10)" style="mix-blend-mode:lighten"/><polygon points="641.91,166.3 645.91,166.3 644.66,222.21 643.16,222.21" fill="url(#gr30)" style="mix-blend-mode:lighten"/><rect x="643.44" y="166.3" width="0.94" height="69.97" fill="url(#gr2)" style="mix-blend-mode:lighten"/><polygon points="646.86,166.3 650.09,166.3 649.05,222.58 647.90,222.58" fill="url(#gr13)" style="mix-blend-mode:lighten"/><polygon points="650.22,166.3 654.80,166.3 653.10,196.76 651.92,196.76" fill="url(#gr42)" style="mix-blend-mode:lighten"/><polygon points="655.71,166.3 657.21,166.3 657.33,186.57 655.60,186.57" fill="url(#gr29)" style="mix-blend-mode:lighten"/><rect x="655.96" y="166.3" width="1.00" height="73.31" fill="url(#gr26)" style="mix-blend-mode:lighten"/><polygon points="659.42,166.3 660.99,166.3 661.05,182.74 659.36,182.74" fill="url(#gr1)" style="mix-blend-mode:lighten"/><rect x="659.60" y="166.3" width="1.21" height="57.53" fill="url(#gr5)" style="mix-blend-mode:lighten"/><polygon points="661.99,166.3 665.46,166.3 664.72,199.75 662.72,199.75" fill="url(#gr4)" style="mix-blend-mode:lighten"/><rect x="663.12" y="166.3" width="1.21" height="61.09" fill="url(#gr26)" style="mix-blend-mode:lighten"/><polygon points="665.60,166.3 670.26,166.3 668.66,207.84 667.20,207.84" fill="url(#gr55)" style="mix-blend-mode:lighten"/><rect x="667.38" y="166.3" width="1.11" height="81.91" fill="url(#gr2)" style="mix-blend-mode:lighten"/><polygon points="671.70,166.3 674.05,166.3 673.80,178.31 671.95,178.31" fill="url(#gr53)" style="mix-blend-mode:lighten"/><rect x="672.35" y="166.3" width="1.04" height="84.27" fill="url(#gr2)" style="mix-blend-mode:lighten"/><polygon points="676.37,166.3 680.12,166.3 678.78,209.34 677.71,209.34" fill="url(#gr36)" style="mix-blend-mode:lighten"/><polygon points="680.27,166.3 683.15,166.3 682.33,217.84 681.09,217.84" fill="url(#gr13)" style="mix-blend-mode:lighten"/><polygon points="684.89,166.3 686.39,166.3 686.41,182.57 684.87,182.57" fill="url(#gr30)" style="mix-blend-mode:lighten"/><rect x="684.98" y="166.3" width="1.31" height="83.26" fill="url(#gr5)" style="mix-blend-mode:lighten"/><polygon points="686.77,166.3 690.17,166.3 689.14,217.73 687.80,217.73" fill="url(#gr47)" style="mix-blend-mode:lighten"/><polygon points="689.92,166.3 695.81,166.3 693.85,215.31 691.88,215.31" fill="url(#gr56)" style="mix-blend-mode:lighten"/><rect x="692.34" y="166.3" width="1.06" height="75.19" fill="url(#gr21)" style="mix-blend-mode:lighten"/><polygon points="81.60,166.3 84.40,166.3 83.65,219.56 82.35,219.56" fill="url(#gr57)" style="mix-blend-mode:lighten"/><rect x="82.45" y="166.3" width="1.10" height="156.00" fill="url(#gr58)" style="mix-blend-mode:lighten"/><polygon points="91.23,166.3 93.37,166.3 92.95,213.70 91.65,213.70" fill="url(#gr59)" style="mix-blend-mode:lighten"/><rect x="91.87" y="166.3" width="0.87" height="156.00" fill="url(#gr58)" style="mix-blend-mode:lighten"/><polygon points="103.51,166.3 107.49,166.3 106.15,209.65 104.85,209.65" fill="url(#gr59)" style="mix-blend-mode:lighten"/><rect x="105.04" y="166.3" width="0.92" height="156.00" fill="url(#gr9)" style="mix-blend-mode:lighten"/><polygon points="111.76,166.3 115.24,166.3 114.15,207.64 112.85,207.64" fill="url(#gr60)" style="mix-blend-mode:lighten"/><rect x="113.01" y="166.3" width="0.99" height="156.00" fill="url(#gr58)" style="mix-blend-mode:lighten"/><polygon points="134.26,166.3 137.74,166.3 136.65,210.35 135.35,210.35" fill="url(#gr61)" style="mix-blend-mode:lighten"/><rect x="135.48" y="166.3" width="1.03" height="156.00" fill="url(#gr58)" style="mix-blend-mode:lighten"/><polygon points="141.58,166.3 143.82,166.3 143.35,213.80 142.05,213.80" fill="url(#gr62)" style="mix-blend-mode:lighten"/><rect x="142.16" y="166.3" width="1.08" height="156.00" fill="url(#gr63)" style="mix-blend-mode:lighten"/><polygon points="155.30,166.3 159.10,166.3 157.85,206.69 156.55,206.69" fill="url(#gr59)" style="mix-blend-mode:lighten"/><rect x="156.72" y="166.3" width="0.96" height="156.00" fill="url(#gr64)" style="mix-blend-mode:lighten"/><polygon points="162.79,166.3 165.01,166.3 164.55,218.93 163.25,218.93" fill="url(#gr59)" style="mix-blend-mode:lighten"/><rect x="163.48" y="166.3" width="0.84" height="156.00" fill="url(#gr64)" style="mix-blend-mode:lighten"/><polygon points="182.23,166.3 185.37,166.3 184.45,208.38 183.15,208.38" fill="url(#gr60)" style="mix-blend-mode:lighten"/><rect x="183.36" y="166.3" width="0.89" height="156.00" fill="url(#gr64)" style="mix-blend-mode:lighten"/><polygon points="197.92,166.3 201.48,166.3 200.35,210.25 199.05,210.25" fill="url(#gr59)" style="mix-blend-mode:lighten"/><rect x="199.27" y="166.3" width="0.87" height="156.00" fill="url(#gr14)" style="mix-blend-mode:lighten"/><polygon points="218.15,166.3 221.05,166.3 220.25,215.23 218.95,215.23" fill="url(#gr65)" style="mix-blend-mode:lighten"/><rect x="219.18" y="166.3" width="0.83" height="156.00" fill="url(#gr63)" style="mix-blend-mode:lighten"/><polygon points="225.65,166.3 229.35,166.3 228.15,208.78 226.85,208.78" fill="url(#gr66)" style="mix-blend-mode:lighten"/><rect x="227.04" y="166.3" width="0.92" height="156.00" fill="url(#gr64)" style="mix-blend-mode:lighten"/><polygon points="241.89,166.3 245.11,166.3 244.15,220.12 242.85,220.12" fill="url(#gr66)" style="mix-blend-mode:lighten"/><rect x="243.10" y="166.3" width="0.80" height="156.00" fill="url(#gr67)" style="mix-blend-mode:lighten"/><polygon points="252.85,166.3 255.15,166.3 254.65,219.39 253.35,219.39" fill="url(#gr57)" style="mix-blend-mode:lighten"/><rect x="253.58" y="166.3" width="0.85" height="156.00" fill="url(#gr58)" style="mix-blend-mode:lighten"/><polygon points="260.47,166.3 263.53,166.3 262.65,206.76 261.35,206.76" fill="url(#gr60)" style="mix-blend-mode:lighten"/><rect x="261.46" y="166.3" width="1.09" height="156.00" fill="url(#gr26)" style="mix-blend-mode:lighten"/><polygon points="269.66,166.3 272.94,166.3 271.95,219.86 270.65,219.86" fill="url(#gr62)" style="mix-blend-mode:lighten"/><rect x="270.89" y="166.3" width="0.82" height="156.00" fill="url(#gr67)" style="mix-blend-mode:lighten"/><polygon points="278.04,166.3 280.56,166.3 279.95,208.09 278.65,208.09" fill="url(#gr66)" style="mix-blend-mode:lighten"/><rect x="278.83" y="166.3" width="0.95" height="156.00" fill="url(#gr26)" style="mix-blend-mode:lighten"/><polygon points="284.65,166.3 287.95,166.3 286.95,220.49 285.65,220.49" fill="url(#gr66)" style="mix-blend-mode:lighten"/><rect x="285.82" y="166.3" width="0.95" height="156.00" fill="url(#gr64)" style="mix-blend-mode:lighten"/><polygon points="300.30,166.3 304.10,166.3 302.85,212.61 301.55,212.61" fill="url(#gr59)" style="mix-blend-mode:lighten"/><rect x="301.76" y="166.3" width="0.88" height="156.00" fill="url(#gr58)" style="mix-blend-mode:lighten"/><polygon points="324.63,166.3 327.37,166.3 326.65,213.17 325.35,213.17" fill="url(#gr65)" style="mix-blend-mode:lighten"/><rect x="325.54" y="166.3" width="0.93" height="156.00" fill="url(#gr67)" style="mix-blend-mode:lighten"/><polygon points="329.95,166.3 332.85,166.3 332.05,207.09 330.75,207.09" fill="url(#gr61)" style="mix-blend-mode:lighten"/><rect x="330.92" y="166.3" width="0.96" height="156.00" fill="url(#gr14)" style="mix-blend-mode:lighten"/><polygon points="370.95,166.3 374.05,166.3 373.15,212.70 371.85,212.70" fill="url(#gr60)" style="mix-blend-mode:lighten"/><rect x="372.04" y="166.3" width="0.91" height="156.00" fill="url(#gr9)" style="mix-blend-mode:lighten"/><polygon points="385.69,166.3 388.31,166.3 387.65,214.04 386.35,214.04" fill="url(#gr60)" style="mix-blend-mode:lighten"/><rect x="386.53" y="166.3" width="0.95" height="156.00" fill="url(#gr58)" style="mix-blend-mode:lighten"/><polygon points="396.69,166.3 398.71,166.3 398.35,212.81 397.05,212.81" fill="url(#gr66)" style="mix-blend-mode:lighten"/><rect x="397.21" y="166.3" width="0.98" height="156.00" fill="url(#gr14)" style="mix-blend-mode:lighten"/><polygon points="413.04,166.3 416.96,166.3 415.65,212.15 414.35,212.15" fill="url(#gr57)" style="mix-blend-mode:lighten"/><rect x="414.55" y="166.3" width="0.89" height="156.00" fill="url(#gr67)" style="mix-blend-mode:lighten"/><polygon points="427.99,166.3 431.21,166.3 430.25,215.73 428.95,215.73" fill="url(#gr59)" style="mix-blend-mode:lighten"/><rect x="429.12" y="166.3" width="0.95" height="156.00" fill="url(#gr67)" style="mix-blend-mode:lighten"/><polygon points="439.75,166.3 443.25,166.3 442.15,207.15 440.85,207.15" fill="url(#gr60)" style="mix-blend-mode:lighten"/><rect x="441.06" y="166.3" width="0.88" height="156.00" fill="url(#gr26)" style="mix-blend-mode:lighten"/><polygon points="455.60,166.3 459.20,166.3 458.05,213.11 456.75,213.11" fill="url(#gr61)" style="mix-blend-mode:lighten"/><rect x="456.96" y="166.3" width="0.89" height="156.00" fill="url(#gr67)" style="mix-blend-mode:lighten"/><polygon points="466.32,166.3 469.68,166.3 468.65,207.67 467.35,207.67" fill="url(#gr66)" style="mix-blend-mode:lighten"/><rect x="467.55" y="166.3" width="0.90" height="156.00" fill="url(#gr63)" style="mix-blend-mode:lighten"/><polygon points="479.98,166.3 482.62,166.3 481.95,219.41 480.65,219.41" fill="url(#gr61)" style="mix-blend-mode:lighten"/><rect x="480.89" y="166.3" width="0.82" height="156.00" fill="url(#gr64)" style="mix-blend-mode:lighten"/><polygon points="493.54,166.3 497.06,166.3 495.95,207.07 494.65,207.07" fill="url(#gr57)" style="mix-blend-mode:lighten"/><rect x="494.76" y="166.3" width="1.08" height="156.00" fill="url(#gr64)" style="mix-blend-mode:lighten"/><polygon points="508.26,166.3 511.54,166.3 510.55,206.66 509.25,206.66" fill="url(#gr66)" style="mix-blend-mode:lighten"/><rect x="509.41" y="166.3" width="0.97" height="156.00" fill="url(#gr58)" style="mix-blend-mode:lighten"/><polygon points="531.39,166.3 533.41,166.3 533.05,218.09 531.75,218.09" fill="url(#gr65)" style="mix-blend-mode:lighten"/><rect x="531.85" y="166.3" width="1.10" height="156.00" fill="url(#gr58)" style="mix-blend-mode:lighten"/><polygon points="542.48,166.3 546.32,166.3 545.05,207.50 543.75,207.50" fill="url(#gr61)" style="mix-blend-mode:lighten"/><rect x="543.89" y="166.3" width="1.03" height="156.00" fill="url(#gr67)" style="mix-blend-mode:lighten"/><polygon points="550.92,166.3 553.68,166.3 552.95,213.46 551.65,213.46" fill="url(#gr65)" style="mix-blend-mode:lighten"/><rect x="551.85" y="166.3" width="0.90" height="156.00" fill="url(#gr9)" style="mix-blend-mode:lighten"/><polygon points="561.27,166.3 564.73,166.3 563.65,207.44 562.35,207.44" fill="url(#gr60)" style="mix-blend-mode:lighten"/><rect x="562.50" y="166.3" width="1.00" height="156.00" fill="url(#gr63)" style="mix-blend-mode:lighten"/><polygon points="570.65,166.3 573.75,166.3 572.85,208.11 571.55,208.11" fill="url(#gr60)" style="mix-blend-mode:lighten"/><rect x="571.66" y="166.3" width="1.09" height="156.00" fill="url(#gr26)" style="mix-blend-mode:lighten"/><polygon points="589.24,166.3 592.36,166.3 591.45,221.06 590.15,221.06" fill="url(#gr60)" style="mix-blend-mode:lighten"/><rect x="590.32" y="166.3" width="0.96" height="156.00" fill="url(#gr67)" style="mix-blend-mode:lighten"/><polygon points="611.46,166.3 615.14,166.3 613.95,208.27 612.65,208.27" fill="url(#gr61)" style="mix-blend-mode:lighten"/><rect x="612.90" y="166.3" width="0.81" height="156.00" fill="url(#gr67)" style="mix-blend-mode:lighten"/><polygon points="626.47,166.3 629.33,166.3 628.55,212.34 627.25,212.34" fill="url(#gr57)" style="mix-blend-mode:lighten"/><rect x="627.43" y="166.3" width="0.95" height="156.00" fill="url(#gr63)" style="mix-blend-mode:lighten"/><polygon points="635.51,166.3 638.89,166.3 637.85,212.51 636.55,212.51" fill="url(#gr61)" style="mix-blend-mode:lighten"/><rect x="636.69" y="166.3" width="1.02" height="156.00" fill="url(#gr9)" style="mix-blend-mode:lighten"/><polygon points="648.03,166.3 650.37,166.3 649.85,215.67 648.55,215.67" fill="url(#gr60)" style="mix-blend-mode:lighten"/><rect x="648.78" y="166.3" width="0.85" height="156.00" fill="url(#gr26)" style="mix-blend-mode:lighten"/><polygon points="658.45,166.3 661.15,166.3 660.45,215.76 659.15,215.76" fill="url(#gr65)" style="mix-blend-mode:lighten"/><rect x="659.31" y="166.3" width="0.97" height="156.00" fill="url(#gr67)" style="mix-blend-mode:lighten"/><polygon points="668.56,166.3 672.24,166.3 671.05,212.03 669.75,212.03" fill="url(#gr57)" style="mix-blend-mode:lighten"/><rect x="669.85" y="166.3" width="1.09" height="156.00" fill="url(#gr67)" style="mix-blend-mode:lighten"/><polygon points="683.67,166.3 686.33,166.3 685.65,217.46 684.35,217.46" fill="url(#gr60)" style="mix-blend-mode:lighten"/><rect x="684.49" y="166.3" width="1.02" height="156.00" fill="url(#gr26)" style="mix-blend-mode:lighten"/><polygon points="610.30,166.3 616.30,166.3 614.80,246.30 611.80,246.30" fill="url(#gr68)" style="mix-blend-mode:lighten"/><rect x="612.05" y="166.3" width="2.50" height="156.00" fill="url(#gr67)" style="mix-blend-mode:lighten"/><polygon points="326.00,166.3 332.00,166.3 330.00,216.30 328.00,216.30" fill="url(#gr69)" style="mix-blend-mode:lighten"/></g><g filter="url(#fp3)"><rect x="79.6" y="332.30" width="612.90" height="47.00" fill="#050505"/><rect x="79.6" y="379.30" width="612.90" height="1.00" fill="#383838"/><rect x="79.6" y="380.30" width="612.90" height="14.00" fill="#1f1f1f"/><rect x="79.6" y="394.30" width="612.90" height="10.00" fill="#262626"/><rect x="79.6" y="404.30" width="612.90" height="1.50" fill="#383838"/><rect x="79.6" y="405.80" width="612.90" height="0.80" fill="#4c4c4c"/><rect x="79.6" y="406.60" width="612.90" height="6.70" fill="#525252"/><rect x="79.6" y="413.30" width="612.90" height="5.00" fill="#333333"/><rect x="79.6" y="418.30" width="612.90" height="8.00" fill="#262626"/><rect x="79.6" y="426.30" width="612.90" height="4.00" fill="#525252"/><rect x="79.6" y="430.30" width="612.90" height="2.00" fill="#6b6b6b"/><rect x="79.6" y="432.30" width="612.90" height="1.50" fill="#a1a1a1"/><rect x="79.6" y="433.80" width="612.90" height="5.50" fill="#737373"/><rect x="79.6" y="439.30" width="612.90" height="11.00" fill="#4c4c4c"/><rect x="79.6" y="450.30" width="612.90" height="2.00" fill="#666666"/><rect x="79.6" y="452.30" width="612.90" height="3.00" fill="#949494"/><rect x="79.6" y="455.30" width="612.90" height="4.00" fill="#6b6b6b"/><rect x="79.6" y="459.30" width="612.90" height="13.00" fill="#595959"/><rect x="79.6" y="472.30" width="612.90" height="3.00" fill="#6b6b6b"/><rect x="79.6" y="475.30" width="612.90" height="3.00" fill="#808080"/><rect x="79.6" y="478.30" width="612.90" height="4.00" fill="#757575"/><rect x="79.6" y="482.30" width="612.90" height="1.50" fill="#6b6b6b"/><rect x="79.6" y="483.80" width="612.90" height="1.50" fill="#050505"/><rect x="79.6" y="485.30" width="612.90" height="1.30" fill="#595959"/><rect x="79.6" y="486.60" width="612.90" height="1.70" fill="#a8a8a8"/><rect x="79.60" y="399.00" width="612.90" height="1.00" fill="#3d3d3d" style="mix-blend-mode:lighten"/><rect x="79.60" y="401.30" width="612.90" height="1.00" fill="#3d3d3d" style="mix-blend-mode:lighten"/><rect x="79.60" y="403.80" width="612.90" height="1.00" fill="#424242" style="mix-blend-mode:lighten"/><rect x="79.60" y="409.20" width="612.90" height="1.00" fill="#6b6b6b" style="mix-blend-mode:lighten"/><rect x="343.78" y="389.22" width="348.72" height="1.00" fill="#383838" style="mix-blend-mode:lighten"/><rect x="584.70" y="394.09" width="97.65" height="1.00" fill="#2f2f2f" style="mix-blend-mode:lighten"/><rect x="556.30" y="402.10" width="122.31" height="1.00" fill="#303030" style="mix-blend-mode:lighten"/><rect x="627.76" y="398.05" width="64.74" height="1.00" fill="#444444" style="mix-blend-mode:lighten"/><rect x="431.40" y="401.47" width="185.94" height="1.00" fill="#2e2e2e" style="mix-blend-mode:lighten"/><rect x="640.75" y="381.23" width="51.75" height="1.00" fill="#3d3d3d" style="mix-blend-mode:lighten"/><rect x="559.75" y="386.47" width="132.75" height="1.00" fill="#333333" style="mix-blend-mode:lighten"/><rect x="499.49" y="384.51" width="55.45" height="1.00" fill="#313131" style="mix-blend-mode:lighten"/><rect x="576.46" y="393.72" width="116.04" height="1.00" fill="#323232" style="mix-blend-mode:lighten"/><rect x="198.50" y="402.32" width="36.13" height="1.00" fill="#323232" style="mix-blend-mode:lighten"/><rect x="114.84" y="391.00" width="95.21" height="1.00" fill="#353535" style="mix-blend-mode:lighten"/><rect x="156.30" y="394.03" width="163.99" height="1.00" fill="#424242" style="mix-blend-mode:lighten"/><rect x="462.53" y="403.83" width="229.97" height="1.00" fill="#3a3a3a" style="mix-blend-mode:lighten"/><rect x="100.05" y="383.67" width="36.62" height="1.00" fill="#434343" style="mix-blend-mode:lighten"/><rect x="640.80" y="397.12" width="37.87" height="1.00" fill="#3c3c3c" style="mix-blend-mode:lighten"/><rect x="505.41" y="391.87" width="147.99" height="1.00" fill="#454545" style="mix-blend-mode:lighten"/><rect x="397.92" y="382.11" width="294.58" height="1.00" fill="#424242" style="mix-blend-mode:lighten"/><rect x="489.78" y="397.99" width="202.72" height="1.00" fill="#434343" style="mix-blend-mode:lighten"/><rect x="478.97" y="388.74" width="213.53" height="1.00" fill="#424242" style="mix-blend-mode:lighten"/><rect x="540.40" y="390.31" width="152.10" height="1.00" fill="#3a3a3a" style="mix-blend-mode:lighten"/><rect x="302.46" y="395.30" width="245.59" height="1.00" fill="#3b3b3b" style="mix-blend-mode:lighten"/><rect x="452.31" y="382.22" width="240.19" height="1.00" fill="#424242" style="mix-blend-mode:lighten"/><rect x="306.02" y="397.78" width="301.96" height="1.00" fill="#3a3a3a" style="mix-blend-mode:lighten"/><rect x="568.29" y="390.87" width="61.00" height="1.00" fill="#3e3e3e" style="mix-blend-mode:lighten"/><rect x="430.09" y="381.01" width="207.95" height="1.00" fill="#313131" style="mix-blend-mode:lighten"/><rect x="369.45" y="397.06" width="257.37" height="1.00" fill="#434343" style="mix-blend-mode:lighten"/><rect x="86.19" y="386.44" width="141.38" height="1.00" fill="#3d3d3d" style="mix-blend-mode:lighten"/><rect x="178.46" y="385.16" width="365.12" height="1.00" fill="#3c3c3c" style="mix-blend-mode:lighten"/><rect x="599.39" y="390.91" width="93.11" height="1.00" fill="#3c3c3c" style="mix-blend-mode:lighten"/><rect x="330.77" y="385.06" width="328.22" height="1.00" fill="#434343" style="mix-blend-mode:lighten"/><polygon points="88.12,332.3 89.40,332.3 92.72,379.30 84.80,379.30" fill="url(#gr70)" style="mix-blend-mode:lighten"/><polygon points="87.99,332.3 89.53,332.3 89.40,366.36 88.12,366.36" fill="url(#gr71)" style="mix-blend-mode:lighten"/><polygon points="95.47,332.3 97.14,332.3 101.27,379.30 91.34,379.30" fill="url(#gr70)" style="mix-blend-mode:lighten"/><polygon points="95.11,332.3 97.51,332.3 97.14,362.85 95.47,362.85" fill="url(#gr72)" style="mix-blend-mode:lighten"/><rect x="95.72" y="332.3" width="1.18" height="62.44" fill="url(#gr9)" style="mix-blend-mode:lighten"/><polygon points="100.21,332.3 101.74,332.3 103.74,379.30 98.21,379.30" fill="url(#gr70)" style="mix-blend-mode:lighten"/><polygon points="100.11,332.3 101.84,332.3 101.74,375.65 100.21,375.65" fill="url(#gr72)" style="mix-blend-mode:lighten"/><rect x="100.37" y="332.3" width="1.20" height="50.38" fill="url(#gr2)" style="mix-blend-mode:lighten"/><polygon points="119.88,332.3 122.54,332.3 126.21,379.30 116.21,379.30" fill="url(#gr70)" style="mix-blend-mode:lighten"/><polygon points="119.49,332.3 122.92,332.3 122.54,366.04 119.88,366.04" fill="url(#gr73)" style="mix-blend-mode:lighten"/><polygon points="125.04,332.3 126.03,332.3 127.99,379.30 123.07,379.30" fill="url(#gr70)" style="mix-blend-mode:lighten"/><polygon points="124.56,332.3 126.50,332.3 126.03,370.19 125.04,370.19" fill="url(#gr74)" style="mix-blend-mode:lighten"/><polygon points="129.27,332.3 130.51,332.3 134.89,379.30 124.90,379.30" fill="url(#gr70)" style="mix-blend-mode:lighten"/><polygon points="128.88,332.3 130.91,332.3 130.51,369.52 129.27,369.52" fill="url(#gr75)" style="mix-blend-mode:lighten"/><polygon points="146.72,332.3 149.19,332.3 151.22,379.30 144.69,379.30" fill="url(#gr70)" style="mix-blend-mode:lighten"/><polygon points="146.53,332.3 149.38,332.3 149.19,375.91 146.72,375.91" fill="url(#gr76)" style="mix-blend-mode:lighten"/><polygon points="151.35,332.3 152.90,332.3 155.34,379.30 148.90,379.30" fill="url(#gr70)" style="mix-blend-mode:lighten"/><polygon points="150.92,332.3 153.32,332.3 152.90,374.80 151.35,374.80" fill="url(#gr77)" style="mix-blend-mode:lighten"/><rect x="151.64" y="332.3" width="0.96" height="73.33" fill="url(#gr67)" style="mix-blend-mode:lighten"/><polygon points="168.69,332.3 169.87,332.3 171.49,379.30 167.06,379.30" fill="url(#gr70)" style="mix-blend-mode:lighten"/><polygon points="168.46,332.3 170.09,332.3 169.87,360.17 168.69,360.17" fill="url(#gr78)" style="mix-blend-mode:lighten"/><polygon points="172.08,332.3 173.15,332.3 176.44,379.30 168.79,379.30" fill="url(#gr70)" style="mix-blend-mode:lighten"/><polygon points="171.88,332.3 173.35,332.3 173.15,380.89 172.08,380.89" fill="url(#gr79)" style="mix-blend-mode:lighten"/><rect x="172.12" y="332.3" width="0.99" height="61.75" fill="url(#gr2)" style="mix-blend-mode:lighten"/><polygon points="176.66,332.3 178.11,332.3 181.09,379.30 173.68,379.30" fill="url(#gr70)" style="mix-blend-mode:lighten"/><polygon points="176.14,332.3 178.63,332.3 178.11,374.22 176.66,374.22" fill="url(#gr80)" style="mix-blend-mode:lighten"/><polygon points="190.53,332.3 191.58,332.3 196.38,379.30 185.73,379.30" fill="url(#gr70)" style="mix-blend-mode:lighten"/><polygon points="190.21,332.3 191.90,332.3 191.58,365.36 190.53,365.36" fill="url(#gr79)" style="mix-blend-mode:lighten"/><polygon points="205.52,332.3 206.53,332.3 211.29,379.30 200.76,379.30" fill="url(#gr70)" style="mix-blend-mode:lighten"/><polygon points="205.30,332.3 206.75,332.3 206.53,371.48 205.52,371.48" fill="url(#gr81)" style="mix-blend-mode:lighten"/><rect x="205.33" y="332.3" width="1.38" height="47.89" fill="url(#gr2)" style="mix-blend-mode:lighten"/><polygon points="208.12,332.3 211.04,332.3 213.40,379.30 205.76,379.30" fill="url(#gr70)" style="mix-blend-mode:lighten"/><polygon points="207.93,332.3 211.24,332.3 211.04,357.88 208.12,357.88" fill="url(#gr82)" style="mix-blend-mode:lighten"/><polygon points="215.57,332.3 217.16,332.3 219.80,379.30 212.94,379.30" fill="url(#gr70)" style="mix-blend-mode:lighten"/><polygon points="214.78,332.3 217.96,332.3 217.16,358.93 215.57,358.93" fill="url(#gr83)" style="mix-blend-mode:lighten"/><rect x="215.92" y="332.3" width="0.91" height="68.57" fill="url(#gr21)" style="mix-blend-mode:lighten"/><polygon points="231.42,332.3 233.06,332.3 234.76,379.30 229.71,379.30" fill="url(#gr70)" style="mix-blend-mode:lighten"/><polygon points="231.17,332.3 233.31,332.3 233.06,368.22 231.42,368.22" fill="url(#gr84)" style="mix-blend-mode:lighten"/><rect x="231.59" y="332.3" width="1.29" height="56.32" fill="url(#gr2)" style="mix-blend-mode:lighten"/><polygon points="235.57,332.3 237.29,332.3 239.24,379.30 233.62,379.30" fill="url(#gr70)" style="mix-blend-mode:lighten"/><polygon points="235.01,332.3 237.85,332.3 237.29,369.85 235.57,369.85" fill="url(#gr84)" style="mix-blend-mode:lighten"/><rect x="235.80" y="332.3" width="1.26" height="65.88" fill="url(#gr21)" style="mix-blend-mode:lighten"/><polygon points="248.45,332.3 249.72,332.3 252.38,379.30 245.79,379.30" fill="url(#gr70)" style="mix-blend-mode:lighten"/><polygon points="248.30,332.3 249.87,332.3 249.72,363.17 248.45,363.17" fill="url(#gr85)" style="mix-blend-mode:lighten"/><polygon points="255.47,332.3 257.81,332.3 261.40,379.30 251.87,379.30" fill="url(#gr70)" style="mix-blend-mode:lighten"/><polygon points="254.85,332.3 258.43,332.3 257.81,360.55 255.47,360.55" fill="url(#gr86)" style="mix-blend-mode:lighten"/><polygon points="265.99,332.3 268.09,332.3 269.27,379.30 264.81,379.30" fill="url(#gr70)" style="mix-blend-mode:lighten"/><polygon points="265.52,332.3 268.56,332.3 268.09,376.94 265.99,376.94" fill="url(#gr87)" style="mix-blend-mode:lighten"/><polygon points="273.31,332.3 276.26,332.3 279.29,379.30 270.28,379.30" fill="url(#gr70)" style="mix-blend-mode:lighten"/><polygon points="273.12,332.3 276.45,332.3 276.26,379.66 273.31,379.66" fill="url(#gr88)" style="mix-blend-mode:lighten"/><polygon points="281.19,332.3 283.66,332.3 284.85,379.30 280.01,379.30" fill="url(#gr70)" style="mix-blend-mode:lighten"/><polygon points="280.98,332.3 283.87,332.3 283.66,374.74 281.19,374.74" fill="url(#gr77)" style="mix-blend-mode:lighten"/><rect x="281.96" y="332.3" width="0.94" height="52.18" fill="url(#gr67)" style="mix-blend-mode:lighten"/><polygon points="289.82,332.3 291.01,332.3 295.08,379.30 285.74,379.30" fill="url(#gr70)" style="mix-blend-mode:lighten"/><polygon points="289.37,332.3 291.45,332.3 291.01,360.25 289.82,360.25" fill="url(#gr89)" style="mix-blend-mode:lighten"/><polygon points="297.68,332.3 298.61,332.3 301.91,379.30 294.38,379.30" fill="url(#gr70)" style="mix-blend-mode:lighten"/><polygon points="297.36,332.3 298.94,332.3 298.61,359.14 297.68,359.14" fill="url(#gr90)" style="mix-blend-mode:lighten"/><rect x="297.55" y="332.3" width="1.18" height="55.24" fill="url(#gr21)" style="mix-blend-mode:lighten"/><polygon points="303.90,332.3 306.32,332.3 310.41,379.30 299.81,379.30" fill="url(#gr70)" style="mix-blend-mode:lighten"/><polygon points="303.34,332.3 306.88,332.3 306.32,371.77 303.90,371.77" fill="url(#gr77)" style="mix-blend-mode:lighten"/><polygon points="307.22,332.3 309.25,332.3 310.97,379.30 305.49,379.30" fill="url(#gr70)" style="mix-blend-mode:lighten"/><polygon points="306.69,332.3 309.77,332.3 309.25,358.55 307.22,358.55" fill="url(#gr91)" style="mix-blend-mode:lighten"/><rect x="307.58" y="332.3" width="1.30" height="60.98" fill="url(#gr5)" style="mix-blend-mode:lighten"/><polygon points="313.80,332.3 315.19,332.3 318.66,379.30 310.33,379.30" fill="url(#gr70)" style="mix-blend-mode:lighten"/><polygon points="313.28,332.3 315.71,332.3 315.19,357.66 313.80,357.66" fill="url(#gr92)" style="mix-blend-mode:lighten"/><polygon points="318.99,332.3 320.73,332.3 323.75,379.30 315.97,379.30" fill="url(#gr70)" style="mix-blend-mode:lighten"/><polygon points="318.47,332.3 321.25,332.3 320.73,365.86 318.99,365.86" fill="url(#gr81)" style="mix-blend-mode:lighten"/><polygon points="334.80,332.3 337.71,332.3 339.27,379.30 333.25,379.30" fill="url(#gr70)" style="mix-blend-mode:lighten"/><polygon points="334.53,332.3 337.99,332.3 337.71,378.47 334.80,378.47" fill="url(#gr93)" style="mix-blend-mode:lighten"/><rect x="335.75" y="332.3" width="1.02" height="63.34" fill="url(#gr9)" style="mix-blend-mode:lighten"/><polygon points="338.98,332.3 341.12,332.3 343.79,379.30 336.31,379.30" fill="url(#gr70)" style="mix-blend-mode:lighten"/><polygon points="338.30,332.3 341.79,332.3 341.12,359.63 338.98,359.63" fill="url(#gr78)" style="mix-blend-mode:lighten"/><polygon points="345.06,332.3 346.18,332.3 349.24,379.30 342.00,379.30" fill="url(#gr70)" style="mix-blend-mode:lighten"/><polygon points="344.50,332.3 346.73,332.3 346.18,369.22 345.06,369.22" fill="url(#gr89)" style="mix-blend-mode:lighten"/><rect x="345.05" y="332.3" width="1.14" height="64.96" fill="url(#gr2)" style="mix-blend-mode:lighten"/><polygon points="352.79,332.3 354.15,332.3 358.26,379.30 348.68,379.30" fill="url(#gr70)" style="mix-blend-mode:lighten"/><polygon points="352.46,332.3 354.48,332.3 354.15,359.33 352.79,359.33" fill="url(#gr75)" style="mix-blend-mode:lighten"/><rect x="352.89" y="332.3" width="1.15" height="58.93" fill="url(#gr26)" style="mix-blend-mode:lighten"/><polygon points="358.03,332.3 360.46,332.3 362.44,379.30 356.05,379.30" fill="url(#gr70)" style="mix-blend-mode:lighten"/><polygon points="357.50,332.3 360.98,332.3 360.46,368.87 358.03,368.87" fill="url(#gr94)" style="mix-blend-mode:lighten"/><rect x="358.59" y="332.3" width="1.32" height="69.50" fill="url(#gr5)" style="mix-blend-mode:lighten"/><polygon points="365.81,332.3 368.46,332.3 369.75,379.30 364.52,379.30" fill="url(#gr70)" style="mix-blend-mode:lighten"/><polygon points="365.43,332.3 368.85,332.3 368.46,376.44 365.81,376.44" fill="url(#gr86)" style="mix-blend-mode:lighten"/><polygon points="375.00,332.3 376.75,332.3 381.06,379.30 370.69,379.30" fill="url(#gr70)" style="mix-blend-mode:lighten"/><polygon points="374.16,332.3 377.59,332.3 376.75,369.58 375.00,369.58" fill="url(#gr95)" style="mix-blend-mode:lighten"/><polygon points="381.50,332.3 382.69,332.3 384.75,379.30 379.45,379.30" fill="url(#gr70)" style="mix-blend-mode:lighten"/><polygon points="381.32,332.3 382.87,332.3 382.69,359.93 381.50,359.93" fill="url(#gr79)" style="mix-blend-mode:lighten"/><polygon points="402.26,332.3 403.59,332.3 407.98,379.30 397.87,379.30" fill="url(#gr70)" style="mix-blend-mode:lighten"/><polygon points="402.09,332.3 403.76,332.3 403.59,358.71 402.26,358.71" fill="url(#gr86)" style="mix-blend-mode:lighten"/><polygon points="409.67,332.3 411.62,332.3 415.43,379.30 405.86,379.30" fill="url(#gr70)" style="mix-blend-mode:lighten"/><polygon points="409.24,332.3 412.05,332.3 411.62,366.53 409.67,366.53" fill="url(#gr96)" style="mix-blend-mode:lighten"/><rect x="410.00" y="332.3" width="1.29" height="66.44" fill="url(#gr14)" style="mix-blend-mode:lighten"/><polygon points="420.23,332.3 421.38,332.3 426.05,379.30 415.56,379.30" fill="url(#gr70)" style="mix-blend-mode:lighten"/><polygon points="419.80,332.3 421.80,332.3 421.38,372.85 420.23,372.85" fill="url(#gr79)" style="mix-blend-mode:lighten"/><polygon points="423.95,332.3 426.56,332.3 429.08,379.30 421.43,379.30" fill="url(#gr70)" style="mix-blend-mode:lighten"/><polygon points="423.51,332.3 427.00,332.3 426.56,380.40 423.95,380.40" fill="url(#gr78)" style="mix-blend-mode:lighten"/><polygon points="434.86,332.3 436.63,332.3 438.59,379.30 432.90,379.30" fill="url(#gr70)" style="mix-blend-mode:lighten"/><polygon points="434.46,332.3 437.03,332.3 436.63,375.17 434.86,375.17" fill="url(#gr97)" style="mix-blend-mode:lighten"/><rect x="435.28" y="332.3" width="0.93" height="56.95" fill="url(#gr23)" style="mix-blend-mode:lighten"/><polygon points="448.19,332.3 450.06,332.3 451.55,379.30 446.70,379.30" fill="url(#gr70)" style="mix-blend-mode:lighten"/><polygon points="447.72,332.3 450.53,332.3 450.06,367.06 448.19,367.06" fill="url(#gr85)" style="mix-blend-mode:lighten"/><polygon points="461.37,332.3 463.36,332.3 467.85,379.30 456.87,379.30" fill="url(#gr70)" style="mix-blend-mode:lighten"/><polygon points="461.05,332.3 463.67,332.3 463.36,379.82 461.37,379.82" fill="url(#gr78)" style="mix-blend-mode:lighten"/><polygon points="472.71,332.3 473.57,332.3 476.26,379.30 470.02,379.30" fill="url(#gr70)" style="mix-blend-mode:lighten"/><polygon points="472.38,332.3 473.90,332.3 473.57,370.53 472.71,370.53" fill="url(#gr98)" style="mix-blend-mode:lighten"/><polygon points="485.10,332.3 486.72,332.3 488.11,379.30 483.71,379.30" fill="url(#gr70)" style="mix-blend-mode:lighten"/><polygon points="484.71,332.3 487.11,332.3 486.72,359.86 485.10,359.86" fill="url(#gr99)" style="mix-blend-mode:lighten"/><rect x="485.29" y="332.3" width="1.25" height="59.25" fill="url(#gr5)" style="mix-blend-mode:lighten"/><polygon points="488.70,332.3 490.40,332.3 493.70,379.30 485.39,379.30" fill="url(#gr70)" style="mix-blend-mode:lighten"/><polygon points="488.38,332.3 490.72,332.3 490.40,375.16 488.70,375.16" fill="url(#gr100)" style="mix-blend-mode:lighten"/><rect x="489.07" y="332.3" width="0.96" height="48.53" fill="url(#gr9)" style="mix-blend-mode:lighten"/><polygon points="497.49,332.3 498.51,332.3 501.70,379.30 494.30,379.30" fill="url(#gr70)" style="mix-blend-mode:lighten"/><polygon points="497.22,332.3 498.78,332.3 498.51,368.55 497.49,368.55" fill="url(#gr99)" style="mix-blend-mode:lighten"/><polygon points="501.60,332.3 503.56,332.3 506.02,379.30 499.14,379.30" fill="url(#gr70)" style="mix-blend-mode:lighten"/><polygon points="500.80,332.3 504.36,332.3 503.56,364.60 501.60,364.60" fill="url(#gr94)" style="mix-blend-mode:lighten"/><polygon points="513.07,332.3 515.53,332.3 517.41,379.30 511.20,379.30" fill="url(#gr70)" style="mix-blend-mode:lighten"/><polygon points="512.73,332.3 515.87,332.3 515.53,368.06 513.07,368.06" fill="url(#gr101)" style="mix-blend-mode:lighten"/><polygon points="518.52,332.3 520.19,332.3 522.67,379.30 516.04,379.30" fill="url(#gr70)" style="mix-blend-mode:lighten"/><polygon points="518.32,332.3 520.39,332.3 520.19,368.22 518.52,368.22" fill="url(#gr94)" style="mix-blend-mode:lighten"/><polygon points="526.21,332.3 528.27,332.3 532.56,379.30 521.91,379.30" fill="url(#gr70)" style="mix-blend-mode:lighten"/><polygon points="525.67,332.3 528.80,332.3 528.27,373.41 526.21,373.41" fill="url(#gr78)" style="mix-blend-mode:lighten"/><polygon points="537.92,332.3 539.60,332.3 543.25,379.30 534.27,379.30" fill="url(#gr70)" style="mix-blend-mode:lighten"/><polygon points="537.34,332.3 540.18,332.3 539.60,375.79 537.92,375.79" fill="url(#gr102)" style="mix-blend-mode:lighten"/><rect x="538.12" y="332.3" width="1.28" height="54.27" fill="url(#gr21)" style="mix-blend-mode:lighten"/><polygon points="547.91,332.3 549.95,332.3 553.81,379.30 544.06,379.30" fill="url(#gr70)" style="mix-blend-mode:lighten"/><polygon points="547.79,332.3 550.07,332.3 549.95,362.02 547.91,362.02" fill="url(#gr72)" style="mix-blend-mode:lighten"/><polygon points="558.65,332.3 561.03,332.3 563.80,379.30 555.87,379.30" fill="url(#gr70)" style="mix-blend-mode:lighten"/><polygon points="558.36,332.3 561.32,332.3 561.03,375.22 558.65,375.22" fill="url(#gr103)" style="mix-blend-mode:lighten"/><polygon points="567.08,332.3 568.46,332.3 571.76,379.30 563.79,379.30" fill="url(#gr70)" style="mix-blend-mode:lighten"/><polygon points="566.92,332.3 568.62,332.3 568.46,365.09 567.08,365.09" fill="url(#gr83)" style="mix-blend-mode:lighten"/><polygon points="575.90,332.3 578.28,332.3 579.59,379.30 574.58,379.30" fill="url(#gr70)" style="mix-blend-mode:lighten"/><polygon points="575.70,332.3 578.47,332.3 578.28,373.22 575.90,373.22" fill="url(#gr104)" style="mix-blend-mode:lighten"/><polygon points="581.24,332.3 583.54,332.3 584.65,379.30 580.12,379.30" fill="url(#gr70)" style="mix-blend-mode:lighten"/><polygon points="581.10,332.3 583.67,332.3 583.54,370.97 581.24,370.97" fill="url(#gr71)" style="mix-blend-mode:lighten"/><rect x="581.76" y="332.3" width="1.25" height="70.20" fill="url(#gr9)" style="mix-blend-mode:lighten"/><polygon points="586.64,332.3 587.93,332.3 589.81,379.30 584.77,379.30" fill="url(#gr70)" style="mix-blend-mode:lighten"/><polygon points="586.29,332.3 588.29,332.3 587.93,370.20 586.64,370.20" fill="url(#gr105)" style="mix-blend-mode:lighten"/><rect x="586.60" y="332.3" width="1.37" height="53.99" fill="url(#gr26)" style="mix-blend-mode:lighten"/><polygon points="594.12,332.3 595.42,332.3 596.86,379.30 592.67,379.30" fill="url(#gr70)" style="mix-blend-mode:lighten"/><polygon points="593.97,332.3 595.56,332.3 595.42,375.04 594.12,375.04" fill="url(#gr106)" style="mix-blend-mode:lighten"/><polygon points="601.34,332.3 602.79,332.3 605.72,379.30 598.41,379.30" fill="url(#gr70)" style="mix-blend-mode:lighten"/><polygon points="601.13,332.3 603.00,332.3 602.79,374.08 601.34,374.08" fill="url(#gr107)" style="mix-blend-mode:lighten"/><rect x="601.41" y="332.3" width="1.31" height="62.96" fill="url(#gr2)" style="mix-blend-mode:lighten"/><polygon points="607.06,332.3 609.16,332.3 611.30,379.30 604.92,379.30" fill="url(#gr70)" style="mix-blend-mode:lighten"/><polygon points="606.32,332.3 609.90,332.3 609.16,362.65 607.06,362.65" fill="url(#gr75)" style="mix-blend-mode:lighten"/><polygon points="619.09,332.3 621.72,332.3 625.49,379.30 615.32,379.30" fill="url(#gr70)" style="mix-blend-mode:lighten"/><polygon points="618.70,332.3 622.11,332.3 621.72,361.41 619.09,361.41" fill="url(#gr108)" style="mix-blend-mode:lighten"/><polygon points="623.89,332.3 625.19,332.3 629.48,379.30 619.59,379.30" fill="url(#gr70)" style="mix-blend-mode:lighten"/><polygon points="623.44,332.3 625.64,332.3 625.19,374.55 623.89,374.55" fill="url(#gr109)" style="mix-blend-mode:lighten"/><polygon points="630.04,332.3 630.87,332.3 632.67,379.30 628.23,379.30" fill="url(#gr70)" style="mix-blend-mode:lighten"/><polygon points="629.65,332.3 631.26,332.3 630.87,365.77 630.04,365.77" fill="url(#gr81)" style="mix-blend-mode:lighten"/><rect x="629.83" y="332.3" width="1.25" height="51.94" fill="url(#gr27)" style="mix-blend-mode:lighten"/><polygon points="640.23,332.3 642.07,332.3 644.41,379.30 637.89,379.30" fill="url(#gr70)" style="mix-blend-mode:lighten"/><polygon points="639.69,332.3 642.62,332.3 642.07,368.52 640.23,368.52" fill="url(#gr110)" style="mix-blend-mode:lighten"/><rect x="640.64" y="332.3" width="1.03" height="47.45" fill="url(#gr5)" style="mix-blend-mode:lighten"/><polygon points="644.88,332.3 646.52,332.3 648.79,379.30 642.61,379.30" fill="url(#gr70)" style="mix-blend-mode:lighten"/><polygon points="644.35,332.3 647.05,332.3 646.52,360.01 644.88,360.01" fill="url(#gr77)" style="mix-blend-mode:lighten"/><polygon points="651.42,332.3 653.53,332.3 656.24,379.30 648.71,379.30" fill="url(#gr70)" style="mix-blend-mode:lighten"/><polygon points="651.09,332.3 653.86,332.3 653.53,373.92 651.42,373.92" fill="url(#gr87)" style="mix-blend-mode:lighten"/><polygon points="662.44,332.3 665.13,332.3 668.57,379.30 659.00,379.30" fill="url(#gr70)" style="mix-blend-mode:lighten"/><polygon points="662.22,332.3 665.35,332.3 665.13,362.68 662.44,362.68" fill="url(#gr111)" style="mix-blend-mode:lighten"/><polygon points="678.26,332.3 680.76,332.3 683.45,379.30 675.58,379.30" fill="url(#gr70)" style="mix-blend-mode:lighten"/><polygon points="677.89,332.3 681.13,332.3 680.76,373.90 678.26,373.90" fill="url(#gr77)" style="mix-blend-mode:lighten"/><polygon points="82.35,332.3 83.65,332.3 87.43,379.30 78.57,379.30" fill="url(#gr112)" style="mix-blend-mode:lighten"/><polygon points="81.62,332.3 84.38,332.3 83.65,376.67 82.35,376.67" fill="url(#gr113)" style="mix-blend-mode:lighten"/><rect x="82.45" y="332.3" width="1.11" height="156.00" fill="url(#gr64)" style="mix-blend-mode:lighten"/><polygon points="91.65,332.3 92.95,332.3 96.78,379.30 87.82,379.30" fill="url(#gr112)" style="mix-blend-mode:lighten"/><polygon points="91.32,332.3 93.28,332.3 92.95,380.61 91.65,380.61" fill="url(#gr60)" style="mix-blend-mode:lighten"/><rect x="91.65" y="332.3" width="1.30" height="156.00" fill="url(#gr9)" style="mix-blend-mode:lighten"/><polygon points="104.85,332.3 106.15,332.3 109.10,379.30 101.90,379.30" fill="url(#gr112)" style="mix-blend-mode:lighten"/><polygon points="104.74,332.3 106.26,332.3 106.15,377.04 104.85,377.04" fill="url(#gr62)" style="mix-blend-mode:lighten"/><rect x="104.94" y="332.3" width="1.12" height="156.00" fill="url(#gr26)" style="mix-blend-mode:lighten"/><polygon points="112.85,332.3 114.15,332.3 116.98,379.30 110.02,379.30" fill="url(#gr112)" style="mix-blend-mode:lighten"/><polygon points="112.05,332.3 114.95,332.3 114.15,378.48 112.85,378.48" fill="url(#gr65)" style="mix-blend-mode:lighten"/><rect x="113.02" y="332.3" width="0.97" height="156.00" fill="url(#gr64)" style="mix-blend-mode:lighten"/><polygon points="135.35,332.3 136.65,332.3 138.54,379.30 133.46,379.30" fill="url(#gr112)" style="mix-blend-mode:lighten"/><polygon points="134.90,332.3 137.10,332.3 136.65,380.80 135.35,380.80" fill="url(#gr59)" style="mix-blend-mode:lighten"/><rect x="135.44" y="332.3" width="1.12" height="156.00" fill="url(#gr64)" style="mix-blend-mode:lighten"/><polygon points="142.05,332.3 143.35,332.3 144.74,379.30 140.66,379.30" fill="url(#gr112)" style="mix-blend-mode:lighten"/><polygon points="141.70,332.3 143.70,332.3 143.35,379.19 142.05,379.19" fill="url(#gr59)" style="mix-blend-mode:lighten"/><rect x="142.12" y="332.3" width="1.16" height="156.00" fill="url(#gr26)" style="mix-blend-mode:lighten"/><polygon points="156.55,332.3 157.85,332.3 160.03,379.30 154.37,379.30" fill="url(#gr112)" style="mix-blend-mode:lighten"/><polygon points="156.29,332.3 158.11,332.3 157.85,376.66 156.55,376.66" fill="url(#gr65)" style="mix-blend-mode:lighten"/><rect x="156.64" y="332.3" width="1.12" height="156.00" fill="url(#gr114)" style="mix-blend-mode:lighten"/><polygon points="163.25,332.3 164.55,332.3 167.94,379.30 159.86,379.30" fill="url(#gr112)" style="mix-blend-mode:lighten"/><polygon points="163.07,332.3 164.73,332.3 164.55,379.48 163.25,379.48" fill="url(#gr62)" style="mix-blend-mode:lighten"/><rect x="163.30" y="332.3" width="1.20" height="156.00" fill="url(#gr58)" style="mix-blend-mode:lighten"/><polygon points="183.15,332.3 184.45,332.3 186.15,379.30 181.45,379.30" fill="url(#gr112)" style="mix-blend-mode:lighten"/><polygon points="183.01,332.3 184.59,332.3 184.45,376.47 183.15,376.47" fill="url(#gr65)" style="mix-blend-mode:lighten"/><rect x="183.34" y="332.3" width="0.91" height="156.00" fill="url(#gr26)" style="mix-blend-mode:lighten"/><polygon points="199.05,332.3 200.35,332.3 202.50,379.30 196.90,379.30" fill="url(#gr112)" style="mix-blend-mode:lighten"/><polygon points="198.83,332.3 200.57,332.3 200.35,378.67 199.05,378.67" fill="url(#gr57)" style="mix-blend-mode:lighten"/><rect x="199.08" y="332.3" width="1.23" height="156.00" fill="url(#gr67)" style="mix-blend-mode:lighten"/><polygon points="218.95,332.3 220.25,332.3 223.94,379.30 215.26,379.30" fill="url(#gr112)" style="mix-blend-mode:lighten"/><polygon points="218.71,332.3 220.49,332.3 220.25,379.48 218.95,379.48" fill="url(#gr59)" style="mix-blend-mode:lighten"/><rect x="219.04" y="332.3" width="1.13" height="156.00" fill="url(#gr9)" style="mix-blend-mode:lighten"/><polygon points="226.85,332.3 228.15,332.3 231.29,379.30 223.71,379.30" fill="url(#gr112)" style="mix-blend-mode:lighten"/><polygon points="226.46,332.3 228.54,332.3 228.15,380.42 226.85,380.42" fill="url(#gr62)" style="mix-blend-mode:lighten"/><rect x="226.95" y="332.3" width="1.10" height="156.00" fill="url(#gr26)" style="mix-blend-mode:lighten"/><polygon points="242.85,332.3 244.15,332.3 247.79,379.30 239.21,379.30" fill="url(#gr112)" style="mix-blend-mode:lighten"/><polygon points="242.02,332.3 244.98,332.3 244.15,377.50 242.85,377.50" fill="url(#gr62)" style="mix-blend-mode:lighten"/><rect x="243.04" y="332.3" width="0.93" height="156.00" fill="url(#gr58)" style="mix-blend-mode:lighten"/><polygon points="253.35,332.3 254.65,332.3 258.11,379.30 249.89,379.30" fill="url(#gr112)" style="mix-blend-mode:lighten"/><polygon points="253.11,332.3 254.89,332.3 254.65,377.49 253.35,377.49" fill="url(#gr62)" style="mix-blend-mode:lighten"/><rect x="253.35" y="332.3" width="1.29" height="156.00" fill="url(#gr58)" style="mix-blend-mode:lighten"/><polygon points="261.35,332.3 262.65,332.3 265.79,379.30 258.21,379.30" fill="url(#gr112)" style="mix-blend-mode:lighten"/><polygon points="260.75,332.3 263.25,332.3 262.65,379.44 261.35,379.44" fill="url(#gr62)" style="mix-blend-mode:lighten"/><rect x="261.54" y="332.3" width="0.92" height="156.00" fill="url(#gr64)" style="mix-blend-mode:lighten"/><polygon points="270.65,332.3 271.95,332.3 273.42,379.30 269.18,379.30" fill="url(#gr112)" style="mix-blend-mode:lighten"/><polygon points="270.18,332.3 272.42,332.3 271.95,378.22 270.65,378.22" fill="url(#gr60)" style="mix-blend-mode:lighten"/><rect x="270.65" y="332.3" width="1.29" height="156.00" fill="url(#gr9)" style="mix-blend-mode:lighten"/><polygon points="278.65,332.3 279.95,332.3 282.78,379.30 275.82,379.30" fill="url(#gr112)" style="mix-blend-mode:lighten"/><polygon points="278.27,332.3 280.33,332.3 279.95,377.95 278.65,377.95" fill="url(#gr113)" style="mix-blend-mode:lighten"/><rect x="278.81" y="332.3" width="0.97" height="156.00" fill="url(#gr63)" style="mix-blend-mode:lighten"/><polygon points="285.65,332.3 286.95,332.3 289.71,379.30 282.89,379.30" fill="url(#gr112)" style="mix-blend-mode:lighten"/><polygon points="285.17,332.3 287.43,332.3 286.95,378.80 285.65,378.80" fill="url(#gr65)" style="mix-blend-mode:lighten"/><rect x="285.81" y="332.3" width="0.98" height="156.00" fill="url(#gr26)" style="mix-blend-mode:lighten"/><polygon points="301.55,332.3 302.85,332.3 304.28,379.30 300.12,379.30" fill="url(#gr112)" style="mix-blend-mode:lighten"/><polygon points="300.91,332.3 303.49,332.3 302.85,376.69 301.55,376.69" fill="url(#gr65)" style="mix-blend-mode:lighten"/><rect x="301.66" y="332.3" width="1.09" height="156.00" fill="url(#gr26)" style="mix-blend-mode:lighten"/><polygon points="325.35,332.3 326.65,332.3 329.90,379.30 322.10,379.30" fill="url(#gr112)" style="mix-blend-mode:lighten"/><polygon points="324.62,332.3 327.38,332.3 326.65,379.40 325.35,379.40" fill="url(#gr59)" style="mix-blend-mode:lighten"/><rect x="325.54" y="332.3" width="0.92" height="156.00" fill="url(#gr58)" style="mix-blend-mode:lighten"/><polygon points="330.75,332.3 332.05,332.3 333.49,379.30 329.31,379.30" fill="url(#gr112)" style="mix-blend-mode:lighten"/><polygon points="330.03,332.3 332.77,332.3 332.05,377.04 330.75,377.04" fill="url(#gr113)" style="mix-blend-mode:lighten"/><rect x="330.77" y="332.3" width="1.25" height="156.00" fill="url(#gr9)" style="mix-blend-mode:lighten"/><polygon points="371.85,332.3 373.15,332.3 376.62,379.30 368.38,379.30" fill="url(#gr112)" style="mix-blend-mode:lighten"/><polygon points="371.46,332.3 373.54,332.3 373.15,376.73 371.85,376.73" fill="url(#gr115)" style="mix-blend-mode:lighten"/><rect x="371.87" y="332.3" width="1.27" height="156.00" fill="url(#gr58)" style="mix-blend-mode:lighten"/><polygon points="386.35,332.3 387.65,332.3 389.48,379.30 384.52,379.30" fill="url(#gr112)" style="mix-blend-mode:lighten"/><polygon points="386.22,332.3 387.78,332.3 387.65,376.86 386.35,376.86" fill="url(#gr62)" style="mix-blend-mode:lighten"/><rect x="386.51" y="332.3" width="0.98" height="156.00" fill="url(#gr26)" style="mix-blend-mode:lighten"/><polygon points="397.05,332.3 398.35,332.3 401.04,379.30 394.36,379.30" fill="url(#gr112)" style="mix-blend-mode:lighten"/><polygon points="396.47,332.3 398.93,332.3 398.35,377.14 397.05,377.14" fill="url(#gr113)" style="mix-blend-mode:lighten"/><rect x="397.22" y="332.3" width="0.96" height="156.00" fill="url(#gr67)" style="mix-blend-mode:lighten"/><polygon points="414.35,332.3 415.65,332.3 418.19,379.30 411.81,379.30" fill="url(#gr112)" style="mix-blend-mode:lighten"/><polygon points="413.82,332.3 416.18,332.3 415.65,378.84 414.35,378.84" fill="url(#gr62)" style="mix-blend-mode:lighten"/><rect x="414.43" y="332.3" width="1.15" height="156.00" fill="url(#gr9)" style="mix-blend-mode:lighten"/><polygon points="428.95,332.3 430.25,332.3 433.82,379.30 425.38,379.30" fill="url(#gr112)" style="mix-blend-mode:lighten"/><polygon points="428.70,332.3 430.50,332.3 430.25,377.98 428.95,377.98" fill="url(#gr115)" style="mix-blend-mode:lighten"/><rect x="429.07" y="332.3" width="1.06" height="156.00" fill="url(#gr58)" style="mix-blend-mode:lighten"/><polygon points="440.85,332.3 442.15,332.3 444.46,379.30 438.54,379.30" fill="url(#gr112)" style="mix-blend-mode:lighten"/><polygon points="440.34,332.3 442.66,332.3 442.15,381.00 440.85,381.00" fill="url(#gr113)" style="mix-blend-mode:lighten"/><rect x="440.98" y="332.3" width="1.05" height="156.00" fill="url(#gr58)" style="mix-blend-mode:lighten"/><polygon points="456.75,332.3 458.05,332.3 460.11,379.30 454.69,379.30" fill="url(#gr112)" style="mix-blend-mode:lighten"/><polygon points="456.12,332.3 458.68,332.3 458.05,380.84 456.75,380.84" fill="url(#gr115)" style="mix-blend-mode:lighten"/><rect x="456.80" y="332.3" width="1.20" height="156.00" fill="url(#gr67)" style="mix-blend-mode:lighten"/><polygon points="467.35,332.3 468.65,332.3 470.46,379.30 465.54,379.30" fill="url(#gr112)" style="mix-blend-mode:lighten"/><polygon points="466.66,332.3 469.34,332.3 468.65,379.80 467.35,379.80" fill="url(#gr57)" style="mix-blend-mode:lighten"/><rect x="467.38" y="332.3" width="1.24" height="156.00" fill="url(#gr67)" style="mix-blend-mode:lighten"/><polygon points="480.65,332.3 481.95,332.3 485.15,379.30 477.45,379.30" fill="url(#gr112)" style="mix-blend-mode:lighten"/><polygon points="479.98,332.3 482.62,332.3 481.95,376.86 480.65,376.86" fill="url(#gr57)" style="mix-blend-mode:lighten"/><rect x="480.78" y="332.3" width="1.04" height="156.00" fill="url(#gr63)" style="mix-blend-mode:lighten"/><polygon points="494.65,332.3 495.95,332.3 498.74,379.30 491.86,379.30" fill="url(#gr112)" style="mix-blend-mode:lighten"/><polygon points="494.10,332.3 496.50,332.3 495.95,381.09 494.65,381.09" fill="url(#gr65)" style="mix-blend-mode:lighten"/><rect x="494.65" y="332.3" width="1.30" height="156.00" fill="url(#gr63)" style="mix-blend-mode:lighten"/><polygon points="509.25,332.3 510.55,332.3 512.26,379.30 507.54,379.30" fill="url(#gr112)" style="mix-blend-mode:lighten"/><polygon points="508.52,332.3 511.28,332.3 510.55,379.58 509.25,379.58" fill="url(#gr57)" style="mix-blend-mode:lighten"/><rect x="509.34" y="332.3" width="1.13" height="156.00" fill="url(#gr67)" style="mix-blend-mode:lighten"/><polygon points="531.75,332.3 533.05,332.3 535.97,379.30 528.83,379.30" fill="url(#gr112)" style="mix-blend-mode:lighten"/><polygon points="531.55,332.3 533.25,332.3 533.05,380.20 531.75,380.20" fill="url(#gr115)" style="mix-blend-mode:lighten"/><rect x="531.89" y="332.3" width="1.03" height="156.00" fill="url(#gr67)" style="mix-blend-mode:lighten"/><polygon points="543.75,332.3 545.05,332.3 548.54,379.30 540.26,379.30" fill="url(#gr112)" style="mix-blend-mode:lighten"/><polygon points="543.19,332.3 545.61,332.3 545.05,377.26 543.75,377.26" fill="url(#gr60)" style="mix-blend-mode:lighten"/><rect x="543.90" y="332.3" width="1.01" height="156.00" fill="url(#gr114)" style="mix-blend-mode:lighten"/><polygon points="551.65,332.3 552.95,332.3 556.42,379.30 548.18,379.30" fill="url(#gr112)" style="mix-blend-mode:lighten"/><polygon points="551.28,332.3 553.32,332.3 552.95,379.77 551.65,379.77" fill="url(#gr113)" style="mix-blend-mode:lighten"/><rect x="551.74" y="332.3" width="1.12" height="156.00" fill="url(#gr26)" style="mix-blend-mode:lighten"/><polygon points="562.35,332.3 563.65,332.3 565.00,379.30 561.00,379.30" fill="url(#gr112)" style="mix-blend-mode:lighten"/><polygon points="562.00,332.3 564.00,332.3 563.65,376.31 562.35,376.31" fill="url(#gr115)" style="mix-blend-mode:lighten"/><rect x="562.49" y="332.3" width="1.01" height="156.00" fill="url(#gr67)" style="mix-blend-mode:lighten"/><polygon points="571.55,332.3 572.85,332.3 575.99,379.30 568.41,379.30" fill="url(#gr112)" style="mix-blend-mode:lighten"/><polygon points="570.71,332.3 573.69,332.3 572.85,379.49 571.55,379.49" fill="url(#gr115)" style="mix-blend-mode:lighten"/><rect x="571.65" y="332.3" width="1.09" height="156.00" fill="url(#gr26)" style="mix-blend-mode:lighten"/><polygon points="590.15,332.3 591.45,332.3 593.85,379.30 587.75,379.30" fill="url(#gr112)" style="mix-blend-mode:lighten"/><polygon points="589.51,332.3 592.09,332.3 591.45,380.58 590.15,380.58" fill="url(#gr57)" style="mix-blend-mode:lighten"/><rect x="590.27" y="332.3" width="1.06" height="156.00" fill="url(#gr67)" style="mix-blend-mode:lighten"/><polygon points="612.65,332.3 613.95,332.3 617.01,379.30 609.59,379.30" fill="url(#gr112)" style="mix-blend-mode:lighten"/><polygon points="612.32,332.3 614.28,332.3 613.95,380.01 612.65,380.01" fill="url(#gr60)" style="mix-blend-mode:lighten"/><rect x="612.69" y="332.3" width="1.21" height="156.00" fill="url(#gr26)" style="mix-blend-mode:lighten"/><polygon points="627.25,332.3 628.55,332.3 630.31,379.30 625.49,379.30" fill="url(#gr112)" style="mix-blend-mode:lighten"/><polygon points="626.42,332.3 629.38,332.3 628.55,377.32 627.25,377.32" fill="url(#gr59)" style="mix-blend-mode:lighten"/><rect x="627.37" y="332.3" width="1.07" height="156.00" fill="url(#gr9)" style="mix-blend-mode:lighten"/><polygon points="636.55,332.3 637.85,332.3 640.89,379.30 633.51,379.30" fill="url(#gr112)" style="mix-blend-mode:lighten"/><polygon points="636.31,332.3 638.09,332.3 637.85,379.95 636.55,379.95" fill="url(#gr60)" style="mix-blend-mode:lighten"/><rect x="636.74" y="332.3" width="0.92" height="156.00" fill="url(#gr114)" style="mix-blend-mode:lighten"/><polygon points="648.55,332.3 649.85,332.3 653.26,379.30 645.14,379.30" fill="url(#gr112)" style="mix-blend-mode:lighten"/><polygon points="648.38,332.3 650.02,332.3 649.85,376.48 648.55,376.48" fill="url(#gr60)" style="mix-blend-mode:lighten"/><rect x="648.64" y="332.3" width="1.12" height="156.00" fill="url(#gr58)" style="mix-blend-mode:lighten"/><polygon points="659.15,332.3 660.45,332.3 663.40,379.30 656.20,379.30" fill="url(#gr112)" style="mix-blend-mode:lighten"/><polygon points="658.41,332.3 661.19,332.3 660.45,378.16 659.15,378.16" fill="url(#gr113)" style="mix-blend-mode:lighten"/><rect x="659.30" y="332.3" width="0.99" height="156.00" fill="url(#gr9)" style="mix-blend-mode:lighten"/><polygon points="669.75,332.3 671.05,332.3 673.73,379.30 667.07,379.30" fill="url(#gr112)" style="mix-blend-mode:lighten"/><polygon points="669.63,332.3 671.17,332.3 671.05,377.11 669.75,377.11" fill="url(#gr115)" style="mix-blend-mode:lighten"/><rect x="669.83" y="332.3" width="1.14" height="156.00" fill="url(#gr26)" style="mix-blend-mode:lighten"/><polygon points="684.35,332.3 685.65,332.3 688.68,379.30 681.32,379.30" fill="url(#gr112)" style="mix-blend-mode:lighten"/><polygon points="683.63,332.3 686.37,332.3 685.65,378.02 684.35,378.02" fill="url(#gr113)" style="mix-blend-mode:lighten"/><rect x="684.37" y="332.3" width="1.25" height="156.00" fill="url(#gr58)" style="mix-blend-mode:lighten"/><polygon points="610.80,332.3 615.80,332.3 614.80,412.30 611.80,412.30" fill="url(#gr116)" style="mix-blend-mode:lighten"/><rect x="612.05" y="332.3" width="2.50" height="156.00" fill="url(#gr67)" style="mix-blend-mode:lighten"/></g><rect x="79.60" y="240.30" width="612.90" height="1.20" fill="#c878b4" opacity="0.75"/><rect x="79.60" y="306.00" width="612.90" height="1.60" fill="#aadcdc" opacity="0.6"/><rect x="79.60" y="307.60" width="612.90" height="4.10" fill="#a0be78" opacity="0.75"/><rect x="79.60" y="311.90" width="612.90" height="1.30" fill="#b47800" opacity="0.5"/><rect x="79.60" y="405.80" width="612.90" height="0.80" fill="#a0be78" opacity="0.7"/><rect x="79.60" y="414.30" width="110.40" height="1.00" fill="#a0be78" opacity="0.6"/><rect x="79.60" y="456.30" width="612.90" height="3.00" fill="#a0b48c" opacity="0.6"/><rect x="79.60" y="478.30" width="612.90" height="4.00" fill="#d2f096" opacity="0.35"/><line x1="74.30" y1="126.50" x2="708.30" y2="126.50" stroke="#3a3a3a" stroke-width="1"/><line x1="74.30" y1="157.50" x2="708.30" y2="157.50" stroke="#3a3a3a" stroke-width="1"/><line x1="79.60" y1="126.50" x2="79.60" y2="157.50" stroke="#3a3a3a" stroke-width="1"/><line x1="703.60" y1="126.50" x2="703.60" y2="157.50" stroke="#3a3a3a" stroke-width="1"/><line x1="79.60" y1="126.50" x2="79.60" y2="166.30" stroke="#505050" stroke-width="0.9"/><line x1="90.00" y1="126.50" x2="90.00" y2="129.30" stroke="#505050" stroke-width="0.8"/><line x1="90.00" y1="154.30" x2="90.00" y2="157.50" stroke="#505050" stroke-width="0.8"/><line x1="90.00" y1="163.30" x2="90.00" y2="166.30" stroke="#505050" stroke-width="0.8"/><line x1="100.40" y1="126.50" x2="100.40" y2="129.30" stroke="#505050" stroke-width="0.8"/><line x1="100.40" y1="154.30" x2="100.40" y2="157.50" stroke="#505050" stroke-width="0.8"/><line x1="100.40" y1="163.30" x2="100.40" y2="166.30" stroke="#505050" stroke-width="0.8"/><line x1="110.80" y1="126.50" x2="110.80" y2="129.30" stroke="#505050" stroke-width="0.8"/><line x1="110.80" y1="154.30" x2="110.80" y2="157.50" stroke="#505050" stroke-width="0.8"/><line x1="110.80" y1="163.30" x2="110.80" y2="166.30" stroke="#505050" stroke-width="0.8"/><line x1="121.20" y1="126.50" x2="121.20" y2="129.30" stroke="#505050" stroke-width="0.8"/><line x1="121.20" y1="154.30" x2="121.20" y2="157.50" stroke="#505050" stroke-width="0.8"/><line x1="121.20" y1="163.30" x2="121.20" y2="166.30" stroke="#505050" stroke-width="0.8"/><line x1="131.60" y1="126.50" x2="131.60" y2="129.30" stroke="#505050" stroke-width="0.8"/><line x1="131.60" y1="154.30" x2="131.60" y2="157.50" stroke="#505050" stroke-width="0.8"/><line x1="131.60" y1="163.30" x2="131.60" y2="166.30" stroke="#505050" stroke-width="0.8"/><line x1="142.00" y1="126.50" x2="142.00" y2="166.30" stroke="#505050" stroke-width="0.9"/><line x1="152.40" y1="126.50" x2="152.40" y2="129.30" stroke="#505050" stroke-width="0.8"/><line x1="152.40" y1="154.30" x2="152.40" y2="157.50" stroke="#505050" stroke-width="0.8"/><line x1="152.40" y1="163.30" x2="152.40" y2="166.30" stroke="#505050" stroke-width="0.8"/><line x1="162.80" y1="126.50" x2="162.80" y2="129.30" stroke="#505050" stroke-width="0.8"/><line x1="162.80" y1="154.30" x2="162.80" y2="157.50" stroke="#505050" stroke-width="0.8"/><line x1="162.80" y1="163.30" x2="162.80" y2="166.30" stroke="#505050" stroke-width="0.8"/><line x1="173.20" y1="126.50" x2="173.20" y2="129.30" stroke="#505050" stroke-width="0.8"/><line x1="173.20" y1="154.30" x2="173.20" y2="157.50" stroke="#505050" stroke-width="0.8"/><line x1="173.20" y1="163.30" x2="173.20" y2="166.30" stroke="#505050" stroke-width="0.8"/><line x1="183.60" y1="126.50" x2="183.60" y2="129.30" stroke="#505050" stroke-width="0.8"/><line x1="183.60" y1="154.30" x2="183.60" y2="157.50" stroke="#505050" stroke-width="0.8"/><line x1="183.60" y1="163.30" x2="183.60" y2="166.30" stroke="#505050" stroke-width="0.8"/><line x1="194.00" y1="126.50" x2="194.00" y2="129.30" stroke="#505050" stroke-width="0.8"/><line x1="194.00" y1="154.30" x2="194.00" y2="157.50" stroke="#505050" stroke-width="0.8"/><line x1="194.00" y1="163.30" x2="194.00" y2="166.30" stroke="#505050" stroke-width="0.8"/><line x1="204.40" y1="126.50" x2="204.40" y2="166.30" stroke="#505050" stroke-width="0.9"/><line x1="214.80" y1="126.50" x2="214.80" y2="129.30" stroke="#505050" stroke-width="0.8"/><line x1="214.80" y1="154.30" x2="214.80" y2="157.50" stroke="#505050" stroke-width="0.8"/><line x1="214.80" y1="163.30" x2="214.80" y2="166.30" stroke="#505050" stroke-width="0.8"/><line x1="225.20" y1="126.50" x2="225.20" y2="129.30" stroke="#505050" stroke-width="0.8"/><line x1="225.20" y1="154.30" x2="225.20" y2="157.50" stroke="#505050" stroke-width="0.8"/><line x1="225.20" y1="163.30" x2="225.20" y2="166.30" stroke="#505050" stroke-width="0.8"/><line x1="235.60" y1="126.50" x2="235.60" y2="129.30" stroke="#505050" stroke-width="0.8"/><line x1="235.60" y1="154.30" x2="235.60" y2="157.50" stroke="#505050" stroke-width="0.8"/><line x1="235.60" y1="163.30" x2="235.60" y2="166.30" stroke="#505050" stroke-width="0.8"/><line x1="246.00" y1="126.50" x2="246.00" y2="129.30" stroke="#505050" stroke-width="0.8"/><line x1="246.00" y1="154.30" x2="246.00" y2="157.50" stroke="#505050" stroke-width="0.8"/><line x1="246.00" y1="163.30" x2="246.00" y2="166.30" stroke="#505050" stroke-width="0.8"/><line x1="256.40" y1="126.50" x2="256.40" y2="129.30" stroke="#505050" stroke-width="0.8"/><line x1="256.40" y1="154.30" x2="256.40" y2="157.50" stroke="#505050" stroke-width="0.8"/><line x1="256.40" y1="163.30" x2="256.40" y2="166.30" stroke="#505050" stroke-width="0.8"/><line x1="266.80" y1="126.50" x2="266.80" y2="166.30" stroke="#505050" stroke-width="0.9"/><line x1="277.20" y1="126.50" x2="277.20" y2="129.30" stroke="#505050" stroke-width="0.8"/><line x1="277.20" y1="154.30" x2="277.20" y2="157.50" stroke="#505050" stroke-width="0.8"/><line x1="277.20" y1="163.30" x2="277.20" y2="166.30" stroke="#505050" stroke-width="0.8"/><line x1="287.60" y1="126.50" x2="287.60" y2="129.30" stroke="#505050" stroke-width="0.8"/><line x1="287.60" y1="154.30" x2="287.60" y2="157.50" stroke="#505050" stroke-width="0.8"/><line x1="287.60" y1="163.30" x2="287.60" y2="166.30" stroke="#505050" stroke-width="0.8"/><line x1="298.00" y1="126.50" x2="298.00" y2="129.30" stroke="#505050" stroke-width="0.8"/><line x1="298.00" y1="154.30" x2="298.00" y2="157.50" stroke="#505050" stroke-width="0.8"/><line x1="298.00" y1="163.30" x2="298.00" y2="166.30" stroke="#505050" stroke-width="0.8"/><line x1="308.40" y1="126.50" x2="308.40" y2="129.30" stroke="#505050" stroke-width="0.8"/><line x1="308.40" y1="154.30" x2="308.40" y2="157.50" stroke="#505050" stroke-width="0.8"/><line x1="308.40" y1="163.30" x2="308.40" y2="166.30" stroke="#505050" stroke-width="0.8"/><line x1="318.80" y1="126.50" x2="318.80" y2="129.30" stroke="#505050" stroke-width="0.8"/><line x1="318.80" y1="154.30" x2="318.80" y2="157.50" stroke="#505050" stroke-width="0.8"/><line x1="318.80" y1="163.30" x2="318.80" y2="166.30" stroke="#505050" stroke-width="0.8"/><line x1="329.20" y1="126.50" x2="329.20" y2="166.30" stroke="#505050" stroke-width="0.9"/><line x1="339.60" y1="126.50" x2="339.60" y2="129.30" stroke="#505050" stroke-width="0.8"/><line x1="339.60" y1="154.30" x2="339.60" y2="157.50" stroke="#505050" stroke-width="0.8"/><line x1="339.60" y1="163.30" x2="339.60" y2="166.30" stroke="#505050" stroke-width="0.8"/><line x1="350.00" y1="126.50" x2="350.00" y2="129.30" stroke="#505050" stroke-width="0.8"/><line x1="350.00" y1="154.30" x2="350.00" y2="157.50" stroke="#505050" stroke-width="0.8"/><line x1="350.00" y1="163.30" x2="350.00" y2="166.30" stroke="#505050" stroke-width="0.8"/><line x1="360.40" y1="126.50" x2="360.40" y2="129.30" stroke="#505050" stroke-width="0.8"/><line x1="360.40" y1="154.30" x2="360.40" y2="157.50" stroke="#505050" stroke-width="0.8"/><line x1="360.40" y1="163.30" x2="360.40" y2="166.30" stroke="#505050" stroke-width="0.8"/><line x1="370.80" y1="126.50" x2="370.80" y2="129.30" stroke="#505050" stroke-width="0.8"/><line x1="370.80" y1="154.30" x2="370.80" y2="157.50" stroke="#505050" stroke-width="0.8"/><line x1="370.80" y1="163.30" x2="370.80" y2="166.30" stroke="#505050" stroke-width="0.8"/><line x1="381.20" y1="126.50" x2="381.20" y2="129.30" stroke="#505050" stroke-width="0.8"/><line x1="381.20" y1="154.30" x2="381.20" y2="157.50" stroke="#505050" stroke-width="0.8"/><line x1="381.20" y1="163.30" x2="381.20" y2="166.30" stroke="#505050" stroke-width="0.8"/><line x1="391.60" y1="126.50" x2="391.60" y2="166.30" stroke="#505050" stroke-width="0.9"/><line x1="402.00" y1="126.50" x2="402.00" y2="129.30" stroke="#505050" stroke-width="0.8"/><line x1="402.00" y1="154.30" x2="402.00" y2="157.50" stroke="#505050" stroke-width="0.8"/><line x1="402.00" y1="163.30" x2="402.00" y2="166.30" stroke="#505050" stroke-width="0.8"/><line x1="412.40" y1="126.50" x2="412.40" y2="129.30" stroke="#505050" stroke-width="0.8"/><line x1="412.40" y1="154.30" x2="412.40" y2="157.50" stroke="#505050" stroke-width="0.8"/><line x1="412.40" y1="163.30" x2="412.40" y2="166.30" stroke="#505050" stroke-width="0.8"/><line x1="422.80" y1="126.50" x2="422.80" y2="129.30" stroke="#505050" stroke-width="0.8"/><line x1="422.80" y1="154.30" x2="422.80" y2="157.50" stroke="#505050" stroke-width="0.8"/><line x1="422.80" y1="163.30" x2="422.80" y2="166.30" stroke="#505050" stroke-width="0.8"/><line x1="433.20" y1="126.50" x2="433.20" y2="129.30" stroke="#505050" stroke-width="0.8"/><line x1="433.20" y1="154.30" x2="433.20" y2="157.50" stroke="#505050" stroke-width="0.8"/><line x1="433.20" y1="163.30" x2="433.20" y2="166.30" stroke="#505050" stroke-width="0.8"/><line x1="443.60" y1="126.50" x2="443.60" y2="129.30" stroke="#505050" stroke-width="0.8"/><line x1="443.60" y1="154.30" x2="443.60" y2="157.50" stroke="#505050" stroke-width="0.8"/><line x1="443.60" y1="163.30" x2="443.60" y2="166.30" stroke="#505050" stroke-width="0.8"/><line x1="454.00" y1="126.50" x2="454.00" y2="166.30" stroke="#505050" stroke-width="0.9"/><line x1="464.40" y1="126.50" x2="464.40" y2="129.30" stroke="#505050" stroke-width="0.8"/><line x1="464.40" y1="154.30" x2="464.40" y2="157.50" stroke="#505050" stroke-width="0.8"/><line x1="464.40" y1="163.30" x2="464.40" y2="166.30" stroke="#505050" stroke-width="0.8"/><line x1="474.80" y1="126.50" x2="474.80" y2="129.30" stroke="#505050" stroke-width="0.8"/><line x1="474.80" y1="154.30" x2="474.80" y2="157.50" stroke="#505050" stroke-width="0.8"/><line x1="474.80" y1="163.30" x2="474.80" y2="166.30" stroke="#505050" stroke-width="0.8"/><line x1="485.20" y1="126.50" x2="485.20" y2="129.30" stroke="#505050" stroke-width="0.8"/><line x1="485.20" y1="154.30" x2="485.20" y2="157.50" stroke="#505050" stroke-width="0.8"/><line x1="485.20" y1="163.30" x2="485.20" y2="166.30" stroke="#505050" stroke-width="0.8"/><line x1="495.60" y1="126.50" x2="495.60" y2="129.30" stroke="#505050" stroke-width="0.8"/><line x1="495.60" y1="154.30" x2="495.60" y2="157.50" stroke="#505050" stroke-width="0.8"/><line x1="495.60" y1="163.30" x2="495.60" y2="166.30" stroke="#505050" stroke-width="0.8"/><line x1="506.00" y1="126.50" x2="506.00" y2="129.30" stroke="#505050" stroke-width="0.8"/><line x1="506.00" y1="154.30" x2="506.00" y2="157.50" stroke="#505050" stroke-width="0.8"/><line x1="506.00" y1="163.30" x2="506.00" y2="166.30" stroke="#505050" stroke-width="0.8"/><line x1="516.40" y1="126.50" x2="516.40" y2="166.30" stroke="#505050" stroke-width="0.9"/><line x1="526.80" y1="126.50" x2="526.80" y2="129.30" stroke="#505050" stroke-width="0.8"/><line x1="526.80" y1="154.30" x2="526.80" y2="157.50" stroke="#505050" stroke-width="0.8"/><line x1="526.80" y1="163.30" x2="526.80" y2="166.30" stroke="#505050" stroke-width="0.8"/><line x1="537.20" y1="126.50" x2="537.20" y2="129.30" stroke="#505050" stroke-width="0.8"/><line x1="537.20" y1="154.30" x2="537.20" y2="157.50" stroke="#505050" stroke-width="0.8"/><line x1="537.20" y1="163.30" x2="537.20" y2="166.30" stroke="#505050" stroke-width="0.8"/><line x1="547.60" y1="126.50" x2="547.60" y2="129.30" stroke="#505050" stroke-width="0.8"/><line x1="547.60" y1="154.30" x2="547.60" y2="157.50" stroke="#505050" stroke-width="0.8"/><line x1="547.60" y1="163.30" x2="547.60" y2="166.30" stroke="#505050" stroke-width="0.8"/><line x1="558.00" y1="126.50" x2="558.00" y2="129.30" stroke="#505050" stroke-width="0.8"/><line x1="558.00" y1="154.30" x2="558.00" y2="157.50" stroke="#505050" stroke-width="0.8"/><line x1="558.00" y1="163.30" x2="558.00" y2="166.30" stroke="#505050" stroke-width="0.8"/><line x1="568.40" y1="126.50" x2="568.40" y2="129.30" stroke="#505050" stroke-width="0.8"/><line x1="568.40" y1="154.30" x2="568.40" y2="157.50" stroke="#505050" stroke-width="0.8"/><line x1="568.40" y1="163.30" x2="568.40" y2="166.30" stroke="#505050" stroke-width="0.8"/><line x1="578.80" y1="126.50" x2="578.80" y2="166.30" stroke="#505050" stroke-width="0.9"/><line x1="589.20" y1="126.50" x2="589.20" y2="129.30" stroke="#505050" stroke-width="0.8"/><line x1="589.20" y1="154.30" x2="589.20" y2="157.50" stroke="#505050" stroke-width="0.8"/><line x1="589.20" y1="163.30" x2="589.20" y2="166.30" stroke="#505050" stroke-width="0.8"/><line x1="599.60" y1="126.50" x2="599.60" y2="129.30" stroke="#505050" stroke-width="0.8"/><line x1="599.60" y1="154.30" x2="599.60" y2="157.50" stroke="#505050" stroke-width="0.8"/><line x1="599.60" y1="163.30" x2="599.60" y2="166.30" stroke="#505050" stroke-width="0.8"/><line x1="610.00" y1="126.50" x2="610.00" y2="129.30" stroke="#505050" stroke-width="0.8"/><line x1="610.00" y1="154.30" x2="610.00" y2="157.50" stroke="#505050" stroke-width="0.8"/><line x1="610.00" y1="163.30" x2="610.00" y2="166.30" stroke="#505050" stroke-width="0.8"/><line x1="620.40" y1="126.50" x2="620.40" y2="129.30" stroke="#505050" stroke-width="0.8"/><line x1="620.40" y1="154.30" x2="620.40" y2="157.50" stroke="#505050" stroke-width="0.8"/><line x1="620.40" y1="163.30" x2="620.40" y2="166.30" stroke="#505050" stroke-width="0.8"/><line x1="630.80" y1="126.50" x2="630.80" y2="129.30" stroke="#505050" stroke-width="0.8"/><line x1="630.80" y1="154.30" x2="630.80" y2="157.50" stroke="#505050" stroke-width="0.8"/><line x1="630.80" y1="163.30" x2="630.80" y2="166.30" stroke="#505050" stroke-width="0.8"/><line x1="641.20" y1="126.50" x2="641.20" y2="166.30" stroke="#505050" stroke-width="0.9"/><line x1="651.60" y1="126.50" x2="651.60" y2="129.30" stroke="#505050" stroke-width="0.8"/><line x1="651.60" y1="154.30" x2="651.60" y2="157.50" stroke="#505050" stroke-width="0.8"/><line x1="651.60" y1="163.30" x2="651.60" y2="166.30" stroke="#505050" stroke-width="0.8"/><line x1="662.00" y1="126.50" x2="662.00" y2="129.30" stroke="#505050" stroke-width="0.8"/><line x1="662.00" y1="154.30" x2="662.00" y2="157.50" stroke="#505050" stroke-width="0.8"/><line x1="662.00" y1="163.30" x2="662.00" y2="166.30" stroke="#505050" stroke-width="0.8"/><line x1="672.40" y1="126.50" x2="672.40" y2="129.30" stroke="#505050" stroke-width="0.8"/><line x1="672.40" y1="154.30" x2="672.40" y2="157.50" stroke="#505050" stroke-width="0.8"/><line x1="672.40" y1="163.30" x2="672.40" y2="166.30" stroke="#505050" stroke-width="0.8"/><line x1="682.80" y1="126.50" x2="682.80" y2="129.30" stroke="#505050" stroke-width="0.8"/><line x1="682.80" y1="154.30" x2="682.80" y2="157.50" stroke="#505050" stroke-width="0.8"/><line x1="682.80" y1="163.30" x2="682.80" y2="166.30" stroke="#505050" stroke-width="0.8"/><line x1="693.20" y1="126.50" x2="693.20" y2="129.30" stroke="#505050" stroke-width="0.8"/><line x1="693.20" y1="154.30" x2="693.20" y2="157.50" stroke="#505050" stroke-width="0.8"/><line x1="693.20" y1="163.30" x2="693.20" y2="166.30" stroke="#505050" stroke-width="0.8"/><line x1="703.60" y1="126.50" x2="703.60" y2="166.30" stroke="#505050" stroke-width="0.9"/><line x1="78.10" y1="134.25" x2="79.60" y2="134.25" stroke="#505050" stroke-width="0.8"/><line x1="702.10" y1="134.25" x2="703.60" y2="134.25" stroke="#505050" stroke-width="0.8"/><line x1="78.10" y1="142.00" x2="79.60" y2="142.00" stroke="#505050" stroke-width="0.8"/><line x1="702.10" y1="142.00" x2="703.60" y2="142.00" stroke="#505050" stroke-width="0.8"/><line x1="78.10" y1="149.75" x2="79.60" y2="149.75" stroke="#505050" stroke-width="0.8"/><line x1="702.10" y1="149.75" x2="703.60" y2="149.75" stroke="#505050" stroke-width="0.8"/><line x1="74.30" y1="497.50" x2="708.30" y2="497.50" stroke="#3a3a3a" stroke-width="1"/><line x1="74.30" y1="528.50" x2="708.30" y2="528.50" stroke="#3a3a3a" stroke-width="1"/><line x1="79.60" y1="497.50" x2="79.60" y2="528.50" stroke="#3a3a3a" stroke-width="1"/><line x1="703.60" y1="497.50" x2="703.60" y2="528.50" stroke="#3a3a3a" stroke-width="1"/><line x1="79.60" y1="488.30" x2="79.60" y2="497.50" stroke="#333" stroke-width="1.1"/><line x1="79.60" y1="528.50" x2="79.60" y2="538.70" stroke="#444" stroke-width="1"/><line x1="90.00" y1="488.30" x2="90.00" y2="491.30" stroke="#505050" stroke-width="0.8"/><line x1="90.00" y1="494.20" x2="90.00" y2="497.50" stroke="#505050" stroke-width="0.8"/><line x1="90.00" y1="528.50" x2="90.00" y2="531.70" stroke="#505050" stroke-width="0.8"/><line x1="100.40" y1="488.30" x2="100.40" y2="491.30" stroke="#505050" stroke-width="0.8"/><line x1="100.40" y1="494.20" x2="100.40" y2="497.50" stroke="#505050" stroke-width="0.8"/><line x1="100.40" y1="528.50" x2="100.40" y2="531.70" stroke="#505050" stroke-width="0.8"/><line x1="110.80" y1="488.30" x2="110.80" y2="491.30" stroke="#505050" stroke-width="0.8"/><line x1="110.80" y1="494.20" x2="110.80" y2="497.50" stroke="#505050" stroke-width="0.8"/><line x1="110.80" y1="528.50" x2="110.80" y2="531.70" stroke="#505050" stroke-width="0.8"/><line x1="121.20" y1="488.30" x2="121.20" y2="491.30" stroke="#505050" stroke-width="0.8"/><line x1="121.20" y1="494.20" x2="121.20" y2="497.50" stroke="#505050" stroke-width="0.8"/><line x1="121.20" y1="528.50" x2="121.20" y2="531.70" stroke="#505050" stroke-width="0.8"/><line x1="131.60" y1="488.30" x2="131.60" y2="491.30" stroke="#505050" stroke-width="0.8"/><line x1="131.60" y1="494.20" x2="131.60" y2="497.50" stroke="#505050" stroke-width="0.8"/><line x1="131.60" y1="528.50" x2="131.60" y2="531.70" stroke="#505050" stroke-width="0.8"/><line x1="142.00" y1="488.30" x2="142.00" y2="497.50" stroke="#333" stroke-width="1.1"/><line x1="142.00" y1="528.50" x2="142.00" y2="538.70" stroke="#444" stroke-width="1"/><line x1="152.40" y1="488.30" x2="152.40" y2="491.30" stroke="#505050" stroke-width="0.8"/><line x1="152.40" y1="494.20" x2="152.40" y2="497.50" stroke="#505050" stroke-width="0.8"/><line x1="152.40" y1="528.50" x2="152.40" y2="531.70" stroke="#505050" stroke-width="0.8"/><line x1="162.80" y1="488.30" x2="162.80" y2="491.30" stroke="#505050" stroke-width="0.8"/><line x1="162.80" y1="494.20" x2="162.80" y2="497.50" stroke="#505050" stroke-width="0.8"/><line x1="162.80" y1="528.50" x2="162.80" y2="531.70" stroke="#505050" stroke-width="0.8"/><line x1="173.20" y1="488.30" x2="173.20" y2="491.30" stroke="#505050" stroke-width="0.8"/><line x1="173.20" y1="494.20" x2="173.20" y2="497.50" stroke="#505050" stroke-width="0.8"/><line x1="173.20" y1="528.50" x2="173.20" y2="531.70" stroke="#505050" stroke-width="0.8"/><line x1="183.60" y1="488.30" x2="183.60" y2="491.30" stroke="#505050" stroke-width="0.8"/><line x1="183.60" y1="494.20" x2="183.60" y2="497.50" stroke="#505050" stroke-width="0.8"/><line x1="183.60" y1="528.50" x2="183.60" y2="531.70" stroke="#505050" stroke-width="0.8"/><line x1="194.00" y1="488.30" x2="194.00" y2="491.30" stroke="#505050" stroke-width="0.8"/><line x1="194.00" y1="494.20" x2="194.00" y2="497.50" stroke="#505050" stroke-width="0.8"/><line x1="194.00" y1="528.50" x2="194.00" y2="531.70" stroke="#505050" stroke-width="0.8"/><line x1="204.40" y1="488.30" x2="204.40" y2="497.50" stroke="#333" stroke-width="1.1"/><line x1="204.40" y1="528.50" x2="204.40" y2="538.70" stroke="#444" stroke-width="1"/><line x1="214.80" y1="488.30" x2="214.80" y2="491.30" stroke="#505050" stroke-width="0.8"/><line x1="214.80" y1="494.20" x2="214.80" y2="497.50" stroke="#505050" stroke-width="0.8"/><line x1="214.80" y1="528.50" x2="214.80" y2="531.70" stroke="#505050" stroke-width="0.8"/><line x1="225.20" y1="488.30" x2="225.20" y2="491.30" stroke="#505050" stroke-width="0.8"/><line x1="225.20" y1="494.20" x2="225.20" y2="497.50" stroke="#505050" stroke-width="0.8"/><line x1="225.20" y1="528.50" x2="225.20" y2="531.70" stroke="#505050" stroke-width="0.8"/><line x1="235.60" y1="488.30" x2="235.60" y2="491.30" stroke="#505050" stroke-width="0.8"/><line x1="235.60" y1="494.20" x2="235.60" y2="497.50" stroke="#505050" stroke-width="0.8"/><line x1="235.60" y1="528.50" x2="235.60" y2="531.70" stroke="#505050" stroke-width="0.8"/><line x1="246.00" y1="488.30" x2="246.00" y2="491.30" stroke="#505050" stroke-width="0.8"/><line x1="246.00" y1="494.20" x2="246.00" y2="497.50" stroke="#505050" stroke-width="0.8"/><line x1="246.00" y1="528.50" x2="246.00" y2="531.70" stroke="#505050" stroke-width="0.8"/><line x1="256.40" y1="488.30" x2="256.40" y2="491.30" stroke="#505050" stroke-width="0.8"/><line x1="256.40" y1="494.20" x2="256.40" y2="497.50" stroke="#505050" stroke-width="0.8"/><line x1="256.40" y1="528.50" x2="256.40" y2="531.70" stroke="#505050" stroke-width="0.8"/><line x1="266.80" y1="488.30" x2="266.80" y2="497.50" stroke="#333" stroke-width="1.1"/><line x1="266.80" y1="528.50" x2="266.80" y2="538.70" stroke="#444" stroke-width="1"/><line x1="277.20" y1="488.30" x2="277.20" y2="491.30" stroke="#505050" stroke-width="0.8"/><line x1="277.20" y1="494.20" x2="277.20" y2="497.50" stroke="#505050" stroke-width="0.8"/><line x1="277.20" y1="528.50" x2="277.20" y2="531.70" stroke="#505050" stroke-width="0.8"/><line x1="287.60" y1="488.30" x2="287.60" y2="491.30" stroke="#505050" stroke-width="0.8"/><line x1="287.60" y1="494.20" x2="287.60" y2="497.50" stroke="#505050" stroke-width="0.8"/><line x1="287.60" y1="528.50" x2="287.60" y2="531.70" stroke="#505050" stroke-width="0.8"/><line x1="298.00" y1="488.30" x2="298.00" y2="491.30" stroke="#505050" stroke-width="0.8"/><line x1="298.00" y1="494.20" x2="298.00" y2="497.50" stroke="#505050" stroke-width="0.8"/><line x1="298.00" y1="528.50" x2="298.00" y2="531.70" stroke="#505050" stroke-width="0.8"/><line x1="308.40" y1="488.30" x2="308.40" y2="491.30" stroke="#505050" stroke-width="0.8"/><line x1="308.40" y1="494.20" x2="308.40" y2="497.50" stroke="#505050" stroke-width="0.8"/><line x1="308.40" y1="528.50" x2="308.40" y2="531.70" stroke="#505050" stroke-width="0.8"/><line x1="318.80" y1="488.30" x2="318.80" y2="491.30" stroke="#505050" stroke-width="0.8"/><line x1="318.80" y1="494.20" x2="318.80" y2="497.50" stroke="#505050" stroke-width="0.8"/><line x1="318.80" y1="528.50" x2="318.80" y2="531.70" stroke="#505050" stroke-width="0.8"/><line x1="329.20" y1="488.30" x2="329.20" y2="497.50" stroke="#333" stroke-width="1.1"/><line x1="329.20" y1="528.50" x2="329.20" y2="538.70" stroke="#444" stroke-width="1"/><line x1="339.60" y1="488.30" x2="339.60" y2="491.30" stroke="#505050" stroke-width="0.8"/><line x1="339.60" y1="494.20" x2="339.60" y2="497.50" stroke="#505050" stroke-width="0.8"/><line x1="339.60" y1="528.50" x2="339.60" y2="531.70" stroke="#505050" stroke-width="0.8"/><line x1="350.00" y1="488.30" x2="350.00" y2="491.30" stroke="#505050" stroke-width="0.8"/><line x1="350.00" y1="494.20" x2="350.00" y2="497.50" stroke="#505050" stroke-width="0.8"/><line x1="350.00" y1="528.50" x2="350.00" y2="531.70" stroke="#505050" stroke-width="0.8"/><line x1="360.40" y1="488.30" x2="360.40" y2="491.30" stroke="#505050" stroke-width="0.8"/><line x1="360.40" y1="494.20" x2="360.40" y2="497.50" stroke="#505050" stroke-width="0.8"/><line x1="360.40" y1="528.50" x2="360.40" y2="531.70" stroke="#505050" stroke-width="0.8"/><line x1="370.80" y1="488.30" x2="370.80" y2="491.30" stroke="#505050" stroke-width="0.8"/><line x1="370.80" y1="494.20" x2="370.80" y2="497.50" stroke="#505050" stroke-width="0.8"/><line x1="370.80" y1="528.50" x2="370.80" y2="531.70" stroke="#505050" stroke-width="0.8"/><line x1="381.20" y1="488.30" x2="381.20" y2="491.30" stroke="#505050" stroke-width="0.8"/><line x1="381.20" y1="494.20" x2="381.20" y2="497.50" stroke="#505050" stroke-width="0.8"/><line x1="381.20" y1="528.50" x2="381.20" y2="531.70" stroke="#505050" stroke-width="0.8"/><line x1="391.60" y1="488.30" x2="391.60" y2="497.50" stroke="#333" stroke-width="1.1"/><line x1="391.60" y1="528.50" x2="391.60" y2="538.70" stroke="#444" stroke-width="1"/><line x1="402.00" y1="488.30" x2="402.00" y2="491.30" stroke="#505050" stroke-width="0.8"/><line x1="402.00" y1="494.20" x2="402.00" y2="497.50" stroke="#505050" stroke-width="0.8"/><line x1="402.00" y1="528.50" x2="402.00" y2="531.70" stroke="#505050" stroke-width="0.8"/><line x1="412.40" y1="488.30" x2="412.40" y2="491.30" stroke="#505050" stroke-width="0.8"/><line x1="412.40" y1="494.20" x2="412.40" y2="497.50" stroke="#505050" stroke-width="0.8"/><line x1="412.40" y1="528.50" x2="412.40" y2="531.70" stroke="#505050" stroke-width="0.8"/><line x1="422.80" y1="488.30" x2="422.80" y2="491.30" stroke="#505050" stroke-width="0.8"/><line x1="422.80" y1="494.20" x2="422.80" y2="497.50" stroke="#505050" stroke-width="0.8"/><line x1="422.80" y1="528.50" x2="422.80" y2="531.70" stroke="#505050" stroke-width="0.8"/><line x1="433.20" y1="488.30" x2="433.20" y2="491.30" stroke="#505050" stroke-width="0.8"/><line x1="433.20" y1="494.20" x2="433.20" y2="497.50" stroke="#505050" stroke-width="0.8"/><line x1="433.20" y1="528.50" x2="433.20" y2="531.70" stroke="#505050" stroke-width="0.8"/><line x1="443.60" y1="488.30" x2="443.60" y2="491.30" stroke="#505050" stroke-width="0.8"/><line x1="443.60" y1="494.20" x2="443.60" y2="497.50" stroke="#505050" stroke-width="0.8"/><line x1="443.60" y1="528.50" x2="443.60" y2="531.70" stroke="#505050" stroke-width="0.8"/><line x1="454.00" y1="488.30" x2="454.00" y2="497.50" stroke="#333" stroke-width="1.1"/><line x1="454.00" y1="528.50" x2="454.00" y2="538.70" stroke="#444" stroke-width="1"/><line x1="464.40" y1="488.30" x2="464.40" y2="491.30" stroke="#505050" stroke-width="0.8"/><line x1="464.40" y1="494.20" x2="464.40" y2="497.50" stroke="#505050" stroke-width="0.8"/><line x1="464.40" y1="528.50" x2="464.40" y2="531.70" stroke="#505050" stroke-width="0.8"/><line x1="474.80" y1="488.30" x2="474.80" y2="491.30" stroke="#505050" stroke-width="0.8"/><line x1="474.80" y1="494.20" x2="474.80" y2="497.50" stroke="#505050" stroke-width="0.8"/><line x1="474.80" y1="528.50" x2="474.80" y2="531.70" stroke="#505050" stroke-width="0.8"/><line x1="485.20" y1="488.30" x2="485.20" y2="491.30" stroke="#505050" stroke-width="0.8"/><line x1="485.20" y1="494.20" x2="485.20" y2="497.50" stroke="#505050" stroke-width="0.8"/><line x1="485.20" y1="528.50" x2="485.20" y2="531.70" stroke="#505050" stroke-width="0.8"/><line x1="495.60" y1="488.30" x2="495.60" y2="491.30" stroke="#505050" stroke-width="0.8"/><line x1="495.60" y1="494.20" x2="495.60" y2="497.50" stroke="#505050" stroke-width="0.8"/><line x1="495.60" y1="528.50" x2="495.60" y2="531.70" stroke="#505050" stroke-width="0.8"/><line x1="506.00" y1="488.30" x2="506.00" y2="491.30" stroke="#505050" stroke-width="0.8"/><line x1="506.00" y1="494.20" x2="506.00" y2="497.50" stroke="#505050" stroke-width="0.8"/><line x1="506.00" y1="528.50" x2="506.00" y2="531.70" stroke="#505050" stroke-width="0.8"/><line x1="516.40" y1="488.30" x2="516.40" y2="497.50" stroke="#333" stroke-width="1.1"/><line x1="516.40" y1="528.50" x2="516.40" y2="538.70" stroke="#444" stroke-width="1"/><line x1="526.80" y1="488.30" x2="526.80" y2="491.30" stroke="#505050" stroke-width="0.8"/><line x1="526.80" y1="494.20" x2="526.80" y2="497.50" stroke="#505050" stroke-width="0.8"/><line x1="526.80" y1="528.50" x2="526.80" y2="531.70" stroke="#505050" stroke-width="0.8"/><line x1="537.20" y1="488.30" x2="537.20" y2="491.30" stroke="#505050" stroke-width="0.8"/><line x1="537.20" y1="494.20" x2="537.20" y2="497.50" stroke="#505050" stroke-width="0.8"/><line x1="537.20" y1="528.50" x2="537.20" y2="531.70" stroke="#505050" stroke-width="0.8"/><line x1="547.60" y1="488.30" x2="547.60" y2="491.30" stroke="#505050" stroke-width="0.8"/><line x1="547.60" y1="494.20" x2="547.60" y2="497.50" stroke="#505050" stroke-width="0.8"/><line x1="547.60" y1="528.50" x2="547.60" y2="531.70" stroke="#505050" stroke-width="0.8"/><line x1="558.00" y1="488.30" x2="558.00" y2="491.30" stroke="#505050" stroke-width="0.8"/><line x1="558.00" y1="494.20" x2="558.00" y2="497.50" stroke="#505050" stroke-width="0.8"/><line x1="558.00" y1="528.50" x2="558.00" y2="531.70" stroke="#505050" stroke-width="0.8"/><line x1="568.40" y1="488.30" x2="568.40" y2="491.30" stroke="#505050" stroke-width="0.8"/><line x1="568.40" y1="494.20" x2="568.40" y2="497.50" stroke="#505050" stroke-width="0.8"/><line x1="568.40" y1="528.50" x2="568.40" y2="531.70" stroke="#505050" stroke-width="0.8"/><line x1="578.80" y1="488.30" x2="578.80" y2="497.50" stroke="#333" stroke-width="1.1"/><line x1="578.80" y1="528.50" x2="578.80" y2="538.70" stroke="#444" stroke-width="1"/><line x1="589.20" y1="488.30" x2="589.20" y2="491.30" stroke="#505050" stroke-width="0.8"/><line x1="589.20" y1="494.20" x2="589.20" y2="497.50" stroke="#505050" stroke-width="0.8"/><line x1="589.20" y1="528.50" x2="589.20" y2="531.70" stroke="#505050" stroke-width="0.8"/><line x1="599.60" y1="488.30" x2="599.60" y2="491.30" stroke="#505050" stroke-width="0.8"/><line x1="599.60" y1="494.20" x2="599.60" y2="497.50" stroke="#505050" stroke-width="0.8"/><line x1="599.60" y1="528.50" x2="599.60" y2="531.70" stroke="#505050" stroke-width="0.8"/><line x1="610.00" y1="488.30" x2="610.00" y2="491.30" stroke="#505050" stroke-width="0.8"/><line x1="610.00" y1="494.20" x2="610.00" y2="497.50" stroke="#505050" stroke-width="0.8"/><line x1="610.00" y1="528.50" x2="610.00" y2="531.70" stroke="#505050" stroke-width="0.8"/><line x1="620.40" y1="488.30" x2="620.40" y2="491.30" stroke="#505050" stroke-width="0.8"/><line x1="620.40" y1="494.20" x2="620.40" y2="497.50" stroke="#505050" stroke-width="0.8"/><line x1="620.40" y1="528.50" x2="620.40" y2="531.70" stroke="#505050" stroke-width="0.8"/><line x1="630.80" y1="488.30" x2="630.80" y2="491.30" stroke="#505050" stroke-width="0.8"/><line x1="630.80" y1="494.20" x2="630.80" y2="497.50" stroke="#505050" stroke-width="0.8"/><line x1="630.80" y1="528.50" x2="630.80" y2="531.70" stroke="#505050" stroke-width="0.8"/><line x1="641.20" y1="488.30" x2="641.20" y2="497.50" stroke="#333" stroke-width="1.1"/><line x1="641.20" y1="528.50" x2="641.20" y2="538.70" stroke="#444" stroke-width="1"/><line x1="651.60" y1="488.30" x2="651.60" y2="491.30" stroke="#505050" stroke-width="0.8"/><line x1="651.60" y1="494.20" x2="651.60" y2="497.50" stroke="#505050" stroke-width="0.8"/><line x1="651.60" y1="528.50" x2="651.60" y2="531.70" stroke="#505050" stroke-width="0.8"/><line x1="662.00" y1="488.30" x2="662.00" y2="491.30" stroke="#505050" stroke-width="0.8"/><line x1="662.00" y1="494.20" x2="662.00" y2="497.50" stroke="#505050" stroke-width="0.8"/><line x1="662.00" y1="528.50" x2="662.00" y2="531.70" stroke="#505050" stroke-width="0.8"/><line x1="672.40" y1="488.30" x2="672.40" y2="491.30" stroke="#505050" stroke-width="0.8"/><line x1="672.40" y1="494.20" x2="672.40" y2="497.50" stroke="#505050" stroke-width="0.8"/><line x1="672.40" y1="528.50" x2="672.40" y2="531.70" stroke="#505050" stroke-width="0.8"/><line x1="682.80" y1="488.30" x2="682.80" y2="491.30" stroke="#505050" stroke-width="0.8"/><line x1="682.80" y1="494.20" x2="682.80" y2="497.50" stroke="#505050" stroke-width="0.8"/><line x1="682.80" y1="528.50" x2="682.80" y2="531.70" stroke="#505050" stroke-width="0.8"/><line x1="693.20" y1="488.30" x2="693.20" y2="491.30" stroke="#505050" stroke-width="0.8"/><line x1="693.20" y1="494.20" x2="693.20" y2="497.50" stroke="#505050" stroke-width="0.8"/><line x1="693.20" y1="528.50" x2="693.20" y2="531.70" stroke="#505050" stroke-width="0.8"/><line x1="703.60" y1="488.30" x2="703.60" y2="497.50" stroke="#333" stroke-width="1.1"/><line x1="703.60" y1="528.50" x2="703.60" y2="538.70" stroke="#444" stroke-width="1"/><line x1="78.10" y1="505.25" x2="79.60" y2="505.25" stroke="#505050" stroke-width="0.8"/><line x1="702.10" y1="505.25" x2="703.60" y2="505.25" stroke="#505050" stroke-width="0.8"/><line x1="78.10" y1="513.00" x2="79.60" y2="513.00" stroke="#505050" stroke-width="0.8"/><line x1="702.10" y1="513.00" x2="703.60" y2="513.00" stroke="#505050" stroke-width="0.8"/><line x1="78.10" y1="520.75" x2="79.60" y2="520.75" stroke="#505050" stroke-width="0.8"/><line x1="702.10" y1="520.75" x2="703.60" y2="520.75" stroke="#505050" stroke-width="0.8"/><line x1="74.30" y1="166.30" x2="79.60" y2="166.30" stroke="#3a3a3a" stroke-width="1"/><line x1="74.30" y1="322.30" x2="708.30" y2="322.30" stroke="#3a3a3a" stroke-width="1"/><line x1="692.50" y1="166.30" x2="708.30" y2="166.30" stroke="#3a3a3a" stroke-width="1"/><line x1="79.60" y1="166.30" x2="79.60" y2="322.30" stroke="#3a3a3a" stroke-width="1"/><line x1="703.60" y1="166.30" x2="703.60" y2="322.30" stroke="#3a3a3a" stroke-width="1"/><line x1="74.30" y1="291.10" x2="79.60" y2="291.10" stroke="#3a3a3a" stroke-width="1"/><line x1="703.60" y1="291.10" x2="705.60" y2="291.10" stroke="#3a3a3a" stroke-width="1"/><line x1="74.30" y1="259.90" x2="79.60" y2="259.90" stroke="#3a3a3a" stroke-width="1"/><line x1="703.60" y1="259.90" x2="705.60" y2="259.90" stroke="#3a3a3a" stroke-width="1"/><line x1="74.30" y1="228.70" x2="79.60" y2="228.70" stroke="#3a3a3a" stroke-width="1"/><line x1="703.60" y1="228.70" x2="705.60" y2="228.70" stroke="#3a3a3a" stroke-width="1"/><line x1="74.30" y1="197.50" x2="79.60" y2="197.50" stroke="#3a3a3a" stroke-width="1"/><line x1="703.60" y1="197.50" x2="705.60" y2="197.50" stroke="#3a3a3a" stroke-width="1"/><line x1="74.30" y1="332.30" x2="79.60" y2="332.30" stroke="#3a3a3a" stroke-width="1"/><line x1="74.30" y1="488.30" x2="708.30" y2="488.30" stroke="#3a3a3a" stroke-width="1"/><line x1="692.50" y1="332.30" x2="708.30" y2="332.30" stroke="#3a3a3a" stroke-width="1"/><line x1="79.60" y1="332.30" x2="79.60" y2="488.30" stroke="#3a3a3a" stroke-width="1"/><line x1="703.60" y1="332.30" x2="703.60" y2="488.30" stroke="#3a3a3a" stroke-width="1"/><line x1="74.30" y1="457.10" x2="79.60" y2="457.10" stroke="#3a3a3a" stroke-width="1"/><line x1="703.60" y1="457.10" x2="705.60" y2="457.10" stroke="#3a3a3a" stroke-width="1"/><line x1="74.30" y1="425.90" x2="79.60" y2="425.90" stroke="#3a3a3a" stroke-width="1"/><line x1="703.60" y1="425.90" x2="705.60" y2="425.90" stroke="#3a3a3a" stroke-width="1"/><line x1="74.30" y1="394.70" x2="79.60" y2="394.70" stroke="#3a3a3a" stroke-width="1"/><line x1="703.60" y1="394.70" x2="705.60" y2="394.70" stroke="#3a3a3a" stroke-width="1"/><line x1="74.30" y1="363.50" x2="79.60" y2="363.50" stroke="#3a3a3a" stroke-width="1"/><line x1="703.60" y1="363.50" x2="705.60" y2="363.50" stroke="#3a3a3a" stroke-width="1"/><line x1="79.60" y1="322.30" x2="79.60" y2="332.30" stroke="#222" stroke-width="1.2"/><line x1="90.00" y1="322.30" x2="90.00" y2="325.50" stroke="#505050" stroke-width="0.8"/><line x1="90.00" y1="329.10" x2="90.00" y2="332.30" stroke="#505050" stroke-width="0.8"/><line x1="100.40" y1="322.30" x2="100.40" y2="325.50" stroke="#505050" stroke-width="0.8"/><line x1="100.40" y1="329.10" x2="100.40" y2="332.30" stroke="#505050" stroke-width="0.8"/><line x1="110.80" y1="322.30" x2="110.80" y2="325.50" stroke="#505050" stroke-width="0.8"/><line x1="110.80" y1="329.10" x2="110.80" y2="332.30" stroke="#505050" stroke-width="0.8"/><line x1="121.20" y1="322.30" x2="121.20" y2="325.50" stroke="#505050" stroke-width="0.8"/><line x1="121.20" y1="329.10" x2="121.20" y2="332.30" stroke="#505050" stroke-width="0.8"/><line x1="131.60" y1="322.30" x2="131.60" y2="325.50" stroke="#505050" stroke-width="0.8"/><line x1="131.60" y1="329.10" x2="131.60" y2="332.30" stroke="#505050" stroke-width="0.8"/><line x1="142.00" y1="322.30" x2="142.00" y2="332.30" stroke="#222" stroke-width="1.2"/><line x1="152.40" y1="322.30" x2="152.40" y2="325.50" stroke="#505050" stroke-width="0.8"/><line x1="152.40" y1="329.10" x2="152.40" y2="332.30" stroke="#505050" stroke-width="0.8"/><line x1="162.80" y1="322.30" x2="162.80" y2="325.50" stroke="#505050" stroke-width="0.8"/><line x1="162.80" y1="329.10" x2="162.80" y2="332.30" stroke="#505050" stroke-width="0.8"/><line x1="173.20" y1="322.30" x2="173.20" y2="325.50" stroke="#505050" stroke-width="0.8"/><line x1="173.20" y1="329.10" x2="173.20" y2="332.30" stroke="#505050" stroke-width="0.8"/><line x1="183.60" y1="322.30" x2="183.60" y2="325.50" stroke="#505050" stroke-width="0.8"/><line x1="183.60" y1="329.10" x2="183.60" y2="332.30" stroke="#505050" stroke-width="0.8"/><line x1="194.00" y1="322.30" x2="194.00" y2="325.50" stroke="#505050" stroke-width="0.8"/><line x1="194.00" y1="329.10" x2="194.00" y2="332.30" stroke="#505050" stroke-width="0.8"/><line x1="204.40" y1="322.30" x2="204.40" y2="332.30" stroke="#222" stroke-width="1.2"/><line x1="214.80" y1="322.30" x2="214.80" y2="325.50" stroke="#505050" stroke-width="0.8"/><line x1="214.80" y1="329.10" x2="214.80" y2="332.30" stroke="#505050" stroke-width="0.8"/><line x1="225.20" y1="322.30" x2="225.20" y2="325.50" stroke="#505050" stroke-width="0.8"/><line x1="225.20" y1="329.10" x2="225.20" y2="332.30" stroke="#505050" stroke-width="0.8"/><line x1="235.60" y1="322.30" x2="235.60" y2="325.50" stroke="#505050" stroke-width="0.8"/><line x1="235.60" y1="329.10" x2="235.60" y2="332.30" stroke="#505050" stroke-width="0.8"/><line x1="246.00" y1="322.30" x2="246.00" y2="325.50" stroke="#505050" stroke-width="0.8"/><line x1="246.00" y1="329.10" x2="246.00" y2="332.30" stroke="#505050" stroke-width="0.8"/><line x1="256.40" y1="322.30" x2="256.40" y2="325.50" stroke="#505050" stroke-width="0.8"/><line x1="256.40" y1="329.10" x2="256.40" y2="332.30" stroke="#505050" stroke-width="0.8"/><line x1="266.80" y1="322.30" x2="266.80" y2="332.30" stroke="#222" stroke-width="1.2"/><line x1="277.20" y1="322.30" x2="277.20" y2="325.50" stroke="#505050" stroke-width="0.8"/><line x1="277.20" y1="329.10" x2="277.20" y2="332.30" stroke="#505050" stroke-width="0.8"/><line x1="287.60" y1="322.30" x2="287.60" y2="325.50" stroke="#505050" stroke-width="0.8"/><line x1="287.60" y1="329.10" x2="287.60" y2="332.30" stroke="#505050" stroke-width="0.8"/><line x1="298.00" y1="322.30" x2="298.00" y2="325.50" stroke="#505050" stroke-width="0.8"/><line x1="298.00" y1="329.10" x2="298.00" y2="332.30" stroke="#505050" stroke-width="0.8"/><line x1="308.40" y1="322.30" x2="308.40" y2="325.50" stroke="#505050" stroke-width="0.8"/><line x1="308.40" y1="329.10" x2="308.40" y2="332.30" stroke="#505050" stroke-width="0.8"/><line x1="318.80" y1="322.30" x2="318.80" y2="325.50" stroke="#505050" stroke-width="0.8"/><line x1="318.80" y1="329.10" x2="318.80" y2="332.30" stroke="#505050" stroke-width="0.8"/><line x1="329.20" y1="322.30" x2="329.20" y2="332.30" stroke="#222" stroke-width="1.2"/><line x1="339.60" y1="322.30" x2="339.60" y2="325.50" stroke="#505050" stroke-width="0.8"/><line x1="339.60" y1="329.10" x2="339.60" y2="332.30" stroke="#505050" stroke-width="0.8"/><line x1="350.00" y1="322.30" x2="350.00" y2="325.50" stroke="#505050" stroke-width="0.8"/><line x1="350.00" y1="329.10" x2="350.00" y2="332.30" stroke="#505050" stroke-width="0.8"/><line x1="360.40" y1="322.30" x2="360.40" y2="325.50" stroke="#505050" stroke-width="0.8"/><line x1="360.40" y1="329.10" x2="360.40" y2="332.30" stroke="#505050" stroke-width="0.8"/><line x1="370.80" y1="322.30" x2="370.80" y2="325.50" stroke="#505050" stroke-width="0.8"/><line x1="370.80" y1="329.10" x2="370.80" y2="332.30" stroke="#505050" stroke-width="0.8"/><line x1="381.20" y1="322.30" x2="381.20" y2="325.50" stroke="#505050" stroke-width="0.8"/><line x1="381.20" y1="329.10" x2="381.20" y2="332.30" stroke="#505050" stroke-width="0.8"/><line x1="391.60" y1="322.30" x2="391.60" y2="332.30" stroke="#222" stroke-width="1.2"/><line x1="402.00" y1="322.30" x2="402.00" y2="325.50" stroke="#505050" stroke-width="0.8"/><line x1="402.00" y1="329.10" x2="402.00" y2="332.30" stroke="#505050" stroke-width="0.8"/><line x1="412.40" y1="322.30" x2="412.40" y2="325.50" stroke="#505050" stroke-width="0.8"/><line x1="412.40" y1="329.10" x2="412.40" y2="332.30" stroke="#505050" stroke-width="0.8"/><line x1="422.80" y1="322.30" x2="422.80" y2="325.50" stroke="#505050" stroke-width="0.8"/><line x1="422.80" y1="329.10" x2="422.80" y2="332.30" stroke="#505050" stroke-width="0.8"/><line x1="433.20" y1="322.30" x2="433.20" y2="325.50" stroke="#505050" stroke-width="0.8"/><line x1="433.20" y1="329.10" x2="433.20" y2="332.30" stroke="#505050" stroke-width="0.8"/><line x1="443.60" y1="322.30" x2="443.60" y2="325.50" stroke="#505050" stroke-width="0.8"/><line x1="443.60" y1="329.10" x2="443.60" y2="332.30" stroke="#505050" stroke-width="0.8"/><line x1="454.00" y1="322.30" x2="454.00" y2="332.30" stroke="#222" stroke-width="1.2"/><line x1="464.40" y1="322.30" x2="464.40" y2="325.50" stroke="#505050" stroke-width="0.8"/><line x1="464.40" y1="329.10" x2="464.40" y2="332.30" stroke="#505050" stroke-width="0.8"/><line x1="474.80" y1="322.30" x2="474.80" y2="325.50" stroke="#505050" stroke-width="0.8"/><line x1="474.80" y1="329.10" x2="474.80" y2="332.30" stroke="#505050" stroke-width="0.8"/><line x1="485.20" y1="322.30" x2="485.20" y2="325.50" stroke="#505050" stroke-width="0.8"/><line x1="485.20" y1="329.10" x2="485.20" y2="332.30" stroke="#505050" stroke-width="0.8"/><line x1="495.60" y1="322.30" x2="495.60" y2="325.50" stroke="#505050" stroke-width="0.8"/><line x1="495.60" y1="329.10" x2="495.60" y2="332.30" stroke="#505050" stroke-width="0.8"/><line x1="506.00" y1="322.30" x2="506.00" y2="325.50" stroke="#505050" stroke-width="0.8"/><line x1="506.00" y1="329.10" x2="506.00" y2="332.30" stroke="#505050" stroke-width="0.8"/><line x1="516.40" y1="322.30" x2="516.40" y2="332.30" stroke="#222" stroke-width="1.2"/><line x1="526.80" y1="322.30" x2="526.80" y2="325.50" stroke="#505050" stroke-width="0.8"/><line x1="526.80" y1="329.10" x2="526.80" y2="332.30" stroke="#505050" stroke-width="0.8"/><line x1="537.20" y1="322.30" x2="537.20" y2="325.50" stroke="#505050" stroke-width="0.8"/><line x1="537.20" y1="329.10" x2="537.20" y2="332.30" stroke="#505050" stroke-width="0.8"/><line x1="547.60" y1="322.30" x2="547.60" y2="325.50" stroke="#505050" stroke-width="0.8"/><line x1="547.60" y1="329.10" x2="547.60" y2="332.30" stroke="#505050" stroke-width="0.8"/><line x1="558.00" y1="322.30" x2="558.00" y2="325.50" stroke="#505050" stroke-width="0.8"/><line x1="558.00" y1="329.10" x2="558.00" y2="332.30" stroke="#505050" stroke-width="0.8"/><line x1="568.40" y1="322.30" x2="568.40" y2="325.50" stroke="#505050" stroke-width="0.8"/><line x1="568.40" y1="329.10" x2="568.40" y2="332.30" stroke="#505050" stroke-width="0.8"/><line x1="578.80" y1="322.30" x2="578.80" y2="332.30" stroke="#222" stroke-width="1.2"/><line x1="589.20" y1="322.30" x2="589.20" y2="325.50" stroke="#505050" stroke-width="0.8"/><line x1="589.20" y1="329.10" x2="589.20" y2="332.30" stroke="#505050" stroke-width="0.8"/><line x1="599.60" y1="322.30" x2="599.60" y2="325.50" stroke="#505050" stroke-width="0.8"/><line x1="599.60" y1="329.10" x2="599.60" y2="332.30" stroke="#505050" stroke-width="0.8"/><line x1="610.00" y1="322.30" x2="610.00" y2="325.50" stroke="#505050" stroke-width="0.8"/><line x1="610.00" y1="329.10" x2="610.00" y2="332.30" stroke="#505050" stroke-width="0.8"/><line x1="620.40" y1="322.30" x2="620.40" y2="325.50" stroke="#505050" stroke-width="0.8"/><line x1="620.40" y1="329.10" x2="620.40" y2="332.30" stroke="#505050" stroke-width="0.8"/><line x1="630.80" y1="322.30" x2="630.80" y2="325.50" stroke="#505050" stroke-width="0.8"/><line x1="630.80" y1="329.10" x2="630.80" y2="332.30" stroke="#505050" stroke-width="0.8"/><line x1="641.20" y1="322.30" x2="641.20" y2="332.30" stroke="#222" stroke-width="1.2"/><line x1="651.60" y1="322.30" x2="651.60" y2="325.50" stroke="#505050" stroke-width="0.8"/><line x1="651.60" y1="329.10" x2="651.60" y2="332.30" stroke="#505050" stroke-width="0.8"/><line x1="662.00" y1="322.30" x2="662.00" y2="325.50" stroke="#505050" stroke-width="0.8"/><line x1="662.00" y1="329.10" x2="662.00" y2="332.30" stroke="#505050" stroke-width="0.8"/><line x1="672.40" y1="322.30" x2="672.40" y2="325.50" stroke="#505050" stroke-width="0.8"/><line x1="672.40" y1="329.10" x2="672.40" y2="332.30" stroke="#505050" stroke-width="0.8"/><line x1="682.80" y1="322.30" x2="682.80" y2="325.50" stroke="#505050" stroke-width="0.8"/><line x1="682.80" y1="329.10" x2="682.80" y2="332.30" stroke="#505050" stroke-width="0.8"/><line x1="693.20" y1="322.30" x2="693.20" y2="325.50" stroke="#505050" stroke-width="0.8"/><line x1="693.20" y1="329.10" x2="693.20" y2="332.30" stroke="#505050" stroke-width="0.8"/><line x1="703.60" y1="322.30" x2="703.60" y2="332.30" stroke="#222" stroke-width="1.2"/><text x="79.60" y="547.80" font-size="8.2" text-anchor="middle" letter-spacing="0" >0</text><text x="142.00" y="547.80" font-size="8.2" text-anchor="middle" letter-spacing="0" >1</text><text x="204.40" y="547.80" font-size="8.2" text-anchor="middle" letter-spacing="0" >2</text><text x="266.80" y="547.80" font-size="8.2" text-anchor="middle" letter-spacing="0" >3</text><text x="329.20" y="547.80" font-size="8.2" text-anchor="middle" letter-spacing="0" >4</text><text x="391.60" y="547.80" font-size="8.2" text-anchor="middle" letter-spacing="0" >5</text><text x="454.00" y="547.80" font-size="8.2" text-anchor="middle" letter-spacing="0" >6</text><text x="516.40" y="547.80" font-size="8.2" text-anchor="middle" letter-spacing="0" >7</text><text x="578.80" y="547.80" font-size="8.2" text-anchor="middle" letter-spacing="0" >8</text><text x="641.20" y="547.80" font-size="8.2" text-anchor="middle" letter-spacing="0" >9</text><text x="703.60" y="547.80" font-size="8.2" text-anchor="middle" letter-spacing="0" >10</text><text x="400.50" y="557.80" font-size="8.6" text-anchor="middle" letter-spacing="0.6" >Time&#160;&#160;(min)</text><polyline points="79.6,143.72 80.2,141.69 80.8,142.99 81.4,143.54 82.0,143.88 82.6,146.84 83.2,143.50 83.8,145.26 84.4,141.51 85.0,141.15 85.6,142.22 86.2,142.34 86.8,141.27 87.4,142.38 88.0,144.22 88.6,142.07 89.2,144.10 89.8,141.96 90.4,141.50 91.0,141.92 91.6,143.86 92.2,143.90 92.8,141.99 93.4,143.62 94.0,145.69 94.6,142.16 95.2,141.89 95.8,142.11 96.4,143.90 97.0,141.68 97.6,137.97 98.2,139.83 98.8,141.97 99.4,143.31 100.0,142.24 100.6,144.61 101.2,141.81 101.8,141.13 102.4,141.88 103.0,141.58 103.6,141.66 104.2,140.60 104.8,142.63 105.4,139.99 106.0,141.55 106.6,139.83 107.2,143.17 107.8,141.47 108.4,142.16 109.0,143.28 109.6,143.52 110.2,143.29 110.8,143.52 111.4,143.36 112.0,140.10 112.6,142.60 113.2,143.51 113.8,143.67 114.4,141.64 115.0,143.54 115.6,141.03 116.2,142.70 116.8,143.55 117.4,142.93 118.0,144.04 118.6,145.95 119.2,141.51 119.8,142.58 120.4,142.50 121.0,142.19 121.6,144.42 122.2,144.22 122.8,144.04 123.4,144.06 124.0,141.33 124.6,142.55 125.2,142.30 125.8,141.24 126.4,143.45 127.0,143.86 127.6,144.87 128.2,142.59 128.8,140.89 129.4,142.80 130.0,143.10 130.6,141.81 131.2,144.59 131.8,144.14 132.4,143.02 133.0,141.60 133.6,141.47 134.2,142.94 134.8,141.78 135.4,142.72 136.0,141.71 136.6,141.76 137.2,142.56 137.8,143.08 138.4,142.13 139.0,141.16 139.6,141.26 140.2,142.03 140.8,142.01 141.4,144.44 142.0,141.78 142.6,143.80 143.2,141.02 143.8,143.12 144.4,141.63 145.0,142.53 145.6,143.53 146.2,141.11 146.8,142.75 147.4,143.83 148.0,142.00 148.6,142.30 149.2,141.48 149.8,141.80 150.4,142.38 151.0,142.38 151.6,141.29 152.2,143.81 152.8,143.56 153.4,145.57 154.0,143.51 154.6,142.00 155.2,139.32 155.8,142.93 156.4,141.25 157.0,142.25 157.6,141.70 158.2,142.72 158.8,142.35 159.4,141.98 160.0,143.09 160.6,142.87 161.2,143.06 161.8,143.60 162.4,141.24 163.0,143.88 163.6,143.05 164.2,143.94 164.8,141.05 165.4,140.55 166.0,142.58 166.6,142.36 167.2,143.90 167.8,141.82 168.4,143.72 169.0,143.37 169.6,143.00 170.2,142.79 170.8,142.09 171.4,144.31 172.0,143.15 172.6,140.92 173.2,142.60 173.8,141.14 174.4,142.20 175.0,143.42 175.6,143.07 176.2,139.46 176.8,142.42 177.4,139.24 178.0,142.88 178.6,138.73 179.2,140.75 179.8,141.80 180.4,143.67 181.0,140.61 181.6,139.79 182.2,140.86 182.8,141.43 183.4,143.75 184.0,139.72 184.6,139.86 185.2,138.43 185.8,144.21 186.4,141.73 187.0,139.56 187.6,139.30 188.2,142.84 188.8,141.62 189.4,139.50 190.0,142.55 190.6,141.69 191.2,138.67 191.8,141.73 192.4,141.47 193.0,139.56 193.6,142.16 194.2,139.74 194.8,140.62 195.4,142.94 196.0,141.54 196.6,139.15 197.2,141.91 197.8,141.63 198.4,141.27 199.0,142.12 199.6,140.81 200.2,139.49 200.8,142.31 201.4,142.94 202.0,140.64 202.6,140.71 203.2,139.19 203.8,140.90 204.4,140.26 205.0,141.18 205.6,141.26 206.2,142.76 206.8,142.68 207.4,141.48 208.0,142.68 208.6,140.33 209.2,141.97 209.8,140.49 210.4,143.84 211.0,141.40 211.6,141.86 212.2,143.04 212.8,141.23 213.4,143.44 214.0,143.28 214.6,142.35 215.2,140.86 215.8,140.59 216.4,141.67 217.0,142.89 217.6,142.58 218.2,141.30 218.8,141.65 219.4,140.45 220.0,140.66 220.6,143.50 221.2,142.56 221.8,141.14 222.4,143.18 223.0,142.61 223.6,141.43 224.2,141.44 224.8,141.48 225.4,143.44 226.0,142.39 226.6,144.07 227.2,141.51 227.8,142.88 228.4,141.79 229.0,142.54 229.6,143.38 230.2,141.00 230.8,141.54 231.4,142.61 232.0,138.36 232.6,143.42 233.2,139.46 233.8,142.17 234.4,142.95 235.0,142.65 235.6,137.14 236.2,142.53 236.8,139.55 237.4,141.41 238.0,142.78 238.6,144.07 239.2,143.53 239.8,142.60 240.4,145.29 241.0,140.72 241.6,146.77 242.2,145.60 242.8,142.78 243.4,141.90 244.0,141.79 244.6,141.77 245.2,143.05 245.8,143.79 246.4,143.19 247.0,143.32 247.6,140.82 248.2,141.67 248.8,143.45 249.4,142.02 250.0,141.51 250.6,143.75 251.2,142.95 251.8,142.85 252.4,140.24 253.0,142.64 253.6,141.01 254.2,142.53 254.8,143.18 255.4,146.89 256.0,145.19 256.6,144.48 257.2,141.09 257.8,142.21 258.4,144.40 259.0,136.24 259.6,144.71 260.2,141.71 260.8,142.48 261.4,142.54 262.0,141.74 262.6,143.73 263.2,142.01 263.8,143.47 264.4,140.59 265.0,143.22 265.6,143.53 266.2,140.27 266.8,142.89 267.4,143.25 268.0,140.40 268.6,141.68 269.2,143.30 269.8,144.12 270.4,144.11 271.0,140.40 271.6,141.48 272.2,141.38 272.8,142.70 273.4,142.05 274.0,143.25 274.6,142.72 275.2,144.88 275.8,149.08 276.4,138.31 277.0,142.82 277.6,143.23 278.2,143.53 278.8,140.45 279.4,138.92 280.0,143.89 280.6,146.94 281.2,143.88 281.8,142.69 282.4,141.83 283.0,141.48 283.6,142.21 284.2,148.74 284.8,141.81 285.4,141.53 286.0,142.51 286.6,144.45 287.2,140.96 287.8,140.72 288.4,142.80 289.0,143.22 289.6,142.60 290.2,135.12 290.8,142.00 291.4,142.35 292.0,143.02 292.6,141.38 293.2,144.25 293.8,139.06 294.4,143.08 295.0,140.53 295.6,141.14 296.2,141.06 296.8,143.82 297.4,143.14 298.0,141.14 298.6,141.15 299.2,141.37 299.8,145.29 300.4,143.26 301.0,141.70 301.6,141.69 302.2,139.83 302.8,143.98 303.4,141.83 304.0,141.63 304.6,141.31 305.2,141.13 305.8,142.18 306.4,141.80 307.0,142.80 307.6,141.40 308.2,141.74 308.8,142.24 309.4,141.40 310.0,137.77 310.6,140.49 311.2,143.15 311.8,141.72 312.4,142.35 313.0,141.14 313.6,140.32 314.2,142.60 314.8,143.05 315.4,141.96 316.0,142.71 316.6,137.56 317.2,140.93 317.8,142.28 318.4,139.75 319.0,140.52 319.6,141.11 320.2,140.38 320.8,141.39 321.4,138.64 322.0,139.68 322.6,140.22 323.2,140.60 323.8,141.46 324.4,141.96 325.0,141.64 325.6,142.84 326.2,140.22 326.8,140.79 327.4,140.10 328.0,141.06 328.6,141.14 329.2,141.31 329.8,140.75 330.4,140.94 331.0,141.50 331.6,142.57 332.2,142.50 332.8,141.38 333.4,140.97 334.0,140.35 334.6,142.46 335.2,141.43 335.8,141.56 336.4,143.57 337.0,140.81 337.6,140.54 338.2,142.01 338.8,142.68 339.4,141.19 340.0,142.32 340.6,144.41 341.2,141.57 341.8,144.49 342.4,141.38 343.0,141.85 343.6,136.90 344.2,141.97 344.8,140.13 345.4,141.78 346.0,140.26 346.6,145.98 347.2,142.85 347.8,144.59 348.4,142.43 349.0,144.31 349.6,141.21 350.2,142.62 350.8,142.82 351.4,142.93 352.0,150.33 352.6,142.36 353.2,143.85 353.8,142.67 354.4,142.54 355.0,142.03 355.6,140.88 356.2,142.20 356.8,142.32 357.4,143.19 358.0,141.51 358.6,143.54 359.2,143.44 359.8,142.13 360.4,144.07 361.0,141.36 361.6,141.93 362.2,141.90 362.8,139.90 363.4,140.81 364.0,140.92 364.6,142.16 365.2,140.93 365.8,142.61 366.4,142.13 367.0,142.40 367.6,142.01 368.2,140.89 368.8,140.64 369.4,142.97 370.0,140.23 370.6,141.09 371.2,143.39 371.8,140.40 372.4,142.07 373.0,144.92 373.6,142.47 374.2,141.31 374.8,141.18 375.4,145.33 376.0,143.28 376.6,140.80 377.2,143.76 377.8,140.74 378.4,139.40 379.0,141.19 379.6,139.81 380.2,141.62 380.8,139.48 381.4,140.76 382.0,145.61 382.6,141.57 383.2,143.09 383.8,140.35 384.4,142.39 385.0,141.70 385.6,141.41 386.2,141.27 386.8,143.29 387.4,144.73 388.0,143.39 388.6,140.75 389.2,142.43 389.8,141.51 390.4,142.99 391.0,143.81 391.6,142.29 392.2,142.57 392.8,140.37 393.4,138.94 394.0,142.08 394.6,142.69 395.2,144.24 395.8,142.47 396.4,141.28 397.0,140.21 397.6,138.74 398.2,141.20 398.8,142.01 399.4,145.87 400.0,141.79 400.6,143.17 401.2,142.27 401.8,142.03 402.4,140.69 403.0,143.04 403.6,142.35 404.2,142.50 404.8,140.49 405.4,143.21 406.0,141.23 406.6,143.53 407.2,140.09 407.8,142.73 408.4,142.23 409.0,140.77 409.6,141.87 410.2,143.08 410.8,142.11 411.4,144.30 412.0,137.22 412.6,142.37 413.2,139.17 413.8,139.92 414.4,142.24 415.0,141.11 415.6,140.50 416.2,143.78 416.8,140.68 417.4,143.01 418.0,142.30 418.6,136.87 419.2,139.42 419.8,139.79 420.4,142.18 421.0,144.06 421.6,139.97 422.2,142.84 422.8,140.52 423.4,140.30 424.0,141.70 424.6,143.02 425.2,141.76 425.8,144.71 426.4,143.90 427.0,143.87 427.6,140.03 428.2,142.34 428.8,142.12 429.4,141.45 430.0,141.77 430.6,141.67 431.2,140.64 431.8,142.26 432.4,139.58 433.0,140.90 433.6,142.00 434.2,142.81 434.8,147.50 435.4,141.16 436.0,139.05 436.6,141.14 437.2,139.35 437.8,140.98 438.4,139.82 439.0,141.23 439.6,139.80 440.2,140.56 440.8,141.46 441.4,141.61 442.0,142.25 442.6,141.66 443.2,142.45 443.8,139.61 444.4,141.28 445.0,143.03 445.6,140.72 446.2,143.47 446.8,140.57 447.4,143.69 448.0,143.66 448.6,146.60 449.2,141.47 449.8,141.97 450.4,142.67 451.0,139.53 451.6,141.13 452.2,143.31 452.8,141.32 453.4,144.01 454.0,141.94 454.6,142.83 455.2,142.30 455.8,143.34 456.4,142.80 457.0,141.37 457.6,140.26 458.2,143.45 458.8,142.09 459.4,141.77 460.0,142.79 460.6,141.28 461.2,141.30 461.8,141.17 462.4,138.05 463.0,140.96 463.6,142.85 464.2,141.86 464.8,141.20 465.4,139.81 466.0,142.32 466.6,142.09 467.2,141.81 467.8,141.42 468.4,141.30 469.0,140.29 469.6,142.07 470.2,142.88 470.8,142.57 471.4,141.75 472.0,141.54 472.6,143.70 473.2,142.48 473.8,140.08 474.4,141.62 475.0,136.39 475.6,142.77 476.2,142.99 476.8,144.09 477.4,141.63 478.0,138.55 478.6,141.72 479.2,141.18 479.8,143.92 480.4,143.66 481.0,141.81 481.6,142.97 482.2,140.96 482.8,140.79 483.4,142.69 484.0,144.47 484.6,143.35 485.2,143.90 485.8,144.24 486.4,142.51 487.0,141.71 487.6,142.75 488.2,143.06 488.8,142.00 489.4,142.43 490.0,141.36 490.6,143.29 491.2,143.72 491.8,141.63 492.4,143.87 493.0,140.74 493.6,143.55 494.2,145.27 494.8,140.45 495.4,142.96 496.0,142.30 496.6,143.50 497.2,142.55 497.8,144.04 498.4,136.80 499.0,141.16 499.6,142.66 500.2,140.90 500.8,142.35 501.4,142.21 502.0,144.08 502.6,143.60 503.2,143.26 503.8,140.20 504.4,141.53 505.0,142.92 505.6,141.62 506.2,146.36 506.8,141.57 507.4,141.19 508.0,143.12 508.6,143.54 509.2,145.86 509.8,142.03 510.4,138.55 511.0,142.29 511.6,146.79 512.2,143.26 512.8,144.54 513.4,142.40 514.0,144.65 514.6,142.59 515.2,140.93 515.8,140.00 516.4,142.84 517.0,142.34 517.6,142.99 518.2,141.26 518.8,139.22 519.4,139.62 520.0,143.26 520.6,141.24 521.2,140.84 521.8,147.75 522.4,143.80 523.0,142.46 523.6,142.89 524.2,144.27 524.8,144.66 525.4,142.10 526.0,142.31 526.6,143.88 527.2,141.01 527.8,142.99 528.4,138.68 529.0,141.80 529.6,144.67 530.2,141.30 530.8,139.54 531.4,142.53 532.0,145.08 532.6,143.09 533.2,143.50 533.8,143.59 534.4,141.07 535.0,141.74 535.6,140.69 536.2,143.45 536.8,143.03 537.4,143.25 538.0,141.97 538.6,142.57 539.2,141.58 539.8,141.37 540.4,142.74 541.0,141.22 541.6,141.82 542.2,142.73 542.8,143.38 543.4,140.47 544.0,142.19 544.6,143.43 545.2,141.22 545.8,143.74 546.4,144.96 547.0,141.32 547.6,142.59 548.2,144.03 548.8,141.27 549.4,141.49 550.0,144.60 550.6,142.76 551.2,141.62 551.8,141.89 552.4,143.10 553.0,143.35 553.6,142.55 554.2,145.77 554.8,141.92 555.4,142.17 556.0,138.06 556.6,145.21 557.2,146.08 557.8,144.94 558.4,145.95 559.0,143.21 559.6,143.93 560.2,141.65 560.8,142.57 561.4,143.96 562.0,142.69 562.6,141.12 563.2,140.53 563.8,142.91 564.4,141.42 565.0,143.50 565.6,141.48 566.2,140.12 566.8,142.27 567.4,142.86 568.0,144.13 568.6,143.80 569.2,141.97 569.8,142.53 570.4,144.55 571.0,140.93 571.6,143.57 572.2,142.35 572.8,142.16 573.4,143.87 574.0,141.38 574.6,142.21 575.2,142.76 575.8,144.22 576.4,143.69 577.0,142.56 577.6,138.74 578.2,143.17 578.8,144.38 579.4,144.29 580.0,142.74 580.6,143.78 581.2,143.21 581.8,141.93 582.4,142.80 583.0,142.92 583.6,141.79 584.2,142.00 584.8,141.65 585.4,142.47 586.0,143.28 586.6,142.90 587.2,142.42 587.8,147.54 588.4,144.32 589.0,143.82 589.6,143.24 590.2,142.56 590.8,138.86 591.4,143.15 592.0,142.00 592.6,142.51 593.2,139.31 593.8,142.55 594.4,142.06 595.0,140.01 595.6,140.83 596.2,142.81 596.8,142.67 597.4,139.19 598.0,135.86 598.6,142.67 599.2,140.20 599.8,143.89 600.4,143.76 601.0,142.36 601.6,141.19 602.2,147.35 602.8,142.20 603.4,140.08 604.0,142.73 604.6,143.91 605.2,140.71 605.8,139.67 606.4,141.28 607.0,142.67 607.6,142.21 608.2,139.32 608.8,140.16 609.4,144.73 610.0,141.65 610.6,141.07 611.2,141.53 611.8,141.18 612.4,138.79 613.0,142.92 613.6,141.37 614.2,139.85 614.8,143.13 615.4,140.80 616.0,145.50 616.6,143.37 617.2,142.37 617.8,139.83 618.4,146.54 619.0,143.44 619.6,139.56 620.2,138.36 620.8,140.82 621.4,142.37 622.0,143.09 622.6,140.44 623.2,143.03 623.8,139.23 624.4,143.95 625.0,143.29 625.6,142.46 626.2,142.51 626.8,140.91 627.4,140.97 628.0,139.16 628.6,142.00 629.2,139.18 629.8,141.57 630.4,139.44 631.0,139.50 631.6,142.41 632.2,141.10 632.8,140.13 633.4,141.27 634.0,141.64 634.6,141.14 635.2,143.94 635.8,142.13 636.4,142.03 637.0,140.53 637.6,140.45 638.2,144.17 638.8,143.11 639.4,146.21 640.0,141.63 640.6,143.39 641.2,140.27 641.8,141.90 642.4,137.21 643.0,142.39 643.6,142.37 644.2,143.82 644.8,143.12 645.4,141.31 646.0,141.82 646.6,141.33 647.2,141.43 647.8,140.83 648.4,142.41 649.0,138.20 649.6,141.07 650.2,141.08 650.8,142.87 651.4,143.44 652.0,142.52 652.6,143.42 653.2,142.93 653.8,142.50 654.4,141.73 655.0,141.41 655.6,142.09 656.2,142.68 656.8,141.44 657.4,140.73 658.0,141.59 658.6,141.60 659.2,140.21 659.8,143.09 660.4,141.28 661.0,141.49 661.6,145.62 662.2,139.46 662.8,144.12 663.4,141.44 664.0,146.70 664.6,140.52 665.2,140.81 665.8,139.72 666.4,142.41 667.0,144.77 667.6,140.10 668.2,141.97 668.8,141.98 669.4,139.84 670.0,142.51 670.6,140.26 671.2,141.23 671.8,142.71 672.4,143.16 673.0,139.81 673.6,145.67 674.2,142.08 674.8,141.89 675.4,140.93 676.0,143.54 676.6,143.07 677.2,142.54 677.8,140.46 678.4,141.60 679.0,142.04 679.6,140.41 680.2,141.56 680.8,142.24 681.4,138.25 682.0,141.89 682.6,142.22 683.2,140.21 683.8,142.74 684.4,143.27 685.0,142.08 685.6,142.11 686.2,141.29 686.8,143.19 687.4,142.07 688.0,140.84 688.6,141.08 689.2,140.12 689.8,144.57 690.4,142.24 691.0,142.86 691.6,141.43 692.2,144.33" fill="none" stroke="#222" stroke-width="0.8" opacity="0.85"/><polyline points="79.6,141.19 80.2,141.54 80.8,141.49 81.4,141.77 82.0,141.98 82.6,142.52 83.2,142.07 83.8,142.35 84.4,143.61 85.0,143.71 85.6,142.71 86.2,142.89 86.8,142.68 87.4,142.09 88.0,141.95 88.6,142.15 89.2,142.69 89.8,142.88 90.4,142.20 91.0,142.42 91.6,141.36 92.2,141.36 92.8,142.85 93.4,142.84 94.0,140.67 94.6,140.82 95.2,140.67 95.8,141.45 96.4,141.53 97.0,141.85 97.6,143.05 98.2,143.86 98.8,143.20 99.4,143.28 100.0,142.84 100.6,142.59 101.2,143.26 101.8,142.81 102.4,143.25 103.0,143.58 103.6,143.19 104.2,143.08 104.8,143.34 105.4,143.43 106.0,142.89 106.6,143.35 107.2,141.96 107.8,141.42 108.4,140.94 109.0,141.77 109.6,142.86 110.2,142.65 110.8,142.80 111.4,141.98 112.0,143.39 112.6,142.72 113.2,142.64 113.8,142.13 114.4,141.68 115.0,142.38 115.6,142.17 116.2,142.77 116.8,142.47 117.4,142.08 118.0,142.26 118.6,142.24 119.2,142.56 119.8,142.23 120.4,142.42 121.0,141.93 121.6,141.68 122.2,141.99 122.8,141.51 123.4,141.80 124.0,142.80 124.6,142.70 125.2,142.85 125.8,142.81 126.4,141.82 127.0,141.10 127.6,142.63 128.2,141.92 128.8,141.90 129.4,141.82 130.0,141.77 130.6,141.71 131.2,141.91 131.8,142.32 132.4,142.04 133.0,141.68 133.6,141.82 134.2,142.79 134.8,142.44 135.4,141.14 136.0,142.15 136.6,142.91 137.2,143.51 137.8,143.30 138.4,142.56 139.0,142.33 139.6,142.04 140.2,142.19 140.8,142.41 141.4,143.52 142.0,142.75 142.6,142.22 143.2,142.44 143.8,141.17 144.4,141.03 145.0,141.86 145.6,141.60 146.2,142.47 146.8,142.36 147.4,141.41 148.0,142.21 148.6,142.12 149.2,143.05 149.8,142.85 150.4,143.34 151.0,143.28 151.6,143.50 152.2,142.72 152.8,142.82 153.4,140.94 154.0,141.87 154.6,142.71 155.2,142.62 155.8,142.85 156.4,142.66 157.0,142.64 157.6,143.14 158.2,142.64 158.8,142.19 159.4,141.58 160.0,142.36 160.6,141.19 161.2,141.98 161.8,141.77 162.4,142.13 163.0,142.92 163.6,143.05 164.2,142.31 164.8,141.81 165.4,142.27 166.0,141.28 166.6,141.68 167.2,142.71 167.8,142.37 168.4,142.73 169.0,142.53 169.6,142.43 170.2,142.76 170.8,141.78 171.4,141.25 172.0,141.66 172.6,142.46 173.2,141.64 173.8,141.09 174.4,141.58 175.0,141.14 175.6,141.75 176.2,141.17 176.8,140.82 177.4,140.96 178.0,140.80 178.6,141.28 179.2,141.25 179.8,141.95 180.4,141.81 181.0,142.48 181.6,141.66 182.2,140.96 182.8,141.45 183.4,140.76 184.0,140.70 184.6,141.41 185.2,140.42 185.8,140.74 186.4,140.87 187.0,142.12 187.6,141.88 188.2,140.65 188.8,141.24 189.4,140.45 190.0,141.11 190.6,140.48 191.2,140.51 191.8,140.67 192.4,140.38 193.0,140.16 193.6,140.89 194.2,141.49 194.8,142.30 195.4,141.99 196.0,142.44 196.6,142.26 197.2,141.35 197.8,141.53 198.4,141.87 199.0,140.99 199.6,141.75 200.2,142.91 200.8,141.32 201.4,140.80 202.0,141.32 202.6,140.72 203.2,140.39 203.8,140.67 204.4,141.41 205.0,141.64 205.6,141.49 206.2,141.48 206.8,141.41 207.4,141.15 208.0,141.15 208.6,141.46 209.2,141.14 209.8,141.45 210.4,140.48 211.0,141.29 211.6,142.02 212.2,141.87 212.8,141.52 213.4,140.66 214.0,141.20 214.6,141.66 215.2,141.64 215.8,141.72 216.4,142.40 217.0,142.79 217.6,142.81 218.2,141.93 218.8,141.52 219.4,141.66 220.0,140.86 220.6,140.73 221.2,141.66 221.8,140.64 222.4,140.72 223.0,141.93 223.6,141.75 224.2,142.09 224.8,141.96 225.4,142.41 226.0,142.19 226.6,141.86 227.2,142.28 227.8,141.08 228.4,141.59 229.0,142.80 229.6,142.35 230.2,141.67 230.8,141.78 231.4,142.48 232.0,141.84 232.6,142.56 233.2,142.38 233.8,141.88 234.4,143.36 235.0,143.42 235.6,142.53 236.2,141.59 236.8,142.18 237.4,141.26 238.0,140.49 238.6,140.37 239.2,140.34 239.8,140.98 240.4,140.85 241.0,140.73 241.6,141.52 242.2,140.79 242.8,141.67 243.4,141.37 244.0,141.73 244.6,140.47 245.2,141.08 245.8,143.04 246.4,142.74 247.0,142.58 247.6,142.79 248.2,142.24 248.8,141.99 249.4,141.47 250.0,142.37 250.6,142.46 251.2,143.80 251.8,142.43 252.4,143.25 253.0,142.73 253.6,143.40 254.2,141.71 254.8,142.48 255.4,141.08 256.0,140.68 256.6,140.88 257.2,141.82 257.8,141.14 258.4,141.26 259.0,141.82 259.6,141.74 260.2,142.43 260.8,141.88 261.4,143.02 262.0,142.06 262.6,141.79 263.2,142.26 263.8,142.63 264.4,142.33 265.0,141.77 265.6,141.18 266.2,141.41 266.8,142.23 267.4,142.32 268.0,142.78 268.6,142.74 269.2,142.61 269.8,142.28 270.4,142.72 271.0,142.78 271.6,142.21 272.2,142.13 272.8,142.69 273.4,141.46 274.0,142.45 274.6,142.92 275.2,142.87 275.8,142.11 276.4,142.37 277.0,141.29 277.6,141.49 278.2,140.99 278.8,142.68 279.4,142.23 280.0,141.76 280.6,141.62 281.2,141.88 281.8,142.71 282.4,142.62 283.0,142.28 283.6,142.62 284.2,141.73 284.8,142.29 285.4,142.66 286.0,142.69 286.6,142.45 287.2,142.88 287.8,142.08 288.4,142.18 289.0,141.53 289.6,142.35 290.2,142.28 290.8,142.73 291.4,142.14 292.0,141.43 292.6,141.80 293.2,142.58 293.8,142.56 294.4,142.89 295.0,142.45 295.6,142.81 296.2,142.02 296.8,142.05 297.4,141.87 298.0,141.58 298.6,141.37 299.2,141.79 299.8,142.06 300.4,142.60 301.0,142.83 301.6,142.58 302.2,142.61 302.8,142.68 303.4,142.33 304.0,141.30 304.6,140.78 305.2,141.32 305.8,141.89 306.4,141.76 307.0,141.40 307.6,140.52 308.2,141.81 308.8,141.85 309.4,141.53 310.0,143.04 310.6,142.44 311.2,141.44 311.8,141.42 312.4,142.10 313.0,141.15 313.6,141.81 314.2,142.12 314.8,142.21 315.4,141.97 316.0,142.42 316.6,141.91 317.2,142.36 317.8,141.48 318.4,140.71 319.0,141.88 319.6,141.64 320.2,140.92 320.8,140.87 321.4,140.48 322.0,140.50 322.6,140.98 323.2,141.37 323.8,141.79 324.4,141.04 325.0,140.37 325.6,140.72 326.2,142.39 326.8,142.93 327.4,142.93 328.0,142.28 328.6,142.44 329.2,142.20 329.8,142.17 330.4,141.21 331.0,141.35 331.6,141.88 332.2,141.71 332.8,141.62 333.4,141.68 334.0,140.89 334.6,142.60 335.2,142.36 335.8,142.02 336.4,141.96 337.0,141.53 337.6,141.83 338.2,141.47 338.8,142.26 339.4,141.91 340.0,141.32 340.6,142.11 341.2,141.60 341.8,142.21 342.4,142.35 343.0,142.23 343.6,142.01 344.2,141.88 344.8,142.49 345.4,143.14 346.0,144.16 346.6,143.11 347.2,142.61 347.8,142.52 348.4,142.48 349.0,142.77 349.6,143.41 350.2,143.21 350.8,143.29 351.4,141.99 352.0,142.66 352.6,143.23 353.2,144.01 353.8,143.81 354.4,144.27 355.0,143.21 355.6,142.42 356.2,143.40 356.8,142.31 357.4,143.48 358.0,143.39 358.6,142.28 359.2,142.07 359.8,142.16 360.4,141.72 361.0,141.34 361.6,142.39 362.2,141.59 362.8,142.15 363.4,141.31 364.0,141.66 364.6,141.77 365.2,141.70 365.8,142.09 366.4,142.35 367.0,141.86 367.6,142.82 368.2,141.61 368.8,141.80 369.4,141.83 370.0,140.96 370.6,140.94 371.2,140.77 371.8,140.98 372.4,140.94 373.0,140.11 373.6,140.37 374.2,139.71 374.8,139.77 375.4,141.32 376.0,141.31 376.6,141.54 377.2,142.75 377.8,142.02 378.4,141.52 379.0,141.15 379.6,141.16 380.2,141.14 380.8,140.83 381.4,140.34 382.0,140.61 382.6,142.13 383.2,141.23 383.8,141.30 384.4,142.36 385.0,142.68 385.6,141.73 386.2,141.35 386.8,141.22 387.4,141.52 388.0,143.07 388.6,142.16 389.2,142.32 389.8,141.64 390.4,141.91 391.0,141.85 391.6,140.82 392.2,140.26 392.8,140.81 393.4,141.29 394.0,142.26 394.6,140.98 395.2,140.56 395.8,140.50 396.4,140.76 397.0,143.42 397.6,142.78 398.2,142.17 398.8,142.44 399.4,142.65 400.0,141.71 400.6,141.63 401.2,142.41 401.8,142.37 402.4,141.67 403.0,140.55 403.6,141.55 404.2,142.51 404.8,141.86 405.4,142.17 406.0,142.70 406.6,142.38 407.2,142.78 407.8,141.72 408.4,141.28 409.0,141.20 409.6,141.44 410.2,142.09 410.8,142.92 411.4,140.89 412.0,140.82 412.6,141.45 413.2,141.38 413.8,141.56 414.4,140.49 415.0,141.88 415.6,142.06 416.2,142.08 416.8,141.31 417.4,141.24 418.0,141.19 418.6,142.46 419.2,141.69 419.8,140.78 420.4,140.58 421.0,141.09 421.6,139.60 422.2,140.14 422.8,140.18 423.4,140.33 424.0,141.32 424.6,142.22 425.2,142.02 425.8,141.41 426.4,141.94 427.0,141.35 427.6,140.90 428.2,140.43 428.8,139.85 429.4,140.74 430.0,141.63 430.6,142.17 431.2,142.04 431.8,143.31 432.4,142.89 433.0,142.36 433.6,142.38 434.2,141.26 434.8,141.71 435.4,141.91 436.0,141.71 436.6,140.71 437.2,141.22 437.8,142.13 438.4,140.97 439.0,141.07 439.6,141.27 440.2,140.86 440.8,140.56 441.4,140.45 442.0,140.84 442.6,141.44 443.2,140.92 443.8,141.51 444.4,141.55 445.0,142.97 445.6,141.97 446.2,140.49 446.8,141.90 447.4,141.76 448.0,141.62 448.6,141.35 449.2,141.24 449.8,141.01 450.4,141.51 451.0,142.04 451.6,142.07 452.2,141.56 452.8,142.14 453.4,141.99 454.0,140.50 454.6,140.70 455.2,141.09 455.8,141.57 456.4,142.21 457.0,142.72 457.6,142.42 458.2,142.02 458.8,141.32 459.4,141.45 460.0,141.66 460.6,141.87 461.2,142.64 461.8,142.61 462.4,141.57 463.0,140.81 463.6,140.09 464.2,141.55 464.8,140.42 465.4,140.68 466.0,140.60 466.6,140.20 467.2,140.60 467.8,141.34 468.4,141.54 469.0,141.83 469.6,142.43 470.2,142.34 470.8,142.09 471.4,140.80 472.0,141.39 472.6,141.63 473.2,141.54 473.8,140.18 474.4,141.16 475.0,141.88 475.6,142.30 476.2,141.79 476.8,141.84 477.4,141.33 478.0,141.36 478.6,141.28 479.2,141.94 479.8,142.58 480.4,143.01 481.0,142.71 481.6,142.13 482.2,141.11 482.8,141.58 483.4,142.23 484.0,142.18 484.6,142.18 485.2,142.55 485.8,143.34 486.4,142.63 487.0,142.71 487.6,143.62 488.2,143.03 488.8,142.57 489.4,142.09 490.0,142.76 490.6,142.84 491.2,143.13 491.8,143.40 492.4,143.00 493.0,143.00 493.6,143.41 494.2,143.66 494.8,144.24 495.4,143.09 496.0,143.61 496.6,143.47 497.2,141.89 497.8,141.05 498.4,140.85 499.0,141.73 499.6,142.34 500.2,141.21 500.8,142.54 501.4,141.98 502.0,143.07 502.6,143.10 503.2,142.92 503.8,142.59 504.4,142.56 505.0,143.33 505.6,143.59 506.2,143.53 506.8,142.70 507.4,142.72 508.0,142.84 508.6,142.87 509.2,143.65 509.8,143.18 510.4,142.51 511.0,142.68 511.6,142.50 512.2,141.60 512.8,141.70 513.4,141.40 514.0,141.99 514.6,141.84 515.2,142.60 515.8,143.24 516.4,142.92 517.0,141.49 517.6,142.57 518.2,143.03 518.8,142.17 519.4,141.95 520.0,142.21 520.6,141.89 521.2,141.31 521.8,141.59 522.4,142.43 523.0,141.88 523.6,141.72 524.2,141.98 524.8,142.44 525.4,142.12 526.0,142.94 526.6,143.22 527.2,142.20 527.8,141.35 528.4,141.41 529.0,141.33 529.6,141.43 530.2,141.96 530.8,142.45 531.4,141.02 532.0,141.25 532.6,142.36 533.2,142.85 533.8,141.93 534.4,141.87 535.0,142.09 535.6,141.79 536.2,143.24 536.8,142.86 537.4,143.48 538.0,143.47 538.6,142.43 539.2,142.06 539.8,143.80 540.4,143.64 541.0,143.62 541.6,143.01 542.2,142.71 542.8,142.10 543.4,142.11 544.0,143.13 544.6,143.06 545.2,142.31 545.8,142.41 546.4,142.33 547.0,141.85 547.6,141.99 548.2,142.06 548.8,141.29 549.4,141.04 550.0,142.37 550.6,143.45 551.2,143.37 551.8,143.14 552.4,143.06 553.0,144.48 553.6,143.09 554.2,143.48 554.8,143.03 555.4,142.23 556.0,142.48 556.6,143.14 557.2,143.43 557.8,142.80 558.4,143.04 559.0,143.18 559.6,143.31 560.2,142.48 560.8,141.43 561.4,141.34 562.0,141.66 562.6,142.08 563.2,143.33 563.8,142.42 564.4,142.36 565.0,142.39 565.6,141.43 566.2,140.88 566.8,141.02 567.4,141.87 568.0,142.62 568.6,141.93 569.2,142.11 569.8,142.70 570.4,142.97 571.0,142.28 571.6,142.43 572.2,141.80 572.8,142.16 573.4,141.73 574.0,142.16 574.6,142.78 575.2,142.75 575.8,143.73 576.4,143.16 577.0,142.61 577.6,142.84 578.2,142.35 578.8,142.26 579.4,142.38 580.0,142.88 580.6,142.46 581.2,141.96 581.8,141.57 582.4,141.81 583.0,142.32 583.6,142.02 584.2,142.08 584.8,142.40 585.4,141.99 586.0,141.60 586.6,141.34 587.2,143.21 587.8,143.57 588.4,142.55 589.0,141.65 589.6,142.19 590.2,142.99 590.8,141.63 591.4,142.22 592.0,143.13 592.6,144.24 593.2,143.58 593.8,142.20 594.4,141.49 595.0,143.06 595.6,142.72 596.2,142.07 596.8,142.28 597.4,143.18 598.0,143.92 598.6,143.47 599.2,143.74 599.8,143.79 600.4,143.71 601.0,143.81 601.6,143.33 602.2,142.83 602.8,141.82 603.4,141.13 604.0,141.43 604.6,142.05 605.2,141.56 605.8,141.24 606.4,141.15 607.0,140.80 607.6,141.45 608.2,141.98 608.8,141.56 609.4,140.81 610.0,140.79 610.6,141.77 611.2,142.51 611.8,140.48 612.4,140.37 613.0,141.16 613.6,141.44 614.2,142.03 614.8,143.23 615.4,143.22 616.0,142.46 616.6,142.93 617.2,142.87 617.8,142.92 618.4,143.27 619.0,143.43 619.6,142.79 620.2,141.95 620.8,141.32 621.4,141.09 622.0,141.37 622.6,141.25 623.2,141.00 623.8,142.12 624.4,141.74 625.0,141.44 625.6,140.89 626.2,141.33 626.8,141.06 627.4,141.59 628.0,141.49 628.6,141.56 629.2,141.49 629.8,141.34 630.4,141.32 631.0,140.75 631.6,140.03 632.2,139.57 632.8,141.54 633.4,141.23 634.0,140.93 634.6,141.75 635.2,141.79 635.8,140.96 636.4,140.84 637.0,141.63 637.6,141.48 638.2,141.66 638.8,142.04 639.4,141.66 640.0,141.24 640.6,140.96 641.2,141.18 641.8,141.04 642.4,141.48 643.0,140.92 643.6,141.04 644.2,140.90 644.8,141.05 645.4,140.91 646.0,141.57 646.6,141.58 647.2,141.07 647.8,142.17 648.4,141.84 649.0,142.52 649.6,141.79 650.2,141.46 650.8,142.75 651.4,142.43 652.0,142.02 652.6,141.76 653.2,142.61 653.8,142.14 654.4,141.02 655.0,141.44 655.6,141.53 656.2,140.65 656.8,140.52 657.4,140.63 658.0,141.09 658.6,141.99 659.2,142.36 659.8,141.83 660.4,142.02 661.0,141.73 661.6,141.42 662.2,141.85 662.8,141.61 663.4,142.59 664.0,143.06 664.6,143.23 665.2,142.20 665.8,141.78 666.4,142.32 667.0,142.55 667.6,141.43 668.2,142.34 668.8,141.42 669.4,141.43 670.0,141.60 670.6,141.39 671.2,142.31 671.8,141.92 672.4,141.26 673.0,141.92 673.6,142.58 674.2,142.20 674.8,141.84 675.4,142.57 676.0,142.25 676.6,141.00 677.2,141.31 677.8,142.03 678.4,141.57 679.0,141.78 679.6,141.72 680.2,142.80 680.8,142.59 681.4,142.40 682.0,142.16 682.6,140.70 683.2,141.12 683.8,141.02 684.4,140.96 685.0,142.22 685.6,141.92 686.2,140.97 686.8,141.30 687.4,141.19 688.0,141.84 688.6,142.18 689.2,141.17 689.8,141.95 690.4,142.31 691.0,143.71 691.6,143.13 692.2,142.61" fill="none" stroke="#000" stroke-width="2.0" stroke-linejoin="round"/><line x1="84.1" y1="142" x2="84.1" y2="127" stroke="#111" stroke-width="0.9"/><line x1="157.8" y1="142" x2="157.8" y2="127" stroke="#111" stroke-width="0.9"/><line x1="173.4" y1="142" x2="173.4" y2="127" stroke="#111" stroke-width="0.9"/><line x1="181.0" y1="142" x2="181.0" y2="131" stroke="#111" stroke-width="0.9"/><line x1="188.1" y1="142" x2="188.1" y2="133" stroke="#111" stroke-width="0.9"/><line x1="192.2" y1="142" x2="192.2" y2="134" stroke="#111" stroke-width="0.9"/><line x1="219.4" y1="142" x2="219.4" y2="127" stroke="#111" stroke-width="0.9"/><line x1="143.7" y1="142" x2="143.7" y2="154" stroke="#111" stroke-width="0.9"/><line x1="163.9" y1="142" x2="163.9" y2="151" stroke="#111" stroke-width="0.9"/><line x1="166.3" y1="142" x2="166.3" y2="157" stroke="#111" stroke-width="0.9"/><line x1="210.4" y1="142" x2="210.4" y2="155" stroke="#111" stroke-width="0.9"/><line x1="311.8" y1="142" x2="311.8" y2="128" stroke="#111" stroke-width="0.9"/><line x1="326.0" y1="142" x2="326.0" y2="127" stroke="#111" stroke-width="0.9"/><line x1="328.5" y1="142" x2="328.5" y2="127" stroke="#111" stroke-width="0.9"/><line x1="331.5" y1="142" x2="331.5" y2="133" stroke="#111" stroke-width="0.9"/><line x1="336.0" y1="142" x2="336.0" y2="134" stroke="#111" stroke-width="0.9"/><line x1="398.0" y1="142" x2="398.0" y2="130" stroke="#111" stroke-width="0.9"/><line x1="383.0" y1="142" x2="383.0" y2="155" stroke="#111" stroke-width="0.9"/><line x1="445.0" y1="142" x2="445.0" y2="152" stroke="#111" stroke-width="0.9"/><line x1="462.0" y1="142" x2="462.0" y2="155" stroke="#111" stroke-width="0.9"/><line x1="509.0" y1="142" x2="509.0" y2="127" stroke="#111" stroke-width="0.9"/><line x1="512.0" y1="142" x2="512.0" y2="127" stroke="#111" stroke-width="0.9"/><line x1="516.0" y1="142" x2="516.0" y2="127" stroke="#111" stroke-width="0.9"/><line x1="526.0" y1="142" x2="526.0" y2="130" stroke="#111" stroke-width="0.9"/><line x1="683.6" y1="142" x2="683.6" y2="126" stroke="#111" stroke-width="0.9"/><line x1="462.4" y1="142" x2="462.4" y2="150" stroke="#111" stroke-width="0.9"/><line x1="614.5" y1="142" x2="614.5" y2="152" stroke="#111" stroke-width="0.9"/><line x1="622.0" y1="142" x2="622.0" y2="155" stroke="#111" stroke-width="0.9"/><line x1="660.0" y1="142" x2="660.0" y2="150" stroke="#111" stroke-width="0.9"/><rect x="79.6" y="510.0" width="612.9" height="3.3" fill="#000"/><text x="70.60" y="129.40" font-size="8.6" text-anchor="end" letter-spacing="0" >5</text><text x="70.40" y="160.60" font-size="8.6" text-anchor="end" letter-spacing="0.6" >-&#8202;5</text><text x="70.90" y="325.30" font-size="8.6" text-anchor="end" letter-spacing="0" >0</text><text x="70.90" y="294.10" font-size="8.6" text-anchor="end" letter-spacing="0" >2</text><text x="70.90" y="262.90" font-size="8.6" text-anchor="end" letter-spacing="0" >4</text><text x="70.90" y="231.70" font-size="8.6" text-anchor="end" letter-spacing="0" >6</text><text x="70.90" y="200.50" font-size="8.6" text-anchor="end" letter-spacing="0" >8</text><text x="70.90" y="169.30" font-size="8.6" text-anchor="end" letter-spacing="0.9" >10</text><text x="70.90" y="491.30" font-size="8.6" text-anchor="end" letter-spacing="0" >0</text><text x="70.90" y="460.10" font-size="8.6" text-anchor="end" letter-spacing="0" >2</text><text x="70.90" y="428.90" font-size="8.6" text-anchor="end" letter-spacing="0" >4</text><text x="70.90" y="397.70" font-size="8.6" text-anchor="end" letter-spacing="0" >6</text><text x="70.90" y="366.50" font-size="8.6" text-anchor="end" letter-spacing="0" >8</text><text x="70.90" y="335.30" font-size="8.6" text-anchor="end" letter-spacing="0.9" >10</text><text x="70.60" y="500.40" font-size="8.6" text-anchor="end" letter-spacing="0" >5</text><text x="70.40" y="531.40" font-size="8.6" text-anchor="end" letter-spacing="0.6" >-&#8202;5</text><text transform="translate(50.20,142.60) rotate(-90)" font-size="8.8" text-anchor="middle" letter-spacing="0.75">ch.1(V)</text><text transform="translate(51.20,242.60) rotate(-90)" font-size="8.6" text-anchor="middle" letter-spacing="0.8">ch.1</text><text transform="translate(58.20,232.80) rotate(-90)" font-size="8.4" text-anchor="middle" letter-spacing="0.95">Frequency&#160;&#160;(kHz)</text><text transform="translate(51.20,408.60) rotate(-90)" font-size="8.6" text-anchor="middle" letter-spacing="0.8">ch.2</text><text transform="translate(58.20,398.80) rotate(-90)" font-size="8.4" text-anchor="middle" letter-spacing="0.95">Frequency&#160;&#160;(kHz)</text><text transform="translate(50.20,513.20) rotate(-90)" font-size="8.8" text-anchor="middle" letter-spacing="0.75">ch.3(V)</text><text x="79.60" y="122.90" font-size="10.4" text-anchor="start" letter-spacing="1.0" >VLF&#160;&#160;Spectra</text><text x="251.30" y="122.90" font-size="8.5" text-anchor="start" letter-spacing="1.0" class="mid">Dec.25,&#160;2025</text><text x="344.10" y="122.90" font-size="8.5" text-anchor="start" letter-spacing="1.05" class="mid">station=ATH</text><text x="438.10" y="122.90" font-size="8.5" text-anchor="start" letter-spacing="0.97" class="mid">start&#160;&#160;UT&#160;&#160;=&#160;&#160;&#160;18:30:0</text><rect x="719" y="201.5" width="9" height="108" fill="url(#cb201)"/><line x1="728.20" y1="201.50" x2="728.20" y2="309.50" stroke="#555" stroke-width="0.9"/><line x1="728.00" y1="201.50" x2="732.80" y2="201.50" stroke="#222" stroke-width="1"/><text x="734.40" y="204.00" font-size="6.6" text-anchor="start" letter-spacing="0.9" class="thin">-3</text><line x1="728.00" y1="228.50" x2="732.80" y2="228.50" stroke="#222" stroke-width="1"/><text x="734.40" y="231.00" font-size="6.6" text-anchor="start" letter-spacing="0.9" class="thin">-4</text><line x1="728.00" y1="255.50" x2="732.80" y2="255.50" stroke="#222" stroke-width="1"/><text x="734.40" y="258.00" font-size="6.6" text-anchor="start" letter-spacing="0.9" class="thin">-5</text><line x1="728.00" y1="282.50" x2="732.80" y2="282.50" stroke="#222" stroke-width="1"/><text x="734.40" y="285.00" font-size="6.6" text-anchor="start" letter-spacing="0.9" class="thin">-6</text><line x1="728.00" y1="309.50" x2="732.80" y2="309.50" stroke="#222" stroke-width="1"/><text x="734.40" y="312.00" font-size="6.6" text-anchor="start" letter-spacing="0.9" class="thin">-7</text><text transform="translate(749.6,260.8) rotate(-90)" font-size="7" text-anchor="middle" letter-spacing="0.35" class="thin">log(PSD)(V<tspan font-size="4" dy="-2.5">2</tspan><tspan dy="2.5">/Hz)</tspan></text><rect x="719" y="367.5" width="9" height="108" fill="url(#cb367)"/><line x1="728.20" y1="367.50" x2="728.20" y2="475.50" stroke="#555" stroke-width="0.9"/><line x1="728.00" y1="367.50" x2="732.80" y2="367.50" stroke="#222" stroke-width="1"/><text x="734.40" y="370.00" font-size="6.6" text-anchor="start" letter-spacing="0.9" class="thin">-3</text><line x1="728.00" y1="394.50" x2="732.80" y2="394.50" stroke="#222" stroke-width="1"/><text x="734.40" y="397.00" font-size="6.6" text-anchor="start" letter-spacing="0.9" class="thin">-4</text><line x1="728.00" y1="421.50" x2="732.80" y2="421.50" stroke="#222" stroke-width="1"/><text x="734.40" y="424.00" font-size="6.6" text-anchor="start" letter-spacing="0.9" class="thin">-5</text><line x1="728.00" y1="448.50" x2="732.80" y2="448.50" stroke="#222" stroke-width="1"/><text x="734.40" y="451.00" font-size="6.6" text-anchor="start" letter-spacing="0.9" class="thin">-6</text><line x1="728.00" y1="475.50" x2="732.80" y2="475.50" stroke="#222" stroke-width="1"/><text x="734.40" y="478.00" font-size="6.6" text-anchor="start" letter-spacing="0.9" class="thin">-7</text><text transform="translate(749.6,426.8) rotate(-90)" font-size="7" text-anchor="middle" letter-spacing="0.35" class="thin">log(PSD)(V<tspan font-size="4" dy="-2.5">2</tspan><tspan dy="2.5">/Hz)</tspan></text></svg></body></html>
